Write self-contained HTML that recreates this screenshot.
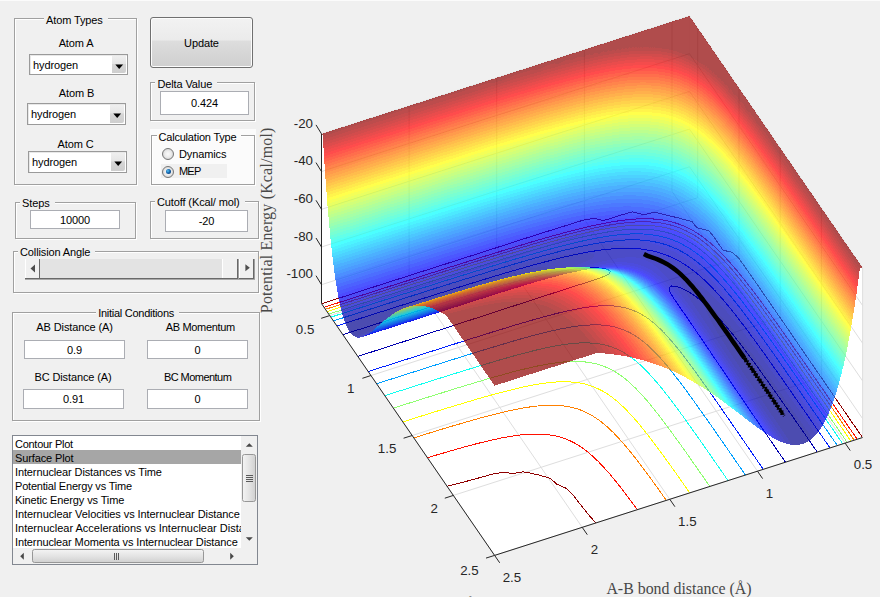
<!DOCTYPE html>
<html><head><meta charset="utf-8"><title>LEPS GUI</title>
<style>
html,body{margin:0;padding:0}
body{width:880px;height:597px;background:#f0f0f0;position:relative;overflow:hidden;font-family:"Liberation Sans",sans-serif;font-size:11px;color:#000}
</style>
</head><body>
<style>
.pn{position:absolute;border:1px solid #a0a0a0;box-shadow:1px 1px 0 #fff, inset 1px 1px 0 #fff;box-sizing:border-box}
.pt{position:absolute;background:#f0f0f0;white-space:nowrap;line-height:13px;height:13px;padding:0 5px 0 2px}
.lb{position:absolute;white-space:nowrap;line-height:13px;height:13px;text-align:center;transform:translateX(-50%)}
.ed{position:absolute;box-sizing:border-box;background:#fff;border:1px solid #abadb3;text-align:center;white-space:nowrap}
.pop{position:absolute;box-sizing:border-box;background:#fff;border:1px solid #9a9a9a;box-shadow:inset 1px 1px 0 #e8e8e8}
.pop span{position:absolute;left:3px;top:4px;line-height:13px}
.pop i{position:absolute;right:1px;top:1px;bottom:1px;width:14px;background:linear-gradient(#efefef 0,#e5e5e5 46%,#d6d6d6 48%,#cecece 100%);border-radius:0 0 2px 0;box-sizing:border-box}
.rd{position:absolute;width:12px;height:12px;border-radius:50%;box-sizing:border-box;border:1px solid #767676;background:radial-gradient(circle at 50% 50%,#fafafa 0,#ececec 45%,#c4c4c4 100%)}
.li{position:absolute;left:2px;height:14px;line-height:14px;white-space:nowrap}
</style>
<div id="panel" style="position:absolute;left:0;top:0;width:880px;height:597px;font-family:'Liberation Sans',sans-serif;font-size:11px;color:#000;letter-spacing:-0.12px">
<div style="position:absolute;left:0;top:0;width:880px;height:1px;background:#fbfbfb"></div>

<!-- Atom Types -->
<div class="pn" style="left:14px;top:18px;width:123px;height:167px"></div>
<div class="pt" style="left:44px;top:14px">Atom Types</div>
<div class="lb" style="left:76px;top:37px">Atom A</div>
<div class="pop" style="left:29px;top:54px;width:99px;height:21px"><span>hydrogen</span><i><svg width="14" height="20" style="position:absolute;left:0;top:0"><path d="M3.3 8.6h7.8l-3.9 4.3z" fill="#000"/></svg></i></div>
<div class="lb" style="left:76.5px;top:87px">Atom B</div>
<div class="pop" style="left:27px;top:103px;width:99px;height:22px"><span>hydrogen</span><i><svg width="14" height="20" style="position:absolute;left:0;top:0"><path d="M3.3 8.6h7.8l-3.9 4.3z" fill="#000"/></svg></i></div>
<div class="lb" style="left:75.5px;top:138px">Atom C</div>
<div class="pop" style="left:28px;top:151px;width:99px;height:22px"><span>hydrogen</span><i><svg width="14" height="20" style="position:absolute;left:0;top:0"><path d="M3.3 8.6h7.8l-3.9 4.3z" fill="#000"/></svg></i></div>

<!-- Update button -->
<div style="position:absolute;left:150px;top:17px;width:103px;height:51px;box-sizing:border-box;border:1px solid #707070;border-radius:3px;background:linear-gradient(#f2f2f2 0,#ebebeb 45%,#dddddd 47%,#cfcfcf 100%);box-shadow:inset 0 0 0 1px #fcfcfc;text-align:center;line-height:50px">Update</div>

<!-- Delta Value -->
<div class="pn" style="left:150px;top:82px;width:105px;height:39px"></div>
<div class="pt" style="left:155.4px;top:78px">Delta Value</div>
<div class="ed" style="left:160px;top:91px;width:89px;height:24px;line-height:22px">0.424</div>

<!-- Calculation Type -->
<div style="position:absolute;left:150px;top:129px;width:106px;height:57px;background:#fbfbfb"></div>
<div class="pn" style="left:151px;top:135px;width:104px;height:50px"></div>
<div class="pt" style="left:156.5px;top:131px;background:#fbfbfb;letter-spacing:-0.2px">Calculation Type</div>
<div class="rd" style="left:162px;top:148px"></div>
<div class="lb" style="left:179px;top:148px;transform:none">Dynamics</div>
<div style="position:absolute;left:161px;top:164px;width:66px;height:14px;background:#f0f0f0"></div>
<div class="rd" style="left:162px;top:165.5px"><b style="position:absolute;left:2.5px;top:2.5px;width:5px;height:5px;border-radius:50%;background:radial-gradient(circle at 38% 38%,#58c8f8 0,#1466b0 45%,#0a2c60 100%)"></b></div>
<div class="lb" style="left:179px;top:165px;transform:none;letter-spacing:-0.8px">MEP</div>

<!-- Steps -->
<div class="pn" style="left:15px;top:202px;width:121px;height:37px"></div>
<div class="pt" style="left:20px;top:197px">Steps</div>
<div class="ed" style="left:30px;top:210px;width:90px;height:19px;line-height:18.5px">10000</div>

<!-- Cutoff -->
<div class="pn" style="left:150px;top:201px;width:109px;height:38px"></div>
<div class="pt" style="left:155px;top:196px">Cutoff (Kcal/ mol)</div>
<div class="ed" style="left:165px;top:210px;width:83px;height:22px;line-height:20px">-20</div>

<!-- Collision Angle -->
<div class="pn" style="left:13px;top:251px;width:246px;height:42px"></div>
<div class="pt" style="left:18px;top:246px">Collision Angle</div>
<div style="position:absolute;left:25px;top:259px;width:230px;height:19px;background:#e3e3e3"></div>
<div style="position:absolute;left:25px;top:278px;width:230px;height:1px;background:#696969"></div>
<div style="position:absolute;left:25px;top:279px;width:230px;height:1px;background:#a9a9a9"></div>
<div style="position:absolute;left:25px;top:259px;width:14px;height:19px;background:#f0f0f0;border-left:1px solid #fff;box-sizing:border-box"><svg width="13" height="19" style="position:absolute;left:0;top:0"><path d="M9 5.5 4.5 9.5 9 13.5z" fill="#4d4d4d"/></svg></div>
<div style="position:absolute;left:39px;top:259px;width:1px;height:20px;background:#696969"></div>
<div style="position:absolute;left:221.5px;top:259px;width:16px;height:19px;background:#f0f0f0;border-left:1.5px solid #fff;box-sizing:border-box"></div>
<div style="position:absolute;left:237px;top:259px;width:1px;height:20px;background:#696969"></div>
<div style="position:absolute;left:238px;top:259px;width:1px;height:20px;background:#a0a0a0"></div>
<div style="position:absolute;left:239px;top:259px;width:14px;height:19px;background:#f0f0f0;border-left:1px solid #fff;box-sizing:border-box"><svg width="14" height="19" style="position:absolute;left:0;top:0"><path d="M5.4 5.2 9.8 8.7 5.4 12.2z" fill="#4d4d4d"/></svg></div>
<div style="position:absolute;left:253px;top:259px;width:1px;height:20px;background:#696969"></div>
<div style="position:absolute;left:254px;top:259px;width:1px;height:20px;background:#a0a0a0"></div>

<!-- Initial Conditions -->
<div class="pn" style="left:12px;top:312px;width:248px;height:109px"></div>
<div class="pt" style="left:96.2px;top:307px;letter-spacing:-0.27px">Initial Conditions</div>
<div class="lb" style="left:74.6px;top:321px">AB Distance (A)</div>
<div class="lb" style="left:200.3px;top:321px;letter-spacing:-0.35px">AB Momentum</div>
<div class="ed" style="left:24px;top:340px;width:101px;height:19px;line-height:18.5px">0.9</div>
<div class="ed" style="left:147px;top:340px;width:101px;height:19px;line-height:18.5px">0</div>
<div class="lb" style="left:73px;top:371px">BC Distance (A)</div>
<div class="lb" style="left:197.6px;top:371px;letter-spacing:-0.55px">BC Momentum</div>
<div class="ed" style="left:23px;top:389px;width:101px;height:20px;line-height:18px">0.91</div>
<div class="ed" style="left:147px;top:389px;width:101px;height:20px;line-height:18px">0</div>

<!-- Listbox -->
<div style="position:absolute;left:12px;top:435px;width:246px;height:130px;box-sizing:border-box;background:#fff;border:1px solid #828790;overflow:hidden">
 <div style="position:absolute;left:0;top:0;width:228px;height:112px;overflow:hidden">
  <div style="position:absolute;left:0;top:14px;width:228px;height:14px;background:#a6a6a6"></div>
  <div class="li" style="top:1px;letter-spacing:-0.27px">Contour Plot</div>
  <div class="li" style="top:15px">Surface Plot</div>
  <div class="li" style="top:29px">Internuclear Distances vs Time</div>
  <div class="li" style="top:43px;letter-spacing:-0.2px">Potential Energy vs Time</div>
  <div class="li" style="top:57px">Kinetic Energy vs Time</div>
  <div class="li" style="top:71px;letter-spacing:-0.08px">Internuclear Velocities vs Internuclear Distance</div>
  <div class="li" style="top:85px;letter-spacing:0">Internuclear Accelerations vs Internuclear Distance</div>
  <div class="li" style="top:99px">Internuclear Momenta vs Internuclear Distance</div>
 </div>
 <!-- vertical scrollbar -->
 <div style="position:absolute;left:228px;top:0;width:16px;height:112px;background:#f0f0f0"></div>
 <svg width="16" height="112" style="position:absolute;left:228px;top:0">
  <path d="M4.8 10.8 8.3 7.2 11.8 10.8z" fill="#484848"/>
  <path d="M4.8 101.2 8.3 104.8 11.8 101.2z" fill="#484848"/>
  <defs><linearGradient id="vg" x1="0" x2="1" y1="0" y2="0"><stop offset="0" stop-color="#f4f4f4"/><stop offset=".5" stop-color="#e4e4e4"/><stop offset="1" stop-color="#d0d0d0"/></linearGradient>
  <linearGradient id="hg" x1="0" x2="0" y1="0" y2="1"><stop offset="0" stop-color="#f4f4f4"/><stop offset=".5" stop-color="#e4e4e4"/><stop offset="1" stop-color="#d0d0d0"/></linearGradient></defs>
  <rect x="1.5" y="18.5" width="13" height="47" rx="2" fill="url(#vg)" stroke="#979797"/>
  <path d="M5 39.5h7M5 41.5h7M5 43.5h7M5 45.5h7" stroke="#5a5a5a" stroke-width="1"/>
 </svg>
 <!-- horizontal scrollbar -->
 <div style="position:absolute;left:0;top:112px;width:244px;height:16px;background:#f0f0f0"></div>
 <svg width="244" height="16" style="position:absolute;left:0;top:112px">
  <path d="M10.8 4.8 7.2 8.3 10.8 11.8z" fill="#484848"/>
  <path d="M217.2 4.8 220.8 8.3 217.2 11.8z" fill="#484848"/>
  <rect x="19.5" y="1.5" width="171" height="13" rx="2" fill="url(#hg)" stroke="#979797"/>
  <path d="M101.5 5v7M103.5 5v7M105.5 5v7" stroke="#5a5a5a" stroke-width="1"/>
 </svg>
</div>
</div>

<svg width="880" height="597" viewBox="0 0 880 597" style="position:absolute;left:0;top:0">
<polygon points="321.5,303.6 689.5,185.7 862.6,437.5 494.6,555.4" fill="#fff"/>
<polygon points="321.5,303.6 689.5,185.7 689.5,16.0 321.5,133.9" fill="#fff"/>
<polygon points="689.5,185.7 862.6,437.5 862.6,267.8 689.5,16.0" fill="#fff"/>
<g stroke="#dedede" stroke-width="1"><line x1="672.0" y1="191.3" x2="845.1" y2="443.1"/><line x1="697.7" y1="197.7" x2="329.7" y2="315.6"/><line x1="672.0" y1="191.3" x2="672.0" y2="21.6"/><line x1="697.7" y1="197.7" x2="697.7" y2="28.0"/><line x1="584.4" y1="219.4" x2="757.5" y2="471.2"/><line x1="739.0" y1="257.6" x2="371.0" y2="375.5"/><line x1="584.4" y1="219.4" x2="584.4" y2="49.7"/><line x1="739.0" y1="257.6" x2="739.0" y2="87.9"/><line x1="496.7" y1="247.5" x2="669.8" y2="499.3"/><line x1="780.2" y1="317.6" x2="412.2" y2="435.5"/><line x1="496.7" y1="247.5" x2="496.7" y2="77.8"/><line x1="780.2" y1="317.6" x2="780.2" y2="147.9"/><line x1="409.1" y1="275.5" x2="582.2" y2="527.3"/><line x1="821.4" y1="377.5" x2="453.4" y2="495.4"/><line x1="409.1" y1="275.5" x2="409.1" y2="105.8"/><line x1="821.4" y1="377.5" x2="821.4" y2="207.8"/><line x1="321.5" y1="303.6" x2="494.6" y2="555.4"/><line x1="862.6" y1="437.5" x2="494.6" y2="555.4"/><line x1="321.5" y1="303.6" x2="321.5" y2="133.9"/><line x1="862.6" y1="437.5" x2="862.6" y2="267.8"/><line x1="321.5" y1="284.7" x2="689.5" y2="166.8"/><line x1="689.5" y1="166.8" x2="862.6" y2="418.6"/><line x1="321.5" y1="247.0" x2="689.5" y2="129.1"/><line x1="689.5" y1="129.1" x2="862.6" y2="380.9"/><line x1="321.5" y1="209.3" x2="689.5" y2="91.4"/><line x1="689.5" y1="91.4" x2="862.6" y2="343.2"/><line x1="321.5" y1="171.6" x2="689.5" y2="53.7"/><line x1="689.5" y1="53.7" x2="862.6" y2="305.5"/><line x1="321.5" y1="133.9" x2="689.5" y2="16.0"/><line x1="689.5" y1="16.0" x2="862.6" y2="267.8"/></g>
<g fill="none" stroke-width="1" shape-rendering="crispEdges"><polyline points="342.8,334.6 345.5,333.8 348.1,333.0 350.8,332.1 353.4,331.3 356.0,330.4 358.7,329.6 361.3,328.8 363.9,327.9 366.6,327.1 369.2,326.3 371.9,325.4 374.5,324.6 377.1,323.7 379.8,322.9 382.4,322.1 385.1,321.2 387.7,320.4 390.3,319.6 393.0,318.7 395.6,317.9 398.3,317.1 400.9,316.2 403.6,315.4 406.2,314.6 408.8,313.7 411.5,312.9 414.1,312.1 416.8,311.2 419.4,310.4 422.1,309.6 424.7,308.7 427.4,307.9 430.0,307.1 432.6,306.3 435.3,305.4 437.9,304.6 440.6,303.8 443.2,303.0 445.9,302.2 448.6,301.3 451.2,300.5 453.9,299.7 456.5,298.9 459.2,298.1 461.8,297.3 464.5,296.5 467.2,295.7 469.8,294.9 472.5,294.1 475.1,293.3 477.8,292.5 480.5,291.7 483.2,290.9 485.8,290.1 488.5,289.3 491.2,288.5 493.9,287.7 496.6,287.0 499.2,286.2 501.9,285.4 504.6,284.7 507.3,283.9 510.0,283.2 512.7,282.4 515.4,281.7 518.1,281.0 520.9,280.3 523.6,279.5 526.3,278.8 529.1,278.1 531.8,277.4 534.5,276.8 537.3,276.1 540.1,275.4 542.8,274.8 545.6,274.2 548.4,273.6 551.2,273.0 553.9,272.4 556.9,271.8 559.7,271.3 562.6,270.8 565.5,270.3 568.4,269.8 571.3,269.4 574.2,269.0 577.0,268.7 580.2,268.3 583.2,268.1 586.3,267.9 589.4,267.8 592.6,267.7 595.8,267.8 599.3,268.0 602.8,268.4 605.7,269.0 608.0,269.7 610.2,271.2 609.5,273.6 607.3,275.0 604.8,276.1 602.3,277.1 599.7,278.1 597.2,279.0 594.5,279.8 591.9,280.7 589.3,281.6 586.6,282.4 584.0,283.2 581.4,284.1 578.7,284.9 576.1,285.8 573.5,286.6 570.8,287.4 568.2,288.3 565.6,289.1 562.9,290.0 560.3,290.8 557.7,291.7 555.0,292.5 552.4,293.4 549.8,294.2 547.1,295.1 544.5,295.9 541.9,296.8 539.2,297.6 536.6,298.5 534.0,299.3 531.4,300.2 528.7,301.1 526.1,301.9 523.5,302.8 520.9,303.6 518.2,304.5 515.6,305.3 513.0,306.2 510.3,307.0 507.7,307.9 505.1,308.8 502.5,309.6 499.8,310.5 497.2,311.3 494.6,312.2 492.0,313.0 489.3,313.9 486.7,314.7 484.1,315.6 481.4,316.4 478.8,317.3 476.2,318.2 473.6,319.0 470.9,319.9 468.3,320.7 465.7,321.6 463.0,322.4 460.4,323.3 457.8,324.1 455.2,325.0 452.5,325.8 449.9,326.7 447.3,327.5 444.6,328.4 442.0,329.2 439.4,330.1 436.7,330.9 434.1,331.8 431.5,332.6 428.9,333.5 426.2,334.3 423.6,335.2 421.0,336.0 418.3,336.9 415.7,337.7 413.1,338.6 410.4,339.4 407.8,340.3 405.2,341.1 402.5,342.0 399.9,342.8 397.3,343.7 394.6,344.5 392.0,345.4 389.4,346.2 386.8,347.1 384.1,347.9 381.5,348.8 378.9,349.6 376.2,350.5 373.6,351.3 371.0,352.2 368.3,353.0 365.7,353.9 363.1,354.7 360.4,355.5 357.8,356.4" stroke="#0000af"/><polyline points="785.4,462.2 784.2,460.4 783.0,458.6 781.7,456.8 780.5,455.0 779.3,453.2 778.0,451.4 776.8,449.6 775.6,447.8 774.3,446.0 773.1,444.2 771.9,442.4 770.6,440.6 769.4,438.8 768.2,437.0 766.9,435.2 765.7,433.3 764.5,431.5 763.2,429.7 762.0,427.9 760.8,426.1 759.5,424.3 758.3,422.5 757.1,420.7 755.8,418.9 754.6,417.1 753.4,415.3 752.1,413.5 750.9,411.7 749.7,409.9 748.5,408.1 747.2,406.3 746.0,404.5 744.8,402.7 743.5,400.8 742.3,399.0 741.1,397.2 739.9,395.4 738.6,393.6 737.4,391.8 736.2,390.0 734.9,388.2 733.7,386.4 732.5,384.6 731.3,382.8 730.0,381.0 728.8,379.2 727.6,377.4 726.4,375.5 725.1,373.7 723.9,371.9 722.7,370.1 721.5,368.3 720.2,366.5 719.0,364.7 717.8,362.9 716.6,361.1 715.4,359.3 714.1,357.5 712.9,355.7 711.7,353.9 710.5,352.0 709.2,350.2 708.0,348.4 706.8,346.6 705.6,344.8 704.4,343.0 703.1,341.2 701.9,339.4 700.7,337.6 699.4,335.8 698.2,334.0 697.0,332.2 695.8,330.4 694.5,328.5 693.3,326.7 692.1,324.9 690.8,323.1 689.6,321.3 688.4,319.5 687.1,317.7 685.9,315.9 684.6,314.1 683.4,312.3 682.1,310.5 680.9,308.7 679.7,306.9 678.4,305.1 677.2,303.3 675.9,301.5 674.7,299.7 673.5,297.9 672.0,295.4 670.6,293.0 669.6,290.8 669.2,287.5 671.6,286.0 675.0,286.2 677.6,286.8 680.1,287.7 683.1,288.9 685.8,290.3 688.3,291.7 690.3,292.9 692.2,294.1 694.2,295.5 696.4,297.0 698.5,298.7 700.5,300.2 702.4,301.8 704.2,303.4 706.0,305.1 707.8,306.7 709.5,308.4 711.2,310.0 712.8,311.7 714.5,313.4 716.1,315.0 717.7,316.7 719.2,318.4 720.7,320.2 722.3,321.9 723.8,323.6 725.2,325.3 726.7,327.0 728.2,328.8 729.6,330.5 731.0,332.3 732.5,334.0 733.9,335.8 735.2,337.5 736.6,339.3 738.0,341.0 739.4,342.8 740.8,344.5 742.1,346.3 743.5,348.1 744.8,349.8 746.1,351.6 747.5,353.4 748.8,355.2 750.1,356.9 751.4,358.7 752.8,360.5 754.1,362.3 755.4,364.1 756.7,365.8 758.0,367.6 759.3,369.4 760.6,371.2 761.8,373.0 763.1,374.8 764.4,376.6 765.7,378.3 767.0,380.1 768.3,381.9 769.5,383.7 770.8,385.5 772.1,387.3 773.3,389.1 774.6,390.9 775.9,392.7 777.2,394.5 778.4,396.3 779.7,398.1 780.9,399.9 782.2,401.7 783.5,403.4 784.7,405.3 786.0,407.0 787.2,408.8 788.5,410.6 789.7,412.4 791.0,414.2 792.3,416.0 793.5,417.8 794.8,419.6 796.0,421.4 797.3,423.2 798.5,425.0 799.8,426.8 801.0,428.6 802.3,430.4 803.5,432.2 804.8,434.0 806.0,435.8 807.3,437.6 808.5,439.4 809.7,441.2 811.0,443.0 812.2,444.8 813.5,446.6 814.7,448.4 816.0,450.2 817.2,452.0" stroke="#0000af"/><polyline points="336.8,325.9 339.5,325.1 342.1,324.2 344.7,323.4 347.4,322.5 350.0,321.7 352.7,320.9 355.3,320.0 357.9,319.2 360.6,318.3 363.2,317.5 365.8,316.6 368.5,315.8 371.1,315.0 373.7,314.1 376.4,313.3 379.0,312.4 381.7,311.6 384.3,310.8 386.9,309.9 389.6,309.1 392.2,308.2 394.9,307.4 397.5,306.6 400.1,305.7 402.8,304.9 405.4,304.1 408.0,303.2 410.7,302.4 413.3,301.5 416.0,300.7 418.6,299.9 421.3,299.0 423.9,298.2 426.5,297.4 429.2,296.5 431.8,295.7 434.5,294.9 437.1,294.0 439.7,293.2 442.4,292.4 445.0,291.6 447.7,290.7 450.3,289.9 453.0,289.1 455.6,288.2 458.3,287.4 460.9,286.6 463.6,285.8 466.2,284.9 468.9,284.1 471.5,283.3 474.2,282.5 476.8,281.7 479.5,280.9 482.1,280.0 484.8,279.2 487.5,278.4 490.1,277.6 492.8,276.8 495.4,276.0 498.1,275.2 500.8,274.4 503.4,273.6 506.1,272.8 508.8,272.0 511.5,271.3 514.1,270.5 516.8,269.7 519.5,268.9 522.2,268.2 524.9,267.4 527.6,266.6 530.3,265.9 533.0,265.1 535.7,264.4 538.4,263.6 541.1,262.9 543.8,262.2 546.5,261.5 549.3,260.8 552.0,260.1 554.7,259.4 557.5,258.7 560.2,258.0 563.0,257.3 565.8,256.7 568.5,256.1 571.3,255.4 574.1,254.8 576.9,254.2 579.7,253.7 582.6,253.1 585.4,252.6 588.3,252.0 591.2,251.5 594.0,251.1 597.0,250.6 599.9,250.2 602.8,249.8 605.8,249.5 608.8,249.2 611.8,248.9 614.9,248.7 618.0,248.5 621.1,248.4 624.3,248.3 627.5,248.3 630.7,248.3 634.1,248.5 637.1,248.7 640.6,249.0 643.9,249.4 646.8,249.9 649.9,250.4 652.7,251.0 655.3,251.6 657.8,252.3 660.2,253.0 662.5,253.8 665.1,254.7 667.8,255.7 670.8,257.0 673.6,258.3 675.9,259.4 678.0,260.5 680.5,261.9 682.8,263.3 684.7,264.5 686.7,265.8 688.7,267.2 690.8,268.7 693.0,270.3 695.0,271.9 697.0,273.5 698.9,275.1 700.7,276.7 702.5,278.3 704.3,280.0 706.1,281.6 707.8,283.2 709.4,284.9 711.1,286.6 712.7,288.3 714.3,290.0 715.9,291.6 717.3,293.2 719.0,295.1 720.5,296.8 722.0,298.5 723.5,300.2 724.9,301.9 726.4,303.7 727.9,305.4 729.3,307.2 730.7,308.9 732.1,310.6 733.5,312.4 734.9,314.1 736.3,315.9 737.7,317.7 739.0,319.4 740.4,321.2 741.7,323.0 743.1,324.7 744.4,326.5 745.8,328.3 747.1,330.0 748.4,331.8 749.7,333.6 751.0,335.4 752.4,337.2 753.7,338.9 755.0,340.7 756.3,342.5 757.6,344.3 758.9,346.1 760.1,347.9 761.4,349.6 762.7,351.4 764.0,353.2 765.3,355.0 766.6,356.8 767.8,358.6 769.1,360.4 770.4,362.2 771.6,364.0 772.9,365.8 774.2,367.6 775.4,369.4 776.7,371.2 778.0,372.9 779.2,374.7 780.5,376.5 781.8,378.3 783.0,380.1 784.3,381.9 785.5,383.7 786.8,385.5 788.0,387.3 789.3,389.1 790.5,390.9 791.8,392.7 793.0,394.5 794.3,396.3 795.5,398.1 796.8,399.9 798.0,401.7 799.3,403.5 800.5,405.3 801.8,407.1 803.0,408.9 804.3,410.7 805.5,412.5 806.8,414.3 808.0,416.1 809.3,417.9 810.5,419.7 811.8,421.5 813.0,423.3 814.3,425.1 815.5,426.9 816.7,428.7 818.0,430.5 819.2,432.3 820.5,434.1 821.7,435.9 823.0,437.7 824.2,439.5 825.4,441.3 826.7,443.1 827.9,444.9 829.2,446.7 830.0,447.9" stroke="#0020ff"/><polyline points="763.3,469.3 762.0,467.5 760.8,465.7 759.5,463.9 758.3,462.1 757.1,460.3 755.8,458.5 754.6,456.7 753.3,454.9 752.1,453.1 750.9,451.3 749.6,449.5 748.4,447.7 747.1,445.9 745.9,444.1 744.7,442.3 743.4,440.5 742.2,438.7 740.9,436.9 739.7,435.1 738.5,433.3 737.2,431.5 736.0,429.7 734.7,427.9 733.5,426.1 732.2,424.3 731.0,422.5 729.8,420.7 728.5,418.9 727.3,417.1 726.0,415.3 724.8,413.5 723.5,411.7 722.3,409.9 721.0,408.1 719.8,406.3 718.5,404.5 717.3,402.7 716.0,400.9 714.8,399.1 713.5,397.3 712.2,395.5 711.0,393.7 709.7,391.9 708.5,390.1 707.2,388.3 705.9,386.5 704.6,384.7 703.4,382.9 702.1,381.1 700.8,379.3 699.5,377.5 698.3,375.8 697.0,374.0 695.7,372.2 694.4,370.4 693.1,368.6 691.8,366.8 690.4,365.1 689.1,363.3 687.8,361.5 686.5,359.7 685.1,358.0 683.8,356.2 682.4,354.4 681.1,352.7 679.7,350.9 678.3,349.2 676.8,347.4 675.4,345.7 674.0,343.9 672.5,342.2 671.0,340.5 669.5,338.8 668.0,337.0 666.5,335.3 664.9,333.6 663.3,332.0 661.6,330.3 659.9,328.6 658.2,327.0 656.4,325.4 654.6,323.7 652.7,322.2 650.7,320.6 648.7,319.0 646.5,317.5 644.2,316.1 642.1,314.8 640.2,313.7 637.5,312.3 634.7,311.1 632.5,310.2 629.7,309.2 627.0,308.4 624.5,307.7 621.9,307.1 618.8,306.6 615.9,306.2 612.5,305.9 609.1,305.8 605.9,305.7 602.7,305.8 599.6,305.9 596.5,306.2 593.5,306.4 590.5,306.8 587.6,307.2 584.7,307.6 581.8,308.1 578.9,308.6 576.1,309.1 573.2,309.7 570.4,310.3 567.6,310.9 564.9,311.5 562.1,312.2 559.3,312.8 556.6,313.5 554.1,314.1 551.1,314.9 548.4,315.6 545.7,316.4 543.0,317.1 540.3,317.8 537.6,318.6 534.9,319.4 532.2,320.1 529.5,320.9 526.8,321.7 524.2,322.5 521.5,323.2 518.8,324.0 516.1,324.8 513.5,325.6 510.8,326.4 508.2,327.3 505.5,328.1 502.8,328.9 500.2,329.7 497.5,330.5 494.9,331.3 492.2,332.1 489.6,333.0 486.9,333.8 484.3,334.6 481.6,335.4 479.0,336.3 476.4,337.1 473.7,337.9 471.1,338.8 468.4,339.6 465.8,340.4 463.1,341.3 460.5,342.1 457.9,342.9 455.2,343.8 452.6,344.6 449.9,345.5 447.3,346.3 444.7,347.1 442.0,348.0 439.4,348.8 436.8,349.7 434.1,350.5 431.5,351.3 428.8,352.2 426.2,353.0 423.6,353.9 420.9,354.7 418.3,355.5 415.7,356.4 413.0,357.2 410.4,358.1 407.8,358.9 405.1,359.8 402.5,360.6 399.8,361.4 397.2,362.3 394.6,363.1 391.9,364.0 389.3,364.8 386.7,365.7 384.0,366.5 381.4,367.3 378.8,368.2 376.1,369.0 373.5,369.9 370.9,370.7 368.2,371.6" stroke="#0020ff"/><polyline points="333.4,320.9 336.0,320.0 338.7,319.2 341.3,318.4 343.9,317.5 346.6,316.7 349.2,315.8 351.8,315.0 354.5,314.1 357.1,313.3 359.7,312.5 362.4,311.6 365.0,310.8 367.7,309.9 370.3,309.1 372.9,308.3 375.6,307.4 378.2,306.6 380.8,305.7 383.5,304.9 386.1,304.1 388.8,303.2 391.4,302.4 394.0,301.5 396.7,300.7 399.3,299.9 401.9,299.0 404.6,298.2 407.2,297.3 409.9,296.5 412.5,295.7 415.1,294.8 417.8,294.0 420.4,293.1 423.1,292.3 425.7,291.5 428.3,290.6 431.0,289.8 433.6,289.0 436.3,288.1 438.9,287.3 441.5,286.5 444.2,285.6 446.8,284.8 449.5,284.0 452.1,283.1 454.8,282.3 457.4,281.5 460.1,280.7 462.7,279.8 465.4,279.0 468.0,278.2 470.7,277.4 473.3,276.5 476.0,275.7 478.6,274.9 481.3,274.1 483.9,273.3 486.6,272.4 489.2,271.6 491.9,270.8 494.5,270.0 497.2,269.2 499.9,268.4 502.5,267.6 505.2,266.8 507.8,266.0 510.5,265.2 513.2,264.4 515.9,263.6 518.5,262.8 521.2,262.1 523.9,261.3 526.6,260.5 529.3,259.7 531.9,259.0 534.6,258.2 537.3,257.4 540.0,256.7 542.7,255.9 545.4,255.2 547.9,254.5 550.9,253.7 553.6,253.0 556.3,252.3 559.0,251.6 561.8,250.9 564.5,250.2 567.3,249.6 570.0,248.9 572.8,248.2 575.6,247.6 578.4,247.0 581.2,246.4 584.0,245.8 586.8,245.2 589.6,244.6 592.5,244.1 595.3,243.6 598.2,243.1 601.1,242.6 604.0,242.1 606.9,241.7 609.6,241.4 612.8,241.0 615.8,240.7 618.9,240.4 621.9,240.2 625.0,240.0 628.0,239.9 631.3,239.8 634.5,239.8 637.8,239.9 641.1,240.1 644.6,240.4 648.0,240.8 651.3,241.2 654.0,241.7 657.0,242.3 659.7,242.9 662.2,243.6 664.5,244.3 666.8,245.0 670.0,246.2 673.0,247.4 676.0,248.7 678.7,250.0 681.0,251.2 683.0,252.3 685.4,253.8 687.7,255.2 689.9,256.7 692.1,258.2 694.2,259.7 696.2,261.3 698.2,262.8 700.1,264.4 702.0,266.0 703.9,267.6 705.6,269.3 707.2,270.7 709.1,272.5 710.8,274.2 712.5,275.9 714.1,277.5 715.7,279.2 717.3,280.9 718.9,282.6 720.4,284.3 722.0,286.0 723.5,287.7 725.0,289.5 726.4,291.2 727.9,292.9 729.3,294.7 730.8,296.4 732.2,298.1 733.6,299.9 735.0,301.6 736.4,303.4 737.8,305.2 739.2,306.9 740.6,308.7 741.9,310.4 743.3,312.2 744.6,314.0 746.0,315.7 747.3,317.5 748.6,319.3 749.9,321.1 751.3,322.8 752.6,324.6 753.9,326.4 755.2,328.2 756.5,330.0 757.8,331.7 759.1,333.5 760.4,335.3 761.7,337.1 763.0,338.9 764.3,340.7 765.5,342.5 766.8,344.3 768.1,346.0 769.4,347.8 770.6,349.6 771.9,351.4 773.2,353.2 774.5,355.0 775.7,356.8 777.0,358.6 778.3,360.4 779.5,362.2 780.8,364.0 782.0,365.8 783.3,367.6 784.6,369.4 785.8,371.2 787.1,373.0 788.3,374.8 789.6,376.6 790.8,378.4 792.1,380.2 793.3,382.0 794.6,383.8 795.8,385.6 797.1,387.4 798.3,389.2 799.6,391.0 800.8,392.8 802.1,394.6 803.3,396.4 804.6,398.2 805.8,400.0 807.1,401.8 808.3,403.6 809.6,405.4 810.8,407.2 812.1,409.0 813.3,410.8 814.6,412.6 815.8,414.4 817.0,416.2 818.3,418.0 819.5,419.8 820.8,421.6 822.0,423.4 823.3,425.2 824.5,427.0 825.7,428.8 827.0,430.6 828.2,432.4 829.5,434.2 830.7,436.0 832.0,437.8 833.2,439.6 834.4,441.4 835.7,443.2 836.9,445.0 837.3,445.6" stroke="#009fff"/><polyline points="745.4,475.0 744.2,473.2 742.9,471.4 741.7,469.6 740.5,467.8 739.2,466.0 738.0,464.2 736.7,462.4 735.5,460.6 734.2,458.8 733.0,457.0 731.7,455.2 730.5,453.4 729.3,451.6 728.0,449.8 726.8,448.0 725.5,446.2 724.3,444.4 723.0,442.6 721.8,440.8 720.5,439.0 719.3,437.2 718.0,435.4 716.8,433.6 715.5,431.8 714.3,430.0 713.0,428.2 711.8,426.4 710.5,424.6 709.3,422.8 708.0,421.0 706.7,419.2 705.5,417.4 704.2,415.6 702.9,413.9 701.7,412.1 700.4,410.3 699.1,408.5 697.9,406.7 696.6,404.9 695.3,403.1 694.0,401.3 692.7,399.5 691.4,397.7 690.2,396.0 688.9,394.2 687.6,392.4 686.2,390.6 684.9,388.8 683.6,387.0 682.3,385.3 681.0,383.5 679.6,381.7 678.3,380.0 676.9,378.2 675.6,376.4 674.2,374.7 672.8,372.9 671.4,371.2 670.0,369.4 668.6,367.7 667.2,365.9 665.7,364.2 664.2,362.5 662.7,360.7 661.2,359.0 659.7,357.3 658.1,355.6 656.6,353.9 654.9,352.2 653.3,350.6 651.6,348.9 649.9,347.3 648.1,345.6 646.2,344.0 644.3,342.4 642.4,340.9 640.3,339.3 638.2,337.8 636.0,336.3 633.7,334.9 631.5,333.6 629.5,332.5 626.7,331.2 623.8,329.9 620.7,328.8 618.3,328.0 615.9,327.3 613.3,326.7 610.5,326.1 607.9,325.7 604.3,325.3 600.9,325.0 597.6,324.9 594.4,324.9 591.4,324.9 588.1,325.1 585.1,325.3 582.0,325.6 579.3,325.9 576.1,326.3 573.2,326.7 570.3,327.2 567.4,327.7 564.5,328.2 561.7,328.7 558.9,329.3 556.1,329.9 553.3,330.5 550.5,331.2 547.7,331.8 545.0,332.5 542.2,333.2 539.5,333.9 536.8,334.6 534.1,335.3 531.3,336.0 528.6,336.8 525.9,337.5 523.2,338.3 520.5,339.0 517.8,339.8 515.3,340.5 512.5,341.3 509.8,342.1 507.1,342.9 504.5,343.7 501.8,344.5 499.1,345.3 496.4,346.1 493.8,346.9 491.1,347.7 488.5,348.5 485.8,349.3 483.2,350.1 480.5,350.9 477.8,351.7 475.2,352.6 472.5,353.4 469.9,354.2 467.2,355.0 464.6,355.9 462.0,356.7 459.3,357.5 456.7,358.3 454.0,359.2 451.4,360.0 448.7,360.8 446.1,361.7 443.4,362.5 440.8,363.3 438.2,364.2 435.5,365.0 432.9,365.8 430.2,366.7 427.6,367.5 425.0,368.4 422.3,369.2 419.7,370.0 417.0,370.9 414.4,371.7 411.8,372.6 409.1,373.4 406.5,374.2 403.9,375.1 401.2,375.9 398.6,376.8 396.0,377.6 393.3,378.4 390.7,379.3 388.0,380.1 385.4,381.0 382.8,381.8 380.1,382.7 377.5,383.5 376.6,383.8" stroke="#009fff"/><polyline points="330.8,317.2 333.5,316.3 336.1,315.5 338.7,314.6 341.4,313.8 344.0,312.9 346.6,312.1 349.3,311.3 351.9,310.4 354.5,309.6 357.2,308.7 359.8,307.9 362.5,307.0 365.1,306.2 367.7,305.4 370.4,304.5 373.0,303.7 375.6,302.8 378.3,302.0 380.9,301.2 383.5,300.3 386.2,299.5 388.8,298.6 391.5,297.8 394.1,297.0 396.7,296.1 399.4,295.3 402.0,294.4 404.6,293.6 407.3,292.8 409.9,291.9 412.6,291.1 415.2,290.2 417.8,289.4 420.5,288.6 423.1,287.7 425.8,286.9 428.4,286.1 431.0,285.2 433.7,284.4 436.3,283.5 439.0,282.7 441.6,281.9 444.2,281.0 446.9,280.2 449.5,279.4 452.2,278.5 454.8,277.7 457.5,276.9 460.1,276.1 462.8,275.2 465.4,274.4 468.0,273.6 470.7,272.7 473.3,271.9 476.0,271.1 478.6,270.3 481.3,269.5 483.9,268.6 486.6,267.8 489.3,267.0 491.9,266.2 494.6,265.4 497.2,264.6 499.9,263.8 502.5,262.9 505.2,262.1 507.9,261.3 510.5,260.5 513.2,259.7 515.9,258.9 518.5,258.1 521.2,257.4 523.9,256.6 526.6,255.8 529.2,255.0 531.9,254.2 534.6,253.5 537.3,252.7 539.9,252.0 542.7,251.2 545.4,250.4 548.1,249.7 550.8,248.9 553.5,248.2 556.2,247.5 558.9,246.8 561.7,246.1 564.4,245.4 567.1,244.7 569.9,244.0 572.6,243.3 575.4,242.7 578.2,242.0 580.9,241.4 583.7,240.7 586.5,240.1 589.3,239.6 592.2,239.0 595.0,238.4 597.8,237.9 600.7,237.4 603.6,236.9 606.5,236.4 609.4,236.0 612.3,235.6 615.3,235.2 618.3,234.9 621.3,234.6 624.3,234.3 627.4,234.1 630.4,234.0 633.7,233.9 636.9,233.9 640.1,233.9 643.4,234.0 646.8,234.3 650.3,234.6 653.8,235.1 657.2,235.7 659.9,236.2 662.5,236.8 665.1,237.5 667.5,238.2 669.8,238.9 673.0,240.1 676.1,241.3 678.9,242.6 681.1,243.7 683.4,244.9 685.9,246.3 688.1,247.5 690.0,248.7 691.9,250.0 693.9,251.4 695.7,252.6 697.7,254.2 699.7,255.7 701.7,257.3 703.6,258.9 705.4,260.5 707.2,262.1 709.0,263.8 710.8,265.4 712.5,267.1 714.1,268.7 715.8,270.4 717.4,272.1 718.9,273.7 720.6,275.5 722.1,277.2 723.6,278.9 725.1,280.6 726.6,282.3 728.1,284.1 729.6,285.8 731.0,287.5 732.5,289.3 733.9,291.0 735.3,292.7 736.7,294.5 738.1,296.2 739.5,298.0 740.9,299.8 742.3,301.5 743.6,303.3 745.0,305.1 746.3,306.8 747.7,308.6 749.0,310.4 750.3,312.1 751.7,313.9 753.0,315.7 754.3,317.5 755.6,319.2 756.9,321.0 758.2,322.8 759.5,324.6 760.8,326.4 762.1,328.2 763.4,329.9 764.7,331.7 766.0,333.5 767.3,335.3 768.6,337.1 769.8,338.9 771.1,340.7 772.4,342.5 773.7,344.3 774.9,346.1 776.2,347.9 777.5,349.6 778.7,351.4 780.0,353.2 781.3,355.0 782.5,356.8 783.8,358.6 785.0,360.4 786.3,362.2 787.6,364.0 788.8,365.8 790.1,367.6 791.3,369.4 792.6,371.2 793.8,373.0 795.1,374.8 796.3,376.6 797.6,378.4 798.8,380.2 800.1,382.0 801.3,383.8 802.6,385.6 803.8,387.4 805.1,389.2 806.3,391.0 807.6,392.8 808.8,394.6 810.1,396.4 811.3,398.2 812.5,400.0 813.8,401.8 815.0,403.6 816.3,405.4 817.5,407.2 818.8,409.0 820.0,410.8 821.3,412.6 822.5,414.4 823.7,416.2 825.0,418.0 826.2,419.8 827.5,421.6 828.7,423.4 830.0,425.2 831.2,427.0 832.4,428.8 833.7,430.6 834.9,432.4 836.2,434.2 837.4,436.0 838.6,437.8 839.9,439.6 841.1,441.4 842.4,443.2 842.8,443.8" stroke="#10ffef"/><polyline points="728.0,480.6 726.8,478.8 725.5,477.0 724.3,475.2 723.1,473.4 721.8,471.6 720.6,469.8 719.3,468.0 718.1,466.2 716.8,464.4 715.6,462.6 714.3,460.8 713.1,459.0 711.8,457.2 710.6,455.4 709.3,453.6 708.1,451.8 706.8,450.0 705.6,448.2 704.3,446.4 703.1,444.6 701.8,442.8 700.5,441.0 699.3,439.2 698.0,437.4 696.7,435.6 695.5,433.8 694.2,432.1 692.9,430.3 691.7,428.5 690.4,426.7 689.1,424.9 687.8,423.1 686.6,421.3 685.3,419.5 684.0,417.7 682.7,415.9 681.4,414.2 680.1,412.4 678.8,410.6 677.5,408.8 676.1,407.0 674.8,405.3 673.5,403.5 672.2,401.7 670.8,399.9 669.5,398.2 668.1,396.4 666.7,394.7 665.4,392.9 664.0,391.1 662.6,389.4 661.2,387.6 659.7,385.9 658.3,384.2 656.8,382.4 655.3,380.7 653.8,379.0 652.3,377.3 650.8,375.6 649.2,373.9 647.6,372.2 646.0,370.5 644.3,368.8 642.6,367.2 640.9,365.5 639.1,363.9 637.3,362.3 635.4,360.7 633.4,359.1 631.4,357.6 629.2,356.1 627.0,354.6 624.7,353.1 622.7,352.0 620.5,350.8 617.8,349.5 614.9,348.2 611.8,347.0 609.5,346.3 607.1,345.6 604.5,344.9 601.8,344.3 598.9,343.8 595.6,343.4 592.0,343.1 588.6,342.9 585.3,342.8 582.1,342.9 579.0,343.0 575.9,343.2 572.9,343.5 569.9,343.8 566.9,344.1 564.0,344.5 561.1,345.0 558.2,345.5 555.6,345.9 552.5,346.5 549.8,347.1 546.8,347.7 544.0,348.3 541.3,348.9 538.5,349.5 535.7,350.2 533.0,350.9 530.2,351.6 527.5,352.3 524.8,353.0 522.0,353.7 519.3,354.4 516.6,355.1 513.9,355.9 511.2,356.6 508.5,357.4 505.8,358.2 503.2,358.9 500.5,359.7 497.8,360.5 495.1,361.3 492.4,362.1 489.8,362.9 487.1,363.7 484.4,364.5 481.8,365.3 479.1,366.1 476.5,366.9 473.8,367.7 471.1,368.5 468.5,369.3 465.8,370.1 463.2,370.9 460.5,371.8 457.9,372.6 455.2,373.4 452.6,374.2 449.9,375.1 447.3,375.9 444.6,376.7 442.0,377.5 439.3,378.4 436.7,379.2 434.1,380.0 431.4,380.9 428.8,381.7 426.1,382.5 423.5,383.4 420.9,384.2 418.2,385.0 415.6,385.9 412.9,386.7 410.3,387.6 407.7,388.4 405.0,389.2 402.4,390.1 399.7,390.9 397.1,391.8 394.5,392.6 391.8,393.4 389.2,394.3 386.6,395.1 384.8,395.7" stroke="#10ffef"/><polyline points="328.7,314.1 331.4,313.3 334.0,312.4 336.6,311.6 339.3,310.8 341.9,309.9 344.6,309.1 347.2,308.2 349.8,307.4 352.5,306.5 355.1,305.7 357.7,304.9 360.4,304.0 363.0,303.2 365.6,302.3 368.3,301.5 370.9,300.6 373.6,299.8 376.2,299.0 378.8,298.1 381.5,297.3 384.1,296.4 386.7,295.6 389.4,294.8 392.0,293.9 394.6,293.1 397.3,292.2 399.9,291.4 402.6,290.6 405.2,289.7 407.8,288.9 410.5,288.0 413.1,287.2 415.7,286.4 418.4,285.5 421.0,284.7 423.7,283.8 426.3,283.0 428.9,282.2 431.6,281.3 434.2,280.5 436.9,279.7 439.5,278.8 442.1,278.0 444.8,277.2 447.4,276.3 450.1,275.5 452.7,274.7 455.4,273.8 458.0,273.0 460.6,272.2 463.3,271.3 465.9,270.5 468.5,269.7 471.2,268.9 473.9,268.0 476.5,267.2 479.2,266.4 481.8,265.6 484.5,264.7 487.1,263.9 489.8,263.1 492.4,262.3 495.1,261.5 497.7,260.7 500.4,259.8 503.1,259.0 505.7,258.2 508.4,257.4 511.0,256.6 513.7,255.8 516.4,255.0 519.0,254.2 521.7,253.4 524.4,252.6 527.1,251.8 529.7,251.1 532.4,250.3 535.1,249.5 537.8,248.7 540.5,248.0 543.2,247.2 545.9,246.5 548.6,245.7 551.3,245.0 554.0,244.2 556.7,243.5 559.4,242.8 562.1,242.0 564.8,241.3 567.6,240.6 570.3,239.9 573.1,239.3 575.8,238.6 578.6,237.9 581.3,237.3 584.1,236.6 586.9,236.0 589.7,235.4 592.5,234.8 595.1,234.3 598.2,233.7 600.8,233.2 603.9,232.6 606.8,232.1 609.6,231.7 612.6,231.2 615.5,230.8 618.4,230.5 621.4,230.1 624.5,229.8 627.5,229.6 630.6,229.4 633.7,229.2 636.8,229.2 640.1,229.1 643.0,229.2 646.6,229.3 650.0,229.6 653.5,229.9 657.0,230.4 660.3,231.0 663.0,231.6 665.7,232.2 668.1,232.9 670.5,233.6 673.8,234.7 676.8,235.9 678.9,236.7 681.4,237.9 683.6,238.9 686.2,240.3 688.1,241.4 690.3,242.7 692.6,244.1 694.8,245.6 697.0,247.1 699.1,248.6 701.1,250.2 703.0,251.8 704.9,253.3 706.8,254.9 708.6,256.6 710.4,258.1 712.2,259.8 713.9,261.5 715.6,263.1 717.2,264.8 718.8,266.5 720.4,268.2 722.0,269.9 723.6,271.6 725.1,273.3 726.6,275.0 728.1,276.7 729.6,278.4 731.1,280.2 732.5,281.9 734.0,283.6 735.4,285.4 736.8,287.1 738.2,288.9 739.6,290.6 741.0,292.4 742.4,294.1 743.8,295.9 745.1,297.7 746.5,299.4 747.9,301.2 749.2,303.0 750.5,304.7 751.9,306.5 753.2,308.3 754.5,310.1 755.8,311.8 757.2,313.6 758.5,315.4 759.8,317.2 761.1,319.0 762.4,320.8 763.7,322.5 764.9,324.3 766.2,326.1 767.5,327.9 768.8,329.7 770.1,331.5 771.4,333.3 772.6,335.1 773.9,336.9 775.2,338.6 776.5,340.4 777.7,342.2 779.0,344.0 780.3,345.8 781.5,347.6 782.8,349.4 784.0,351.2 785.3,353.0 786.6,354.8 787.8,356.6 789.1,358.4 790.3,360.2 791.6,362.0 792.8,363.8 794.1,365.6 795.4,367.4 796.6,369.2 797.9,371.0 799.1,372.8 800.4,374.6 801.6,376.4 802.9,378.2 804.1,380.0 805.4,381.8 806.6,383.6 807.8,385.4 809.1,387.2 810.3,389.0 811.6,390.8 812.8,392.6 814.1,394.4 815.3,396.2 816.6,398.0 817.8,399.8 819.1,401.6 820.3,403.4 821.5,405.2 822.8,407.0 824.0,408.8 825.3,410.6 826.5,412.4 827.8,414.2 829.0,416.0 830.2,417.8 831.5,419.6 832.7,421.4 834.0,423.2 835.2,425.0 836.5,426.8 837.7,428.6 838.9,430.4 840.2,432.2 841.4,434.0 842.7,435.8 843.9,437.6 845.1,439.4 846.4,441.2 847.2,442.4" stroke="#8fff70"/><polyline points="709.8,486.4 708.6,484.6 707.3,482.8 706.1,481.0 704.8,479.2 703.6,477.4 702.3,475.6 701.1,473.9 699.8,472.1 698.6,470.3 697.3,468.5 696.1,466.7 694.8,464.9 693.5,463.1 692.3,461.3 691.0,459.5 689.8,457.7 688.5,455.9 687.2,454.1 686.0,452.3 684.7,450.5 683.4,448.7 682.1,446.9 680.9,445.1 679.6,443.3 678.3,441.5 677.0,439.8 675.7,438.0 674.4,436.2 673.1,434.4 671.8,432.6 670.5,430.8 669.2,429.1 667.9,427.3 666.6,425.5 665.3,423.7 663.9,422.0 662.6,420.2 661.2,418.4 659.9,416.6 658.5,414.9 657.1,413.1 655.8,411.4 654.4,409.6 653.0,407.9 651.5,406.1 650.1,404.4 648.7,402.6 647.2,400.9 645.7,399.2 644.2,397.5 642.7,395.8 641.1,394.1 639.5,392.4 637.9,390.7 636.3,389.0 634.6,387.3 632.9,385.7 631.2,384.0 629.4,382.4 627.5,380.8 625.6,379.2 623.6,377.7 621.6,376.1 619.4,374.6 617.2,373.1 614.9,371.7 612.4,370.3 609.8,368.9 607.0,367.6 604.0,366.4 600.7,365.2 598.4,364.5 595.9,363.8 593.3,363.2 590.4,362.6 587.3,362.2 584.5,361.9 581.1,361.6 578.1,361.5 574.5,361.4 571.3,361.5 568.5,361.6 565.6,361.8 562.5,362.1 559.1,362.4 556.2,362.8 553.2,363.2 550.3,363.6 547.4,364.1 544.6,364.6 541.7,365.2 538.9,365.7 536.1,366.3 533.3,366.9 530.5,367.6 527.7,368.2 525.0,368.9 522.2,369.5 519.5,370.2 516.8,370.9 514.0,371.6 511.3,372.3 508.6,373.1 505.9,373.8 503.2,374.6 500.5,375.3 497.8,376.1 495.1,376.8 492.4,377.6 489.7,378.4 487.0,379.1 484.4,379.9 481.7,380.7 479.0,381.5 476.3,382.3 473.7,383.1 471.0,383.9 468.4,384.7 465.7,385.5 463.0,386.3 460.4,387.1 457.7,387.9 455.1,388.8 452.4,389.6 449.8,390.4 447.1,391.2 444.5,392.0 441.8,392.9 439.2,393.7 436.5,394.5 433.9,395.3 431.2,396.2 428.6,397.0 425.9,397.8 423.3,398.7 420.6,399.5 418.0,400.3 415.4,401.2 412.7,402.0 410.1,402.8 407.4,403.7 405.1,404.4 402.2,405.3 399.5,406.2 396.9,407.0 394.2,407.9 393.4,408.1" stroke="#8fff70"/><polyline points="327.0,311.6 329.6,310.7 332.2,309.9 334.9,309.0 337.5,308.2 340.1,307.3 342.8,306.5 345.4,305.7 348.1,304.8 350.7,304.0 353.3,303.1 356.0,302.3 358.6,301.4 361.2,300.6 363.9,299.8 366.5,298.9 369.1,298.1 371.8,297.2 374.4,296.4 377.1,295.5 379.7,294.7 382.3,293.9 385.0,293.0 387.6,292.2 390.2,291.3 392.9,290.5 395.5,289.7 398.1,288.8 400.8,288.0 403.4,287.1 406.1,286.3 408.7,285.5 411.3,284.6 414.0,283.8 416.6,282.9 419.3,282.1 421.9,281.3 424.5,280.4 427.2,279.6 429.8,278.8 432.4,277.9 435.1,277.1 437.7,276.2 440.4,275.4 443.0,274.6 445.7,273.7 448.3,272.9 450.9,272.1 453.6,271.2 456.2,270.4 458.9,269.6 461.5,268.7 464.2,267.9 466.8,267.1 469.4,266.3 472.1,265.4 474.7,264.6 477.4,263.8 480.0,262.9 482.7,262.1 485.3,261.3 488.0,260.5 490.6,259.7 493.3,258.8 495.9,258.0 498.6,257.2 501.2,256.4 503.9,255.6 506.6,254.8 509.2,254.0 511.9,253.2 514.6,252.4 517.2,251.6 519.9,250.8 522.6,250.0 525.2,249.2 527.9,248.4 530.6,247.6 533.2,246.8 535.9,246.0 538.6,245.3 541.3,244.5 544.0,243.7 546.7,243.0 549.4,242.2 552.0,241.5 554.8,240.7 557.5,240.0 560.2,239.3 562.9,238.5 565.6,237.8 568.4,237.1 571.1,236.4 573.8,235.7 576.6,235.0 579.3,234.4 582.1,233.7 584.9,233.1 587.7,232.4 590.5,231.8 593.2,231.2 596.1,230.6 598.9,230.1 601.7,229.5 604.6,229.0 607.5,228.5 610.3,228.0 613.2,227.5 616.2,227.1 619.1,226.7 622.1,226.4 625.1,226.0 628.1,225.8 631.2,225.5 634.2,225.4 637.4,225.2 640.6,225.2 643.8,225.2 647.1,225.3 650.1,225.5 653.7,225.8 657.1,226.2 659.7,226.6 663.1,227.2 665.8,227.8 668.4,228.4 670.9,229.1 673.2,229.8 676.5,230.9 679.6,232.1 682.5,233.4 685.2,234.7 687.6,236.0 690.3,237.5 692.7,238.9 694.9,240.3 696.9,241.7 698.7,242.9 700.7,244.4 702.8,246.0 704.7,247.6 706.7,249.1 708.4,250.7 710.3,252.4 712.1,254.0 713.9,255.6 715.6,257.3 717.3,258.9 718.9,260.6 720.5,262.3 722.1,264.0 723.7,265.7 725.3,267.3 726.8,269.1 728.3,270.8 729.8,272.5 731.3,274.2 732.8,276.0 734.2,277.7 735.7,279.4 737.1,281.2 738.5,282.9 739.9,284.7 741.3,286.4 742.7,288.2 744.1,289.9 745.5,291.7 746.9,293.5 748.2,295.2 749.6,297.0 750.9,298.8 752.2,300.5 753.6,302.3 754.9,304.1 756.2,305.9 757.5,307.6 758.8,309.4 760.2,311.2 761.5,313.0 762.8,314.8 764.1,316.5 765.4,318.3 766.6,320.1 767.9,321.9 769.2,323.7 770.5,325.5 771.8,327.3 773.1,329.1 774.3,330.8 775.6,332.6 776.9,334.4 778.2,336.2 779.4,338.0 780.7,339.8 782.0,341.6 783.2,343.4 784.5,345.2 785.7,347.0 787.0,348.8 788.3,350.6 789.5,352.4 790.8,354.2 792.0,356.0 793.3,357.8 794.5,359.6 795.8,361.4 797.0,363.2 798.3,365.0 799.5,366.8 800.8,368.6 802.0,370.4 803.3,372.2 804.5,374.0 805.8,375.8 807.0,377.6 808.3,379.4 809.5,381.2 810.8,383.0 812.0,384.8 813.3,386.6 814.5,388.4 815.8,390.2 817.0,392.0 818.3,393.8 819.5,395.6 820.7,397.4 822.0,399.2 823.2,401.0 824.5,402.8 825.7,404.6 827.0,406.4 828.2,408.2 829.4,410.0 830.7,411.8 831.9,413.6 833.2,415.4 834.4,417.2 835.7,419.0 836.9,420.8 838.1,422.6 839.4,424.4 840.6,426.2 841.9,428.0 843.1,429.8 844.4,431.6 845.6,433.4 846.8,435.2 848.1,437.0 849.3,438.8 850.6,440.6 851.0,441.2" stroke="#ff0"/><polyline points="689.7,492.9 688.5,491.1 687.2,489.3 686.0,487.5 684.7,485.7 683.4,483.9 682.2,482.1 680.9,480.3 679.7,478.5 678.4,476.7 677.1,474.9 675.9,473.1 674.6,471.3 673.3,469.5 672.0,467.8 670.8,466.0 669.5,464.2 668.2,462.4 666.9,460.6 665.6,458.8 664.3,457.0 663.0,455.2 661.7,453.5 660.4,451.7 659.1,449.9 657.8,448.1 656.5,446.3 655.1,444.6 653.8,442.8 652.5,441.0 651.1,439.3 649.8,437.5 648.4,435.7 647.0,434.0 645.6,432.2 644.2,430.5 642.8,428.7 641.4,427.0 640.0,425.2 638.5,423.5 637.1,421.8 635.6,420.0 634.1,418.3 632.6,416.6 631.0,414.9 629.4,413.2 627.8,411.5 626.2,409.8 624.5,408.2 622.8,406.5 621.1,404.9 619.4,403.4 617.5,401.6 615.6,400.0 613.6,398.5 611.6,396.9 609.4,395.4 607.2,393.9 604.9,392.5 602.5,391.0 599.9,389.7 597.4,388.5 595.2,387.5 592.9,386.6 590.0,385.6 587.6,384.8 585.1,384.1 582.5,383.5 579.7,383.0 576.5,382.5 573.1,382.1 569.3,381.9 566.0,381.8 562.8,381.7 559.6,381.8 556.5,382.0 553.4,382.2 550.4,382.5 547.4,382.8 544.6,383.2 541.6,383.6 538.7,384.1 535.8,384.6 532.9,385.1 530.2,385.6 527.3,386.2 524.4,386.8 521.6,387.4 518.9,388.0 516.1,388.7 513.3,389.3 510.6,390.0 507.8,390.7 505.1,391.4 502.4,392.1 499.6,392.8 496.9,393.5 494.2,394.3 491.5,395.0 488.8,395.8 486.1,396.5 483.4,397.3 480.7,398.1 478.1,398.8 475.4,399.6 472.7,400.4 470.0,401.2 467.4,402.0 464.7,402.8 462.0,403.6 459.4,404.4 456.7,405.2 454.0,406.0 451.4,406.8 448.7,407.6 446.1,408.4 443.4,409.2 440.7,410.0 438.1,410.8 435.4,411.7 432.8,412.5 430.1,413.3 427.5,414.1 424.9,415.0 422.2,415.8 419.6,416.6 416.9,417.5 414.3,418.3 411.6,419.1 409.0,419.9 406.3,420.8 403.7,421.6 402.8,421.9" stroke="#ff0"/><polyline points="325.4,309.3 328.1,308.5 330.7,307.6 333.3,306.8 336.0,305.9 338.6,305.1 341.2,304.3 343.9,303.4 346.5,302.6 349.1,301.7 351.8,300.9 354.4,300.0 357.1,299.2 359.7,298.4 362.3,297.5 365.0,296.7 367.6,295.8 370.2,295.0 372.9,294.1 375.5,293.3 378.1,292.5 380.8,291.6 383.4,290.8 386.1,289.9 388.7,289.1 391.3,288.2 394.0,287.4 396.6,286.6 399.2,285.7 401.9,284.9 404.5,284.0 407.1,283.2 409.8,282.4 412.4,281.5 415.1,280.7 417.7,279.8 420.3,279.0 423.0,278.2 425.6,277.3 428.3,276.5 430.9,275.7 433.5,274.8 436.2,274.0 438.8,273.1 441.5,272.3 444.1,271.5 446.7,270.6 449.4,269.8 452.0,269.0 454.7,268.1 457.3,267.3 459.9,266.5 462.6,265.6 465.2,264.8 467.9,264.0 470.5,263.1 473.2,262.3 475.8,261.5 478.5,260.7 481.1,259.8 483.8,259.0 486.4,258.2 489.1,257.4 491.7,256.6 494.4,255.7 497.0,254.9 499.7,254.1 502.3,253.3 505.0,252.5 507.6,251.7 510.3,250.9 513.0,250.0 515.6,249.2 518.3,248.4 521.0,247.6 523.6,246.8 526.3,246.1 529.0,245.3 531.6,244.5 534.3,243.7 537.0,242.9 539.7,242.1 542.4,241.4 545.0,240.6 547.7,239.8 550.4,239.1 553.1,238.3 555.8,237.6 558.5,236.8 561.3,236.1 564.0,235.4 566.7,234.7 569.4,233.9 572.1,233.2 574.9,232.6 577.6,231.9 580.4,231.2 583.1,230.5 585.9,229.9 588.7,229.2 591.5,228.6 594.3,228.0 597.1,227.4 599.9,226.8 602.7,226.3 605.6,225.8 608.4,225.2 611.3,224.7 614.2,224.3 617.1,223.8 620.1,223.4 623.0,223.1 626.0,222.7 629.0,222.4 632.1,222.2 635.1,222.0 638.3,221.9 641.4,221.8 644.6,221.8 647.7,221.8 651.2,222.0 654.6,222.2 658.1,222.6 661.6,223.1 664.8,223.7 667.5,224.3 670.1,224.9 672.5,225.6 674.9,226.3 677.3,227.1 680.1,228.2 683.2,229.5 686.0,230.8 688.7,232.2 691.2,233.5 693.2,234.7 695.2,235.9 697.5,237.4 699.6,238.9 701.8,240.4 703.8,242.0 705.6,243.4 707.7,245.1 709.6,246.7 711.4,248.3 713.2,250.0 715.0,251.6 716.5,253.1 718.4,254.9 719.9,256.4 721.7,258.3 723.3,259.9 724.9,261.6 726.4,263.3 727.9,265.0 729.5,266.8 731.0,268.5 732.5,270.2 734.0,271.9 735.4,273.7 736.9,275.4 738.3,277.1 739.7,278.9 741.1,280.6 742.5,282.4 743.9,284.1 745.3,285.9 746.7,287.6 748.1,289.4 749.4,291.2 750.8,292.9 752.1,294.7 753.4,296.5 754.8,298.2 756.1,300.0 757.4,301.8 758.7,303.6 760.1,305.4 761.4,307.1 762.7,308.9 764.0,310.7 765.3,312.5 766.6,314.3 767.9,316.1 769.1,317.8 770.4,319.6 771.7,321.4 773.0,323.2 774.3,325.0 775.6,326.8 776.8,328.6 778.1,330.4 779.4,332.2 780.6,334.0 781.9,335.8 783.2,337.6 784.4,339.3 785.7,341.1 787.0,342.9 788.2,344.7 789.5,346.5 790.7,348.3 792.0,350.1 793.3,351.9 794.5,353.7 795.8,355.5 797.0,357.3 798.3,359.1 799.5,360.9 800.8,362.7 802.0,364.5 803.3,366.3 804.5,368.1 805.8,369.9 807.0,371.7 808.3,373.5 809.5,375.3 810.8,377.1 812.0,378.9 813.3,380.7 814.5,382.5 815.7,384.3 817.0,386.1 818.2,387.9 819.5,389.7 820.7,391.5 822.0,393.3 823.2,395.1 824.5,396.9 825.7,398.7 826.9,400.5 828.2,402.3 829.4,404.1 830.7,405.9 831.9,407.7 833.2,409.5 834.4,411.3 835.6,413.1 836.9,414.9 838.1,416.7 839.4,418.5 840.6,420.3 841.8,422.1 843.1,424.0 844.3,425.8 845.6,427.6 846.8,429.4 848.1,431.2 849.3,433.0 850.5,434.8 851.8,436.6 853.0,438.4 854.3,440.2" stroke="#ff8000"/><polyline points="666.4,500.4 665.1,498.6 663.8,496.8 662.5,495.0 661.3,493.2 660.0,491.4 658.7,489.6 657.4,487.8 656.2,486.0 654.9,484.3 653.6,482.5 652.3,480.7 651.0,478.9 649.7,477.1 648.4,475.3 647.1,473.6 645.7,471.8 644.4,470.0 643.1,468.2 641.8,466.5 640.4,464.7 639.1,462.9 637.8,461.2 636.4,459.4 635.0,457.6 633.6,455.9 632.2,454.1 630.8,452.4 629.4,450.6 627.9,448.9 626.5,447.1 625.0,445.4 623.5,443.7 622.0,442.0 620.5,440.3 619.0,438.6 617.4,436.9 615.8,435.2 614.2,433.5 612.5,431.8 610.8,430.2 609.0,428.5 607.3,426.9 605.4,425.3 603.5,423.7 601.6,422.1 599.5,420.6 597.4,419.1 595.2,417.6 592.9,416.1 591.0,415.0 588.8,413.8 586.1,412.4 583.3,411.1 580.2,409.9 577.1,408.8 574.5,408.1 572.0,407.4 569.3,406.8 566.3,406.3 563.3,405.9 559.8,405.5 556.5,405.3 553.2,405.2 550.0,405.2 546.8,405.3 543.8,405.4 540.8,405.7 537.6,406.0 534.6,406.3 531.7,406.7 528.8,407.1 525.9,407.6 523.0,408.0 520.1,408.6 517.3,409.1 514.7,409.6 511.6,410.3 508.8,410.9 506.1,411.5 503.3,412.1 500.5,412.8 497.8,413.5 495.0,414.2 492.3,414.9 489.6,415.6 486.8,416.3 484.1,417.0 481.4,417.7 478.7,418.5 476.0,419.2 473.3,420.0 470.6,420.8 467.9,421.5 465.3,422.3 462.6,423.1 459.9,423.9 457.2,424.6 454.6,425.4 451.9,426.2 449.2,427.0 446.5,427.8 443.9,428.6 441.2,429.4 438.6,430.2 435.9,431.0 433.3,431.9 430.6,432.7 427.9,433.5 425.3,434.3 422.6,435.1 420.0,436.0 417.3,436.8 414.7,437.6 413.8,437.9" stroke="#ff8000"/><polyline points="324.0,307.3 326.7,306.5 329.3,305.6 332.0,304.8 334.6,303.9 337.2,303.1 339.9,302.2 342.5,301.4 345.1,300.6 347.8,299.7 350.4,298.9 353.0,298.0 355.7,297.2 358.3,296.3 360.9,295.5 363.6,294.7 366.2,293.8 368.9,293.0 371.5,292.1 374.1,291.3 376.8,290.4 379.4,289.6 382.0,288.8 384.7,287.9 387.3,287.1 389.9,286.2 392.6,285.4 395.2,284.6 397.9,283.7 400.5,282.9 403.1,282.0 405.8,281.2 408.4,280.4 411.0,279.5 413.7,278.7 416.3,277.8 419.0,277.0 421.6,276.2 424.2,275.3 426.9,274.5 429.5,273.6 432.1,272.8 434.8,272.0 437.4,271.1 440.1,270.3 442.7,269.5 445.3,268.6 448.0,267.8 450.6,266.9 453.3,266.1 455.9,265.3 458.6,264.4 461.2,263.6 463.8,262.8 466.5,262.0 469.1,261.1 471.8,260.3 474.4,259.5 477.1,258.6 479.7,257.8 482.4,257.0 485.0,256.2 487.7,255.3 490.3,254.5 493.0,253.7 495.6,252.9 498.3,252.1 500.9,251.2 503.6,250.4 506.2,249.6 508.9,248.8 511.6,248.0 514.2,247.2 516.9,246.4 519.5,245.6 522.2,244.8 524.9,244.0 527.5,243.2 530.2,242.4 532.9,241.6 535.6,240.8 538.2,240.0 540.9,239.3 543.6,238.5 546.3,237.7 549.0,237.0 551.7,236.2 554.4,235.5 557.1,234.7 559.8,234.0 562.5,233.2 565.2,232.5 567.9,231.8 570.6,231.1 573.4,230.4 576.1,229.7 578.9,229.0 581.6,228.3 584.4,227.6 587.1,227.0 589.9,226.3 592.7,225.7 595.5,225.1 598.3,224.5 601.1,223.9 603.9,223.4 606.8,222.8 609.5,222.3 612.5,221.8 615.4,221.3 618.3,220.9 621.2,220.5 624.2,220.1 627.2,219.8 630.2,219.5 633.2,219.2 636.3,219.0 639.4,218.8 642.6,218.8 645.8,218.7 649.0,218.8 652.2,218.9 655.7,219.2 659.2,219.5 662.6,220.0 665.6,220.5 668.4,221.1 671.0,221.7 673.5,222.4 675.9,223.1 678.2,223.9 681.1,224.9 683.3,225.8 685.6,226.8 688.0,228.0 690.5,229.2 693.2,230.7 695.6,232.2 697.7,233.5 699.7,234.8 701.5,236.1 703.6,237.6 705.7,239.2 707.6,240.8 709.6,242.3 711.4,243.9 713.3,245.6 715.0,247.2 716.8,248.8 718.5,250.5 720.1,252.1 721.8,253.8 723.5,255.5 725.1,257.2 726.6,258.9 728.2,260.6 729.7,262.3 731.3,264.0 732.8,265.7 734.2,267.4 735.7,269.2 737.2,270.9 738.6,272.6 740.0,274.4 741.5,276.1 742.9,277.9 744.3,279.6 745.7,281.4 747.0,283.1 748.4,284.9 749.8,286.7 751.1,288.4 752.5,290.2 753.8,292.0 755.2,293.7 756.5,295.5 757.8,297.3 759.1,299.1 760.5,300.8 761.8,302.6 763.1,304.4 764.4,306.2 765.7,308.0 767.0,309.7 768.3,311.5 769.6,313.3 770.9,315.1 772.1,316.9 773.4,318.7 774.7,320.5 776.0,322.3 777.3,324.0 778.5,325.8 779.8,327.6 781.1,329.4 782.3,331.2 783.6,333.0 784.9,334.8 786.1,336.6 787.4,338.4 788.7,340.2 789.9,342.0 791.2,343.8 792.4,345.6 793.7,347.4 794.9,349.2 796.2,351.0 797.5,352.8 798.7,354.6 800.0,356.4 801.2,358.2 802.5,360.0 803.7,361.8 805.0,363.6 806.2,365.4 807.5,367.2 808.7,369.0 810.0,370.8 811.2,372.6 812.5,374.4 813.7,376.2 814.9,378.0 816.2,379.8 817.4,381.6 818.7,383.4 819.9,385.2 821.2,387.0 822.4,388.8 823.7,390.6 824.9,392.4 826.1,394.2 827.4,396.0 828.6,397.8 829.9,399.6 831.1,401.4 832.4,403.2 833.6,405.0 834.8,406.8 836.1,408.6 837.3,410.4 838.6,412.2 839.8,414.0 841.1,415.8 842.3,417.6 843.5,419.4 844.8,421.2 846.0,423.0 847.3,424.8 848.5,426.6 849.7,428.4 851.0,430.2 852.2,432.0 853.5,433.8 854.7,435.6 855.9,437.4 857.2,439.2" stroke="#ff1000"/><polyline points="637.3,509.7 636.0,507.9 634.7,506.1 633.4,504.3 632.1,502.5 630.8,500.8 629.5,499.0 628.1,497.2 626.8,495.4 625.5,493.7 624.1,491.9 622.8,490.1 621.4,488.4 620.0,486.6 618.6,484.9 617.2,483.1 615.8,481.4 614.4,479.6 613.0,477.9 611.5,476.1 610.1,474.4 608.6,472.7 607.1,471.0 605.5,469.3 604.0,467.6 602.4,465.9 600.8,464.2 599.2,462.5 597.5,460.8 595.8,459.2 594.1,457.5 592.4,456.0 590.5,454.3 588.6,452.7 586.6,451.1 584.6,449.6 582.8,448.3 580.7,446.9 578.8,445.6 576.4,444.1 573.9,442.7 571.8,441.7 569.4,440.5 567.2,439.6 564.3,438.5 561.5,437.5 558.8,436.8 556.2,436.1 553.7,435.6 550.1,435.0 546.8,434.5 543.2,434.2 539.8,434.1 536.5,434.0 533.4,434.0 530.2,434.2 527.1,434.4 524.1,434.6 521.1,434.9 518.1,435.3 515.2,435.7 512.3,436.1 509.4,436.6 506.5,437.1 503.6,437.6 500.8,438.1 498.0,438.7 495.5,439.3 492.4,439.9 489.6,440.6 486.8,441.2 484.1,441.9 481.3,442.6 478.6,443.2 475.9,443.9 473.1,444.7 470.4,445.4 467.7,446.1 465.0,446.8 462.3,447.6 459.6,448.3 456.9,449.1 454.2,449.9 451.5,450.6 448.8,451.4 446.1,452.2 443.5,453.0 440.8,453.7 438.1,454.5 435.5,455.3 432.8,456.1 430.1,456.9 427.5,457.7" stroke="#ff1000"/><polyline points="321.6,303.7 330.3,300.9 339.1,298.1 347.8,295.3 356.6,292.5 365.4,289.6 374.1,286.8 382.9,284.0 391.7,281.2 400.4,278.4 409.2,275.6 417.9,272.8 426.7,270.0 435.5,267.2 444.2,264.4 453.0,261.6 461.8,258.8 470.5,256.0 479.3,253.2 488.0,250.4 496.8,247.6 505.6,244.7 514.3,241.9 523.1,239.1 531.9,236.3 540.6,233.5 549.4,230.7 558.2,228.0 567.0,225.2 575.8,222.4 584.6,219.8 594.3,218.3 603.5,220.6 606.1,219.8 614.8,217.1 623.6,214.3 632.6,211.8 644.5,214.8 645.2,214.6 654.2,212.1 666.2,215.1 667.0,215.2 679.4,218.2 680.0,218.5 692.0,221.5 696.5,227.3 697.0,227.8 708.9,230.7 713.5,236.5 717.7,242.5 721.8,248.5 723.1,250.2 732.3,252.4 738.4,257.8 742.7,263.7 746.9,269.7 751.1,275.7 755.3,281.7 759.4,287.7 763.5,293.7 767.7,299.7 771.8,305.7 775.9,311.6 780.0,317.6 784.2,323.6 788.3,329.6 792.4,335.6 796.5,341.6 800.6,347.6 804.8,353.6 808.9,359.6 813.0,365.6 817.1,371.6 821.3,377.6 825.4,383.6 829.5,389.6 833.6,395.6 837.7,401.6 841.9,407.6 846.0,413.6 850.1,419.6 854.2,425.5 858.4,431.5 862.5,437.5" stroke="#8f0000"/><polyline points="595.8,523.0 590.8,517.3 586.0,511.5 581.3,505.7 576.7,499.8 572.2,494.0 566.4,488.5 566.0,488.2 556.9,484.2 550.8,478.9 548.0,477.6 539.5,475.2 534.9,474.1 526.0,472.2 522.7,471.9 513.1,473.4 502.4,472.4 501.8,472.5 492.2,474.2 483.3,476.7 474.3,479.2 465.3,481.6 456.2,483.9 447.0,486.2" stroke="#8f0000"/></g>
<g shape-rendering="crispEdges" fill-opacity="0.7">
<path d="M432.8 295.2 345.1 322.7 345.5 323.5 345.9 324.5 346.3 325.5 346.7 326.4 347.1 327.3 347.5 328.1 347.9 328.9 348.4 329.7 348.8 330.4 349.2 331 349.6 331.7 350 332.3 350.4 332.8 350.8 333.3 351.2 333.8 351.7 334.3 352.1 334.7 352.5 335 352.9 335.4 353.3 335.7 353.7 336 354.1 336.3 354.6 336.5 354.7 336.6 453.7 304.4 511.9 284.6 529.6 278.1 541.5 273.1 548.5 269.3 549.8 268 549.7 267.3 547.3 266.6 542.3 266.7 529.1 268.7 514.6 271.9 491.2 278 469.7 284.1zM706.7 306.1 706 306.6 705.6 307.7 705.8 309.5 707.2 313.6 712.1 323.2 719.2 335.4 729.7 352 745.5 376.1 792 444.8 792.3 444.9 793.2 444.9 794.1 445 795 445 795.9 445 796.7 445 797.6 444.9 798.5 444.8 799.4 444.7 800.2 444.5 801.1 444.3 802 444.1 802.9 443.8 803.8 443.5 804.6 443.2 805.5 442.8 806.4 442.4 807.3 441.9 808.1 441.4 809 440.8 809.9 440.2 810.8 439.6 811.7 438.9 812.3 438.3 770.3 378.4 752.5 354.1 741.2 339.4 729.4 325 721.2 316.2 712.9 308.9 709.2 306.6z" fill="#00008f"/>
<path d="M415.6 294.8 343.4 317.7 343.8 318.9 344.2 320.1 344.6 321.3 345 322.4 345.1 322.7 432.8 295.2 469.7 284.1 491.2 278 514.6 271.9 529.1 268.7 542.3 266.7 547.3 266.6 549.7 267.3 549.8 268 548.5 269.3 541.5 273.1 529.6 278.1 511.9 284.6 453.7 304.4 354.7 336.6 355 336.7 355.4 336.9 355.8 337.1 356.2 337.2 356.6 337.3 357 337.4 483.2 296.5 563.5 269.8 579 264.3 588.2 260.6 592.8 258 594.1 256.7 594.5 255.5 594.2 254.9 592.6 253.9 588.4 253.1 582.4 252.8 574.3 253.2 563.3 254.5 553.5 256.2 531.6 261 504.4 268.1 464.2 279.8zM681.7 276.5 680.8 276.9 680.2 277.5 679.8 278.8 680.1 280.9 681 283.5 684.6 290.5 691.6 301.9 728.6 357.8 787.1 443.9 787.9 444.1 788.8 444.3 789.7 444.5 790.6 444.6 791.5 444.7 792 444.8 745.5 376.1 729.7 352 719.2 335.4 712.1 323.2 707.2 313.6 705.8 309.5 705.6 307.7 706 306.6 706.7 306.1 709.2 306.6 712.9 308.9 721.2 316.2 729.4 325 741.2 339.4 752.5 354.1 770.3 378.4 812.3 438.3 812.5 438.1 813.4 437.3 814.3 436.5 815.2 435.5 816 434.6 782.6 386.6 759.3 353.8 740.3 328.4 725.1 309.7 719.2 303.1 711.8 295.4 705.8 289.8 698.6 284 692.7 280.1 687.8 277.6 683.8 276.5z" fill="#00009f"/>
<path d="M342.1 313.3 342.2 313.4 342.6 314.9 343 316.3 343.4 317.6 343.4 317.7 415.6 294.8 464.2 279.8 504.4 268.1 531.6 261 553.5 256.2 563.3 254.5 574.3 253.2 582.4 252.8 588.4 253.1 592.6 253.9 594.2 254.9 594.5 255.5 594.1 256.7 592.8 258 588.2 260.6 579 264.3 563.5 269.8 483.2 296.5 357 337.4 357.4 337.5 357.9 337.5 358.3 337.6 358.7 337.6 358.8 337.6 531.7 281.9 559.9 273.1 581.3 266.8 602.3 261.4 618.4 258.3 625.3 257.5 631.6 257.3 636 257.5 640.9 258.3 645.1 259.8 649.2 261.9 653.6 264.9 658.1 268.6 663.3 273.5 668.1 278.6 679 291.9 689.1 305.6 703 325.3 783.2 442.6 783.6 442.7 784.4 443 785.3 443.3 786.2 443.6 787.1 443.8 787.1 443.9 728.6 357.8 691.6 301.9 684.6 290.5 681 283.5 680.1 280.9 679.8 278.8 680.2 277.5 680.8 276.9 681.7 276.5 683.8 276.5 687.8 277.6 692.7 280.1 698.6 284 705.8 289.8 711.8 295.4 719.2 303.1 725.1 309.7 740.3 328.4 759.3 353.8 782.6 386.6 816 434.6 816.1 434.6 816.9 433.5 817.8 432.5 818.7 431.3 818.7 431.2 772.8 365.3 744.7 326.6 734.1 312.9 723.3 299.8 713.5 289 706.3 281.8 698.1 274.6 691.4 269.5 683.8 264.6 675.5 260.4 669.6 258 662.8 255.9 643.8 251.6 628.2 247.3 619.9 245.6 611.6 244.6 603.6 244.2 593.8 244.4 584.6 245.2 572.8 246.8 549.3 251.3 517.6 259.3 477.9 270.7 424 287.4z" fill="#0000af"/>
<path d="M435.2 279.4 341.1 309.2 341.3 310.3 341.7 311.9 342.1 313.3 424 287.4 477.9 270.7 517.6 259.3 549.3 251.3 572.8 246.8 584.6 245.2 593.8 244.4 603.6 244.2 611.6 244.6 619.9 245.6 628.2 247.3 643.8 251.6 662.8 255.9 669.6 258 675.5 260.4 683.8 264.6 691.4 269.5 698.1 274.6 706.3 281.8 713.5 289 723.3 299.8 734.1 312.9 744.7 326.6 772.8 365.3 818.7 431.2 819.6 430.1 820.4 428.8 821 428 777.2 365 750.7 328.1 738.7 312.1 729.4 300.5 714.1 282.8 706.9 275.5 698.3 267.7 691.3 262.1 683.3 256.7 674.6 251.9 666.8 248.4 658.2 245.2 647.6 242.2 636.7 239.9 627.2 238.6 618 237.8 606.8 237.8 595.6 238.4 584.9 239.6 571.1 241.9 558.8 244.3 530.5 251.2 489.3 262.9zM531.7 281.9 358.8 337.6 359.1 337.6 359.5 337.6 359.9 337.5 360.3 337.5 360.5 337.4 517.6 287 549.5 277.2 572.8 270.6 593.9 265.5 610.3 262.8 617.5 262.3 623.9 262.3 629.6 262.7 635.6 263.8 641 265.3 646.4 267.6 651.4 270.4 656.5 273.9 661.6 278.1 666.8 283.1 672.5 289.3 678.4 296.2 690.1 311.5 705.5 333 779.8 441.2 780 441.3 780.9 441.7 781.8 442.1 782.7 442.4 783.2 442.6 703 325.3 689.1 305.6 679 291.9 668.1 278.6 663.3 273.5 658.1 268.6 653.6 264.9 649.2 261.9 645.1 259.8 640.9 258.3 636 257.5 631.6 257.3 625.3 257.5 618.4 258.3 602.3 261.4 581.3 266.8 559.9 273.1z" fill="#0000bf"/>
<path d="M429.9 276.9 340.2 305.4 340.5 306.9 340.9 308.6 341.1 309.2 435.2 279.4 489.3 262.9 530.5 251.2 558.8 244.3 571.1 241.9 584.9 239.6 595.6 238.4 606.8 237.8 618 237.8 627.2 238.6 636.7 239.9 647.6 242.2 658.2 245.2 666.8 248.4 674.6 251.9 683.3 256.7 691.3 262.1 698.3 267.7 706.9 275.5 714.1 282.8 729.4 300.5 738.7 312.1 750.7 328.1 777.2 365 821 428 821.3 427.5 822.2 426.1 822.9 424.9 780.4 363.7 754 326.7 734.9 301.3 725.9 290.2 717 279.9 709.3 271.8 700.1 263.1 692.7 256.9 684.3 251 675.4 245.8 667.4 242.1 658.8 238.8 649.7 236.2 640 234.1 630.3 232.9 620.7 232.3 608.9 232.4 597 233.3 585.5 234.7 570.4 237.4 556.9 240.3 522.4 249.1 484.7 260zM549.5 277.2 517.6 287 360.5 337.4 360.7 337.4 361.2 337.3 361.6 337.2 361.9 337.1 512.2 289 545 279 569.2 272.2 590.5 267.3 599.1 265.8 607 264.9 614.2 264.4 621 264.4 627.5 265 633.7 266.2 639.5 268 645.1 270.4 650.4 273.3 655.5 276.9 660.6 281.1 665.9 286 671.7 292.2 677.6 299.1 690 314.9 705.9 337 776.6 439.7 777.4 440.1 778.3 440.5 779.2 440.9 779.8 441.2 705.5 333 690.1 311.5 678.4 296.2 672.5 289.3 666.8 283.1 661.6 278.1 656.5 273.9 651.4 270.4 646.4 267.6 641 265.3 635.6 263.8 629.6 262.7 623.9 262.3 617.5 262.3 610.3 262.8 593.9 265.5 572.8 270.6z" fill="#0000cf"/>
<path d="M430.9 272.7 339.4 301.7 339.7 303.2 340.1 305.1 340.2 305.4 429.9 276.9 484.7 260 522.4 249.1 556.9 240.3 570.4 237.4 585.5 234.7 597 233.3 608.9 232.4 620.7 232.3 630.3 232.9 640 234.1 649.7 236.2 658.8 238.8 667.4 242.1 675.4 245.8 684.3 251 692.7 256.9 700.1 263.1 709.3 271.8 717 279.9 725.9 290.2 734.9 301.3 754 326.7 780.4 363.7 822.9 424.9 823.1 424.6 824 423 824.6 421.8 781.3 359.4 754.5 321.8 735.4 296.4 726.5 285.3 717.4 274.8 709.4 266.3 700.2 257.5 692.7 251.3 684.3 245.4 677 241 668.9 237 660.1 233.6 650.7 230.9 641.4 229 631.5 227.8 621.5 227.3 611.9 227.4 599.8 228.4 588.3 229.9 573 232.6 559 235.6 524.4 244.5 485.7 255.8zM361.9 337.1 362 337.1 362.4 336.9 362.8 336.8 363.2 336.6 363.3 336.6 508.3 290.3 542.1 280.1 566.4 273.4 587.7 268.6 597.3 267 605.3 266.1 612.5 265.7 620.1 265.9 626 266.5 632.2 267.8 637.7 269.5 643 271.7 648.9 275 654 278.5 659.2 282.7 665.1 288.1 671 294.3 676.9 301.2 689.3 317 705.7 339.6 773.7 438.1 773.9 438.2 774.8 438.7 775.7 439.2 776.5 439.6 776.6 439.7 705.9 337 690 314.9 677.6 299.1 671.7 292.2 665.9 286 660.6 281.1 655.5 276.9 650.4 273.3 645.1 270.4 639.5 268 633.7 266.2 627.5 265 621 264.4 614.2 264.4 607 264.9 599.1 265.8 590.5 267.3 569.2 272.2 545 279 512.2 289z" fill="#0000df"/>
<path d="M434.5 267.7 338.6 298.2 338.9 299.2 339.3 301.2 339.4 301.7 430.9 272.7 485.7 255.8 524.4 244.5 559 235.6 573 232.6 588.3 229.9 599.8 228.4 611.9 227.4 621.5 227.3 631.5 227.8 641.4 229 650.7 230.9 660.1 233.6 668.9 237 677 241 684.3 245.4 692.7 251.3 700.2 257.5 709.4 266.3 717.4 274.8 726.5 285.3 735.4 296.4 754.5 321.8 781.3 359.4 824.6 421.8 824.8 421.4 825.7 419.7 826.2 418.8 781.6 354.6 755.3 317.6 735.7 291.6 726.8 280.5 718.4 270.7 710.3 262 701.4 253.4 693.3 246.6 686.8 241.9 679.3 237.1 670.9 232.8 662 229.1 652.5 226.3 643.3 224.4 633.4 223.2 623.4 222.7 613.6 222.9 601.4 223.9 589.7 225.4 573.9 228.3 559.6 231.4 526.9 239.9 488.5 251.1zM508.3 290.3 363.3 336.6 363.6 336.5 364.1 336.3 364.5 336.1 364.6 336 504.4 291.4 538.1 281.3 562.5 274.6 583.8 269.7 593.4 268.1 601.6 267.1 609.5 266.6 616.5 266.7 622.9 267.3 629.2 268.5 635.2 270.3 641.2 272.7 646.9 275.8 652.4 279.4 657.6 283.6 663.6 289 669.5 295.2 675.5 302.1 688.5 318.5 704.9 341.1 770.9 436.5 771.3 436.7 772.1 437.3 773 437.8 773.7 438.1 705.7 339.6 689.3 317 676.9 301.2 671 294.3 665.1 288.1 659.2 282.7 654 278.5 648.9 275 643 271.7 637.7 269.5 632.2 267.8 626 266.5 620.1 265.9 612.5 265.7 605.3 266.1 597.3 267 587.7 268.6 566.4 273.4 542.1 280.1z" fill="#0000ef"/>
<path d="M338 294.7 338 294.9 338.4 297.1 338.6 298.2 434.5 267.7 488.5 251.1 526.9 239.9 559.6 231.4 573.9 228.3 589.7 225.4 601.4 223.9 613.6 222.9 623.4 222.7 633.4 223.2 643.3 224.4 652.5 226.3 662 229.1 670.9 232.8 679.3 237.1 686.8 241.9 693.3 246.6 701.4 253.4 710.3 262 718.4 270.7 726.8 280.5 735.7 291.6 755.3 317.6 781.6 354.6 826.2 418.8 826.6 417.9 827.5 416.1 827.6 415.8 784.3 353.4 756.3 314 733.6 283.9 726 274.6 717.1 264.3 708.5 255.3 702.2 249.2 694.4 242.5 685.8 236.3 678.4 231.7 670.2 227.6 661.4 224.2 653 221.7 644.6 220 634.6 218.8 624.5 218.4 614.6 218.6 602.1 219.7 589.9 221.4 565.3 226.3 534.7 233.9 487.8 247.5 428.6 265.9zM504.4 291.4 364.6 336 364.9 335.9 365.3 335.6 365.7 335.4 365.9 335.3 502.2 291.9 536 281.8 561.2 274.9 582.6 270.1 592.2 268.6 600.2 267.7 607.4 267.3 615 267.4 621.9 268.1 628 269.3 633.9 271.1 639.9 273.6 645.9 276.8 651.1 280.3 656.4 284.4 662.3 289.9 668.3 296 674.3 302.9 687.3 319.2 703.8 341.8 768.2 434.9 768.6 435.1 769.5 435.7 770.4 436.2 770.9 436.5 704.9 341.1 688.5 318.5 675.5 302.1 669.5 295.2 663.6 289 657.6 283.6 652.4 279.4 646.9 275.8 641.2 272.7 635.2 270.3 629.2 268.5 622.9 267.3 616.5 266.7 609.5 266.6 601.6 267.1 593.4 268.1 583.8 269.7 562.5 274.6 538.1 281.3z" fill="#00f"/>
<path d="M435 260.3 337.4 291.3 337.6 292.7 338 294.7 428.6 265.9 487.8 247.5 534.7 233.9 565.3 226.3 589.9 221.4 602.1 219.7 614.6 218.6 624.5 218.4 634.6 218.8 644.6 220 653 221.7 661.4 224.2 670.2 227.6 678.4 231.7 685.8 236.3 694.4 242.5 702.2 249.2 708.5 255.3 717.1 264.3 726 274.6 733.6 283.9 756.3 314 784.3 353.4 827.6 415.8 828.3 414.1 828.9 412.9 783.5 347.5 756.4 309.3 736.4 282.7 727.5 271.6 718.4 261 710.3 252.3 701 243.4 693.5 237.1 687 232.4 679.5 227.7 671.2 223.5 662.4 220 654.3 217.6 645.4 215.8 635.3 214.6 625 214.2 614.8 214.6 605.5 215.4 593.8 216.9 578.3 219.7 564 222.8 528.1 232.1 490.7 243zM502.2 291.9 365.9 335.3 366.1 335.2 366.5 334.9 366.9 334.7 367.1 334.6 500.8 292.1 534.6 282 559.9 275.1 581.3 270.5 591 268.9 599 268.1 606.9 267.7 613.9 267.9 620.8 268.7 627.1 270 633 271.8 638.9 274.3 644.8 277.6 650 281 655.3 285.2 661.2 290.6 667.2 296.8 673.3 303.6 686.3 320 702.8 342.6 765.6 433.2 766 433.4 766.9 434 767.7 434.6 768.2 434.9 703.8 341.8 687.3 319.2 674.3 302.9 668.3 296 662.3 289.9 656.4 284.4 651.1 280.3 645.9 276.8 639.9 273.6 633.9 271.1 628 269.3 621.9 268.1 615 267.4 607.4 267.3 600.2 267.7 592.2 268.6 582.6 270.1 561.2 274.9 536 281.8z" fill="#0010ff"/>
<path d="M427.4 259.1 336.8 287.9 337.2 290.3 337.4 291.3 435 260.3 490.7 243 528.1 232.1 564 222.8 578.3 219.7 593.8 216.9 605.5 215.4 614.8 214.6 625 214.2 635.3 214.6 645.4 215.8 654.3 217.6 662.4 220 671.2 223.5 679.5 227.7 687 232.4 693.5 237.1 701 243.4 710.3 252.3 718.4 261 727.5 271.6 736.4 282.7 756.4 309.3 783.5 347.5 828.9 412.9 829.2 412.1 830.1 410 785.6 345.8 757.7 306.4 735 276.2 727.2 266.6 718.6 256.6 709.6 247 703 240.6 695.1 233.9 686.5 227.6 679.1 223.1 670.9 219 662.7 215.8 654.3 213.4 645.5 211.6 635.5 210.6 625 210.3 614.5 210.7 604.8 211.6 592.6 213.3 575.9 216.5 562.9 219.4 531.1 227.7 485.6 241zM500.8 292.1 367.1 334.6 367.4 334.4 367.8 334.2 368.2 333.9 368.3 333.8 499.4 292.2 532.3 282.4 557.6 275.5 579 270.8 588.7 269.3 596.7 268.4 603.9 268.1 611.5 268.2 618.3 268.9 624.6 270.1 630.1 271.7 636.3 274.1 642.4 277.3 647.7 280.7 653.1 284.9 659.1 290.3 665.1 296.3 671.3 303.2 684.5 319.5 701 342.1 723.3 373.8 763.1 431.5 763.4 431.7 764.2 432.3 765.1 432.9 765.6 433.2 702.8 342.6 686.3 320 673.3 303.6 667.2 296.8 661.2 290.6 655.3 285.2 650 281 644.8 277.6 638.9 274.3 633 271.8 627.1 270 620.8 268.7 613.9 267.9 606.9 267.7 599 268.1 591 268.9 581.3 270.5 559.9 275.1 534.6 282z" fill="#0020ff"/>
<path d="M336.3 284.7 336.4 285.4 336.8 287.9 427.4 259.1 485.6 241 531.1 227.7 562.9 219.4 575.9 216.5 592.6 213.3 604.8 211.6 614.5 210.7 625 210.3 635.5 210.6 645.5 211.6 654.3 213.4 662.7 215.8 670.9 219 679.1 223.1 686.5 227.6 695.1 233.9 703 240.6 709.6 247 718.6 256.6 727.2 266.6 735 276.2 757.7 306.4 785.6 345.8 830.1 410 831 407.8 831.2 407.1 786.8 342.9 757.5 301.7 737.6 275.1 728.8 264 720.4 254.1 712 245 704.8 237.9 697.1 231.2 688.2 224.4 680.6 219.7 672.3 215.4 663.5 211.9 655.4 209.5 645.9 207.7 637.3 206.7 627 206.4 616.7 206.7 603.6 208 590.5 210 579.2 212.1 564.3 215.5 532.3 223.8 493.1 235.3 430.3 254.7zM499.4 292.2 368.3 333.8 368.6 333.6 369 333.3 369.4 333 369.5 333 497.9 292.2 530.9 282.4 556.2 275.6 577.6 271 587.3 269.5 595.3 268.6 603.2 268.3 610.2 268.4 617.1 269.1 623.3 270.3 629.7 272.3 635.7 274.7 641.2 277.6 646.9 281.4 652.3 285.5 658.3 290.9 664.3 297.1 670.5 303.9 683.6 320.2 699.8 342.2 722.1 373.9 760.6 429.8 760.7 429.9 761.6 430.5 762.5 431.1 763.1 431.5 723.3 373.8 701 342.1 684.5 319.5 671.3 303.2 665.1 296.3 659.1 290.3 653.1 284.9 647.7 280.7 642.4 277.3 636.3 274.1 630.1 271.7 624.6 270.1 618.3 268.9 611.5 268.2 603.9 268.1 596.7 268.4 588.7 269.3 579 270.8 557.6 275.5 532.3 282.4z" fill="#0030ff"/>
<path d="M437.8 249 335.7 281.4 336 282.8 336.3 284.7 430.3 254.7 493.1 235.3 532.3 223.8 564.3 215.5 579.2 212.1 590.5 210 603.6 208 616.7 206.7 627 206.4 637.3 206.7 645.9 207.7 655.4 209.5 663.5 211.9 672.3 215.4 680.6 219.7 688.2 224.4 697.1 231.2 704.8 237.9 712 245 720.4 254.1 728.8 264 737.6 275.1 757.5 301.7 786.8 342.9 831.2 407.1 831.9 405.5 832.3 404.3 784.9 335.9 757.4 297 737.4 270.4 728.5 259.3 719.5 248.8 711.4 240.1 702.1 231.2 694.4 224.8 688 220.1 680.5 215.4 672.3 211.3 664.2 208.1 655.8 205.6 647.3 204 638.9 203 628.6 202.6 618.5 202.9 609.2 203.7 597.4 205.3 581.9 208 567.5 211.2 531.8 220.5 493.4 231.7zM497.9 292.2 369.5 333 369.8 332.7 370.2 332.4 370.6 332.1 496.5 292.3 529.4 282.5 554.7 275.7 576.2 271.1 585.9 269.6 593.9 268.7 601.8 268.4 608.8 268.6 615.7 269.3 622.4 270.6 628.3 272.4 634.3 274.9 639.8 277.8 645.5 281.5 650.9 285.7 657 291.1 663 297.2 669.2 304 682.4 320.3 698.6 342.3 720.5 373.4 758.2 428 759 428.6 759.8 429.2 760.6 429.8 722.1 373.9 699.8 342.2 683.6 320.2 670.5 303.9 664.3 297.1 658.3 290.9 652.3 285.5 646.9 281.4 641.2 277.6 635.7 274.7 629.7 272.3 623.3 270.3 617.1 269.1 610.2 268.4 603.2 268.3 595.3 268.6 587.3 269.5 577.6 271 556.2 275.6 530.9 282.4z" fill="#0040ff"/>
<path d="M436.4 246 335.3 278.2 335.5 280.1 335.7 281.4 437.8 249 493.4 231.7 531.8 220.5 567.5 211.2 581.9 208 597.4 205.3 609.2 203.7 618.5 202.9 628.6 202.6 638.9 203 647.3 204 655.8 205.6 664.2 208.1 672.3 211.3 680.5 215.4 688 220.1 694.4 224.8 702.1 231.2 711.4 240.1 719.5 248.8 728.5 259.3 737.4 270.4 757.4 297 784.9 335.9 832.3 404.3 832.7 403.1 833.3 401.5 786.4 333.6 758.4 294.2 737.6 266.3 729.2 255.9 719.8 244.9 711.1 235.6 704.6 229.3 696.7 222.4 688 216 680.5 211.4 672.4 207.3 665 204.4 656.9 202 648.5 200.3 640.1 199.3 630.1 198.9 620.1 199.2 607.3 200.3 594.9 202.1 569.5 207.3 534.9 216.2 493.8 228.2zM370.6 332.1 370.7 332.1 371.1 331.8 371.5 331.5 371.7 331.3 495.9 292 528.8 282.2 554.2 275.5 575.7 271 584.5 269.6 592.8 268.8 600.7 268.5 607.3 268.6 614.3 269.4 621.1 270.7 627.2 272.6 633 275 639 278.2 644.3 281.6 649.6 285.8 655.7 291.2 661.8 297.3 667.9 304.1 681.1 320.4 697.4 342.3 719.3 373.4 755.8 426.3 756.3 426.7 757.2 427.3 758.1 428 758.2 428 720.5 373.4 698.6 342.3 682.4 320.3 669.2 304 663 297.2 657 291.1 650.9 285.7 645.5 281.5 639.8 277.8 634.3 274.9 628.3 272.4 622.4 270.6 615.7 269.3 608.8 268.6 601.8 268.4 593.9 268.7 585.9 269.6 576.2 271.1 554.7 275.7 529.4 282.5 496.5 292.3z" fill="#0050ff"/>
<path d="M430.7 244.5 334.8 275 335.1 277.3 335.3 278.2 436.4 246 493.8 228.2 534.9 216.2 569.5 207.3 594.9 202.1 607.3 200.3 620.1 199.2 630.1 198.9 640.1 199.3 648.5 200.3 656.9 202 665 204.4 672.4 207.3 680.5 211.4 688 216 696.7 222.4 704.6 229.3 711.1 235.6 719.8 244.9 729.2 255.9 737.6 266.3 758.4 294.2 786.4 333.6 833.3 401.5 833.6 400.6 834.3 398.6 787.8 331.4 759.9 292 737.3 261.8 721 242.1 712.6 233 704.6 225.2 696.7 218.4 690.1 213.4 682.4 208.5 674.1 204.2 665.2 200.6 657.2 198.3 648 196.5 639.4 195.6 628.9 195.3 618.5 195.7 608.7 196.6 596.2 198.4 579.3 201.7 565.2 204.9 534.4 213 488 226.6zM371.7 331.3 371.9 331.1 372.3 330.8 372.7 330.5 372.9 330.4 494.3 292 527.3 282.2 552.1 275.7 573.3 271.1 583 269.7 591 268.8 598.3 268.5 605.9 268.7 612.8 269.4 619 270.6 624.6 272.2 630.8 274.6 636.7 277.7 642.4 281.3 648.4 285.8 653.9 290.7 660.1 296.8 666.3 303.6 679.1 319.3 695.4 341.2 716.9 371.7 753.4 424.5 753.7 424.8 754.6 425.4 755.4 426.1 755.8 426.3 719.3 373.4 697.4 342.3 681.1 320.4 667.9 304.1 661.8 297.3 655.7 291.2 649.6 285.8 644.3 281.6 639 278.2 633 275 627.2 272.6 621.1 270.7 614.3 269.4 607.3 268.6 600.7 268.5 592.8 268.8 584.5 269.6 575.7 271 554.2 275.5 528.8 282.2 495.9 292z" fill="#0060ff"/>
<path d="M428.5 241.9 334.4 271.9 334.7 274.4 334.8 275 430.7 244.5 488 226.6 534.4 213 565.2 204.9 579.3 201.7 596.2 198.4 608.7 196.6 618.5 195.7 628.9 195.3 639.4 195.6 648 196.5 657.2 198.3 665.2 200.6 674.1 204.2 682.4 208.5 690.1 213.4 696.7 218.4 704.6 225.2 712.6 233 721 242.1 737.3 261.8 759.9 292 787.8 331.4 834.3 398.6 834.5 398.1 835.2 395.8 789.1 329.2 760.8 289.1 738.3 258.9 729.4 247.8 721.5 238.7 713.7 230.2 704.7 221.3 696.9 214.6 690.3 209.6 682.6 204.8 674.3 200.5 666.9 197.4 657.5 194.6 648.9 193 640.4 192.1 630 191.7 619.5 192.1 606.1 193.5 592.7 195.6 580.7 198 564.7 201.6 531.2 210.6 486.7 223.7zM372.9 330.4 373.1 330.1 373.6 329.8 374 329.5 494.6 291.4 527.6 281.7 552.1 275.2 572.7 270.9 582.5 269.5 590.5 268.7 597.8 268.5 605.5 268.7 612.5 269.5 618.7 270.8 624.6 272.6 630.6 275.1 636.6 278.3 641.9 281.8 647.4 286 653.3 291.3 659.4 297.4 665.6 304.2 678.4 319.9 694.7 341.9 716.2 372.3 751.1 422.8 751.9 423.4 752.8 424.1 753.4 424.5 716.9 371.7 695.4 341.2 679.1 319.3 666.3 303.6 660.1 296.8 653.9 290.7 648.4 285.8 642.4 281.3 636.7 277.7 630.8 274.6 624.6 272.2 619 270.6 612.8 269.4 605.9 268.7 598.3 268.5 591 268.8 583 269.7 573.3 271.1 552.1 275.7 527.3 282.2 494.3 292z" fill="#0070ff"/>
<path d="M428 238.8 334 268.8 334.3 271.4 334.4 271.9 428.5 241.9 486.7 223.7 531.2 210.6 564.7 201.6 580.7 198 592.7 195.6 606.1 193.5 619.5 192.1 630 191.7 640.4 192.1 648.9 193 657.5 194.6 666.9 197.4 674.3 200.5 682.6 204.8 690.3 209.6 696.9 214.6 704.7 221.3 713.7 230.2 721.5 238.7 729.4 247.8 738.3 258.9 760.8 289.1 789.1 329.2 835.2 395.8 835.4 395.4 836.1 393 790 326.4 761.7 286.3 739.7 256.7 729.6 244 722.6 235.8 714.8 227.3 705.3 217.9 697.2 210.9 690.5 206 682.9 201.1 674.6 196.8 666.6 193.6 658.2 191.2 649.7 189.5 641.1 188.5 630.8 188.2 620.4 188.6 607 190 593.5 192.1 581.6 194.4 565.6 198.1 531.7 207.1 487.1 220.3zM374 329.5 374.4 329.1 374.8 328.8 375.1 328.5 493.1 291.3 526.1 281.6 550.6 275.2 571.2 270.9 580.8 269.5 589 268.7 596.3 268.4 604 268.6 610.8 269.4 617.2 270.7 623.5 272.7 629.5 275.2 635.2 278.2 640.7 281.8 646.1 286 652.2 291.3 657.8 296.9 664 303.7 676.8 319.4 693.1 341.3 714.3 371.2 748.7 421 749.3 421.4 750.2 422.1 751.1 422.8 716.2 372.3 694.7 341.9 678.4 319.9 665.6 304.2 659.4 297.4 653.3 291.3 647.4 286 641.9 281.8 636.6 278.3 630.6 275.1 624.6 272.6 618.7 270.8 612.5 269.5 605.5 268.7 597.8 268.5 590.5 268.7 582.5 269.5 572.7 270.9 552.1 275.2 527.6 281.7 494.6 291.4z" fill="#0080ff"/>
<path d="M428.5 235.4 333.6 265.7 333.9 268.3 334 268.8 428 238.8 487.1 220.3 531.7 207.1 565.6 198.1 581.6 194.4 593.5 192.1 607 190 620.4 188.6 630.8 188.2 641.1 188.5 649.7 189.5 658.2 191.2 666.6 193.6 674.6 196.8 682.9 201.1 690.5 206 697.2 210.9 705.3 217.9 714.8 227.3 722.6 235.8 729.6 244 739.7 256.7 761.7 286.3 790 326.4 836.1 393 836.3 392.6 837 390.2 790.9 323.6 763 284.1 741.1 254.5 724.1 233.6 715.3 223.9 708.1 216.7 700 209.4 690.9 202.4 683.3 197.6 675 193.3 667.6 190.3 659.5 187.9 651.9 186.3 641.9 185.1 631.5 184.7 621.1 185.1 607.7 186.5 594.1 188.6 582.2 191 566.6 194.6 533 203.5 487.6 217zM375.1 328.5 375.2 328.4 375.6 328.1 376 327.7 376.1 327.6 448.3 304.7 492.4 291 524.5 281.5 549.1 275.1 569.7 270.8 579.4 269.4 587.4 268.6 594.9 268.3 602.4 268.6 609.4 269.3 615.6 270.6 621.4 272.3 627.5 274.8 633.5 277.9 638.9 281.4 644.4 285.5 650.5 290.8 656.1 296.4 662.4 303.2 675.3 318.8 691.2 340.1 712.4 370 746.4 419.2 746.7 419.4 747.5 420.1 748.4 420.8 748.7 421 714.3 371.2 693.1 341.3 676.8 319.4 664 303.7 657.8 296.9 652.2 291.3 646.1 286 640.7 281.8 635.2 278.2 629.5 275.2 623.5 272.7 617.2 270.7 610.8 269.4 604 268.6 596.3 268.4 589 268.7 580.8 269.5 571.2 270.9 550.6 275.2 526.1 281.6 493.1 291.3z" fill="#008fff"/>
<path d="M429.9 231.8 333.2 262.6 333.5 265.1 333.6 265.7 428.5 235.4 487.6 217 533 203.5 566.6 194.6 582.2 191 594.1 188.6 607.7 186.5 621.1 185.1 631.5 184.7 641.9 185.1 651.9 186.3 659.5 187.9 667.6 190.3 675 193.3 683.3 197.6 690.9 202.4 700 209.4 708.1 216.7 715.3 223.9 724.1 233.6 741.1 254.5 763 284.1 790.9 323.6 837 390.2 837.1 389.7 837.8 387.5 790.9 319.6 763 280.2 741 250.5 724 229.6 715.7 220.5 706.2 211.1 698 203.9 691.3 199 683.7 194.1 675.4 189.8 667.7 186.8 659.4 184.3 650.9 182.6 642.4 181.7 632 181.3 621.6 181.7 608.1 183.1 594.6 185.3 582.6 187.6 566.3 191.4 533.5 200.1 488.1 213.6zM448.3 304.7 376.1 327.6 376.4 327.4 376.9 327 377.2 326.7 447.6 304.3 490.9 290.9 523 281.5 547.5 275.1 568.1 270.8 577.9 269.3 585.9 268.5 593.2 268.2 600.8 268.4 607.4 269.1 614 270.4 620.4 272.3 626.4 274.8 631.7 277.5 637.4 281.1 643.3 285.5 648.8 290.3 654.5 295.9 660.9 302.7 673.7 318.3 689.7 339.6 710.5 368.9 744.1 417.5 744.9 418.1 745.8 418.8 746.4 419.2 712.4 370 691.2 340.1 675.3 318.8 662.4 303.2 656.1 296.4 650.5 290.8 644.4 285.5 638.9 281.4 633.5 277.9 627.5 274.8 621.4 272.3 615.6 270.6 609.4 269.3 602.4 268.6 594.9 268.3 587.4 268.6 579.4 269.4 569.7 270.8 549.1 275.1 524.5 281.5 492.4 291z" fill="#009fff"/>
<path d="M431.3 228.2 332.8 259.5 333.1 261.8 333.2 262.6 429.9 231.8 488.1 213.6 533.5 200.1 566.3 191.4 582.6 187.6 594.6 185.3 608.1 183.1 621.6 181.7 632 181.3 642.4 181.7 650.9 182.6 659.4 184.3 667.7 186.8 675.4 189.8 683.7 194.1 691.3 199 698 203.9 706.2 211.1 715.7 220.5 724 229.6 741 250.5 763 280.2 790.9 319.6 837.8 387.5 838 386.7 838.6 384.7 790.4 315.1 762.5 275.6 740.1 245.4 723.9 225.7 716.2 217.1 706.4 207.5 698.5 200.6 691.8 195.6 684.2 190.7 675.9 186.4 668.2 183.4 659.9 180.9 651.4 179.2 642.9 178.3 632.5 177.9 622 178.4 608.5 179.8 594.7 182 582.6 184.4 566.6 188.1 534.9 196.5 488.6 210.3zM377.2 326.7 377.3 326.7 377.7 326.3 378.1 325.9 378.3 325.8 447.8 303.7 491.1 290.3 523.2 280.9 547.8 274.6 568.5 270.4 577.3 269.1 586.1 268.3 593.6 268.1 600.4 268.4 607.4 269.2 613.6 270.5 619.4 272.3 625.4 274.8 631.5 278 636.8 281.4 642.2 285.5 648.3 290.9 654 296.6 660.2 303.3 673.1 318.9 688.6 339.6 709.4 368.9 741.8 415.7 742.3 416.1 743.2 416.7 744 417.4 744.1 417.5 710.5 368.9 689.7 339.6 673.7 318.3 660.9 302.7 654.5 295.9 648.8 290.3 643.3 285.5 637.4 281.1 631.7 277.5 626.4 274.8 620.4 272.3 614 270.4 607.4 269.1 600.8 268.4 593.2 268.2 585.9 268.5 577.9 269.3 568.1 270.8 547.5 275.1 523 281.5 490.9 290.9 447.6 304.3z" fill="#00afff"/>
<path d="M436.2 223.5 332.4 256.5 332.7 258.4 332.8 259.5 431.3 228.2 488.6 210.3 534.9 196.5 566.6 188.1 582.6 184.4 594.7 182 608.5 179.8 622 178.4 632.5 177.9 642.9 178.3 651.4 179.2 659.9 180.9 668.2 183.4 675.9 186.4 684.2 190.7 691.8 195.6 698.5 200.6 706.4 207.5 716.2 217.1 723.9 225.7 740.1 245.4 762.5 275.6 790.4 315.1 838.6 384.7 838.9 383.6 839.3 382 790.4 311.1 762.5 271.7 740.7 242.4 732.8 232.4 723.8 221.7 714.9 212.1 707.1 204.3 699.1 197.4 692.4 192.4 684.7 187.4 676.4 183.1 668.6 180 660.3 177.5 651.8 175.9 643.3 174.9 632.8 174.6 622.3 175 612.4 176 599.8 177.8 582.8 181.1 569.9 184.1 538.4 192.4 493.6 205.6zM447.8 303.7 378.3 325.8 378.5 325.6 378.9 325.2 379.3 324.9 379.4 324.8 447.1 303.3 489.5 290.2 520.8 281.1 545.4 274.7 566 270.4 575.8 269 583.8 268.3 591.1 268 598.8 268.3 605.7 269.1 611.4 270.2 617.4 272 623.5 274.4 629.6 277.5 635 280.9 640.5 285.1 646.1 289.9 651.8 295.4 658.1 302.1 671.1 317.8 686.7 338.5 707.1 367.1 739.5 413.9 739.6 414 740.5 414.7 741.4 415.4 741.8 415.7 709.4 368.9 688.6 339.6 673.1 318.9 660.2 303.3 654 296.6 648.3 290.9 642.2 285.5 636.8 281.4 631.5 278 625.4 274.8 619.4 272.3 613.6 270.5 607.4 269.2 600.4 268.4 593.6 268.1 586.1 268.3 577.3 269.1 568.5 270.4 547.8 274.6 523.2 280.9 491.1 290.3z" fill="#00bfff"/>
<path d="M442.9 218.2 332.1 253.5 332.2 254.8 332.4 256.5 436.2 223.5 493.6 205.6 538.4 192.4 569.9 184.1 582.8 181.1 599.8 177.8 612.4 176 622.3 175 632.8 174.6 643.3 174.9 651.8 175.9 660.3 177.5 668.6 180 676.4 183.1 684.7 187.4 692.4 192.4 699.1 197.4 707.1 204.3 714.9 212.1 723.8 221.7 732.8 232.4 740.7 242.4 762.5 271.7 790.4 311.1 839.3 382 839.8 380.4 840.1 379.2 789.4 306 761.5 266.5 741.2 239.3 732.4 228.2 723.1 217.2 714.4 207.8 707.8 201.4 699.7 194.3 691.1 187.9 683.5 183.2 676.9 179.8 669 176.6 660.6 174.2 652.1 172.5 643.5 171.6 635.3 171.3 625.1 171.6 612.5 172.7 599.7 174.6 574 179.9 538.6 189.2 499.4 200.7zM447.1 303.3 379.4 324.8 379.8 324.5 380.2 324.2 380.5 323.9 446.5 302.9 488.9 289.8 520.1 280.7 544.7 274.4 565.4 270.2 574.2 268.9 582.4 268.2 590.1 267.9 597.2 268.1 604.2 268.9 610.5 270.2 616.4 271.9 622.5 274.4 628.2 277.3 633.9 280.9 639.5 285.1 645 289.9 650.7 295.4 657 302.2 670 317.8 685.6 338.5 706 367.2 737.2 412.2 737.9 412.7 738.8 413.4 739.5 413.9 707.1 367.1 686.7 338.5 671.1 317.8 658.1 302.1 651.8 295.4 646.1 289.9 640.5 285.1 635 280.9 629.6 277.5 623.5 274.4 617.4 272 611.4 270.2 605.7 269.1 598.8 268.3 591.1 268 583.8 268.3 575.8 269 566 270.4 545.4 274.7 520.8 281.1 489.5 290.2z" fill="#00cfff"/>
<path d="M331.8 250.5 331.8 251.2 332.1 253.5 442.9 218.2 499.4 200.7 538.6 189.2 574 179.9 599.7 174.6 612.5 172.7 625.1 171.6 635.3 171.3 643.5 171.6 652.1 172.5 660.6 174.2 669 176.6 676.9 179.8 683.5 183.2 691.1 187.9 699.7 194.3 707.8 201.4 714.4 207.8 723.1 217.2 732.4 228.2 741.2 239.3 761.5 266.5 789.4 306 840.1 379.2 840.6 377.1 840.8 376.5 792.2 306.2 761.8 263.2 741.5 235.9 732.7 224.8 723.9 214.4 715.3 205.1 708.6 198.5 700.5 191.3 693.6 186 685.9 181 677.5 176.6 670.1 173.6 661.9 171.1 652.3 169.2 643.9 168.3 635.5 168 625.4 168.3 612.4 169.5 599.4 171.5 588.1 173.6 573 177 540.1 185.6 499.9 197.4 434.6 217.7zM380.5 323.9 380.6 323.8 381 323.5 381.4 323.1 381.6 323 447.6 302 489.1 289.2 520.4 280.1 544.1 274.1 564.8 269.9 573.6 268.7 581.7 268 589.5 267.8 596.8 268.1 603.8 268.9 609.6 270.1 615.5 271.9 621.5 274.4 627.6 277.6 632.9 281 638.4 285.1 644 289.9 649.6 295.4 656 302.2 668.5 317.3 684.1 337.9 704.1 366 734.9 410.4 735.2 410.7 736.1 411.3 737 412 737.2 412.2 706 367.2 685.6 338.5 670 317.8 657 302.2 650.7 295.4 645 289.9 639.5 285.1 633.9 280.9 628.2 277.3 622.5 274.4 616.4 271.9 610.5 270.2 604.2 268.9 597.2 268.1 590.1 267.9 582.4 268.2 574.2 268.9 565.4 270.2 544.7 274.4 520.1 280.7 488.9 289.8 446.5 302.9z" fill="#00dfff"/>
<path d="M495.9 195.5 433.4 215 331.4 247.5 331.8 250.5 434.6 217.7 499.9 197.4 540.1 185.6 573 177 588.1 173.6 599.4 171.5 612.4 169.5 625.4 168.3 635.5 168 643.9 168.3 652.3 169.2 661.9 171.1 670.1 173.6 677.5 176.6 685.9 181 693.6 186 700.5 191.3 708.6 198.5 715.3 205.1 723.9 214.4 732.7 224.8 741.5 235.9 761.8 263.2 792.2 306.2 840.8 376.5 841.5 373.7 792.9 303.5 763.5 261.7 742.3 233.2 725.1 212.1 716.4 202.6 709.2 195.4 701.3 188.4 692.4 181.7 684.8 176.9 676.7 172.8 669.2 169.9 661.2 167.5 652.5 165.9 643.9 165 633.2 164.7 622.4 165.3 612.2 166.3 598.9 168.4 587.3 170.6 571.7 174.2 538.8 182.9zM447.6 302 381.6 323 381.8 322.7 382.2 322.4 382.6 322 382.7 322 446.9 301.7 488.5 288.9 519.8 279.8 543.5 273.8 564.2 269.7 573.1 268.5 581.2 267.8 588.6 267.6 595.2 267.9 602.2 268.8 608.4 270.1 614.5 271.9 619.7 274 625.8 277.1 631.2 280.5 636.7 284.6 642.3 289.4 648 294.9 654.4 301.7 667 316.7 682.6 337.4 702.6 365.4 732.6 408.6 732.6 408.7 733.5 409.3 734.4 410 734.9 410.4 704.1 366 684.1 337.9 668.5 317.3 656 302.2 649.6 295.4 644 289.9 638.4 285.1 632.9 281 627.6 277.6 621.5 274.4 615.5 271.9 609.6 270.1 603.8 268.9 596.8 268.1 589.5 267.8 581.7 268 573.6 268.7 564.8 269.9 544.1 274.1 520.4 280.1 489.1 289.2z" fill="#00efff"/>
<path d="M430.5 212.9 331.1 244.5 331.4 247.4 331.4 247.5 433.4 215 495.9 195.5 538.8 182.9 571.7 174.2 587.3 170.6 598.9 168.4 612.2 166.3 622.4 165.3 633.2 164.7 643.9 165 652.5 165.9 661.2 167.5 669.2 169.9 676.7 172.8 684.8 176.9 692.4 181.7 701.3 188.4 709.2 195.4 716.4 202.6 725.1 212.1 742.3 233.2 763.5 261.7 792.9 303.5 841.5 373.7 841.5 373.6 842.2 371 794.4 302 765.8 261.3 743.9 231.6 726.5 210.1 717.5 200.2 710.5 193.1 702.1 185.6 695.2 180.1 687.3 174.9 678.8 170.3 671.3 167.2 662.6 164.5 654.2 162.8 643.9 161.7 635.5 161.5 625.2 161.9 611.8 163.2 598.3 165.4 586.3 167.7 570.1 171.5 535.8 180.6 490.4 194.1zM446.9 301.7 382.7 322 383.1 321.7 383.5 321.4 383.8 321.1 447.1 301 487.8 288.5 518.2 279.7 541.9 273.7 562.7 269.6 571.5 268.4 579.6 267.7 587 267.5 594.2 267.8 600.6 268.6 606.8 269.9 612.5 271.5 618.6 274 624.6 277.1 630.1 280.5 635.6 284.6 641.2 289.4 652.8 301.1 665.4 316.2 680.6 336.2 700.2 363.7 730.2 406.9 730.9 407.3 731.7 408 732.6 408.6 702.6 365.4 682.6 337.4 667 316.7 654.4 301.7 648 294.9 642.3 289.4 636.7 284.6 631.2 280.5 625.8 277.1 619.7 274 614.5 271.9 608.4 270.1 602.2 268.8 595.2 267.9 588.6 267.6 581.2 267.8 573.1 268.5 564.2 269.7 543.5 273.8 519.8 279.8 488.5 288.9z" fill="#0ff"/>
<path d="M434.5 208.5 330.8 241.6 331 243.5 331.1 244.5 430.5 212.9 490.4 194.1 535.8 180.6 570.1 171.5 586.3 167.7 598.3 165.4 611.8 163.2 625.2 161.9 635.5 161.5 643.9 161.7 654.2 162.8 662.6 164.5 671.3 167.2 678.8 170.3 687.3 174.9 695.2 180.1 702.1 185.6 710.5 193.1 717.5 200.2 726.5 210.1 743.9 231.6 765.8 261.3 794.4 302 842.2 371 842.4 370 842.8 368.3 793 296.2 764.7 256.2 742.4 226 726.2 206.2 718.5 197.7 708.5 187.7 700.5 180.8 693.9 175.7 686.2 170.8 678.1 166.6 670.5 163.6 662.4 161.2 652.7 159.3 643.9 158.5 633 158.3 621.9 158.9 611.3 160.1 597.4 162.4 585.1 164.9 568.1 168.8 538.2 176.9 491 190.9zM447.1 301 383.8 321.1 383.9 321 384.3 320.7 384.7 320.3 384.9 320.2 446.5 300.7 486.3 288.4 516.7 279.7 540.4 273.7 561.2 269.5 570 268.3 577.8 267.6 585.4 267.4 592 267.7 599 268.4 605.2 269.7 610.5 271.2 616.6 273.5 622.9 276.7 628.3 280.1 633.9 284.1 639.6 288.9 645.3 294.4 651.2 300.6 663.8 315.6 679.1 335.7 698.7 363.1 727.9 405.1 728.2 405.3 729.1 406 730 406.7 730.2 406.9 700.2 363.7 680.6 336.2 665.4 316.2 652.8 301.1 641.2 289.4 635.6 284.6 630.1 280.5 624.6 277.1 618.6 274 612.5 271.5 606.8 269.9 600.6 268.6 594.2 267.8 587 267.5 579.6 267.7 571.5 268.4 562.7 269.6 541.9 273.7 518.2 279.7 487.8 288.5z" fill="#10ffef"/>
<path d="M330.5 238.6 330.6 239.5 330.8 241.6 434.5 208.5 491 190.9 538.2 176.9 568.1 168.8 585.1 164.9 597.4 162.4 611.3 160.1 621.9 158.9 633 158.3 643.9 158.5 652.7 159.3 662.4 161.2 670.5 163.6 678.1 166.6 686.2 170.8 693.9 175.7 700.5 180.8 708.5 187.7 718.5 197.7 726.2 206.2 742.4 226 764.7 256.2 793 296.2 842.8 368.3 843.3 366.3 843.5 365.6 794.1 294.1 763.3 250.5 742.5 222.6 733.7 211.5 724.9 201.2 716.3 191.8 709.6 185.2 701.5 178 694.5 172.8 687 167.9 678.6 163.5 671.1 160.5 662.8 158 654.3 156.3 644 155.3 635.3 155.1 624.6 155.5 614.6 156.6 601.7 158.5 590.5 160.6 575.5 164 541.4 172.9 502.2 184.4 435.1 205.3zM446.5 300.7 384.9 320.2 385.1 320 385.5 319.7 385.9 319.3 386 319.3 447.6 299.8 487.4 287.6 517 279.1 540.7 273.2 560.6 269.3 569.4 268.1 577.3 267.5 584.7 267.3 591.6 267.6 598.6 268.5 604.6 269.8 610.5 271.5 616.2 273.8 621.8 276.7 627.3 280.1 632.8 284.2 638.3 288.9 644.2 294.5 650 300.7 662.7 315.7 677.5 335.1 696.8 362 725.5 403.3 725.6 403.4 726.5 404 727.3 404.7 727.9 405.1 698.7 363.1 679.1 335.7 663.8 315.6 651.2 300.6 645.3 294.4 639.6 288.9 633.9 284.1 628.3 280.1 622.9 276.7 616.6 273.5 610.5 271.2 605.2 269.7 599 268.4 592 267.7 585.4 267.4 577.8 267.6 570 268.3 561.2 269.5 540.4 273.7 516.7 279.7 486.3 288.4z" fill="#20ffdf"/>
<path d="M495.5 183.4 433.1 202.9 330.2 235.7 330.5 238.6 435.1 205.3 502.2 184.4 541.4 172.9 575.5 164 590.5 160.6 601.7 158.5 614.6 156.6 624.6 155.5 635.3 155.1 644 155.3 654.3 156.3 662.8 158 671.1 160.5 678.6 163.5 687 167.9 694.5 172.8 701.5 178 709.6 185.2 716.3 191.8 724.9 201.2 733.7 211.5 742.5 222.6 763.3 250.5 794.1 294.1 843.5 365.6 844.1 362.9 795.1 292 765.7 250.3 744.1 221.1 734.8 209.4 726.4 199.3 717.6 189.6 710.6 182.7 702.5 175.4 693.5 168.6 686 163.9 679.3 160.5 671.9 157.4 662.8 154.7 654.3 153.1 645.7 152.2 635 151.9 624.2 152.4 614 153.5 600.7 155.6 589 157.8 573.3 161.4 539.3 170.4zM447.6 299.8 386 319.3 386.4 319 386.8 318.7 387.1 318.4 446.9 299.5 485.9 287.6 515.4 279.1 538.3 273.3 558.1 269.4 566.9 268.2 575 267.5 582.3 267.2 590 267.5 596.7 268.3 602.4 269.4 608.7 271.3 614.5 273.6 619.9 276.3 625.4 279.6 631 283.7 636.7 288.5 642.5 294 648.4 300.1 661.1 315.1 676 334.6 695.2 361.4 723.2 401.6 723.8 402.1 724.7 402.7 725.5 403.3 696.8 362 677.5 335.1 662.7 315.7 650 300.7 644.2 294.5 638.3 288.9 632.8 284.2 627.3 280.1 621.8 276.7 616.2 273.8 610.5 271.5 604.6 269.8 598.6 268.5 591.6 267.6 584.7 267.3 577.3 267.5 569.4 268.1 560.6 269.3 540.7 273.2 517 279.1 487.4 287.6z" fill="#30ffcf"/>
<path d="M433.7 199.7 329.9 232.8 330.2 235.3 330.2 235.7 433.1 202.9 495.5 183.4 539.3 170.4 573.3 161.4 589 157.8 600.7 155.6 614 153.5 624.2 152.4 635 151.9 645.7 152.2 654.3 153.1 662.8 154.7 671.9 157.4 679.3 160.5 686 163.9 693.5 168.6 702.5 175.4 710.6 182.7 717.6 189.6 726.4 199.3 734.8 209.4 744.1 221.1 765.7 250.3 795.1 292 844.1 362.9 844.2 362.5 844.7 360.2 795.7 289.3 767.5 249.2 745.2 219 728.2 197.9 719.1 187.7 712 180.5 703.5 172.8 696.5 167.4 688.6 162.1 680.3 157.6 672.6 154.4 664.1 151.8 655.8 150.1 647.4 149.1 637.1 148.7 626.7 149.1 613.2 150.5 599.6 152.7 587.4 155.1 570.8 159 538.1 167.7 491.9 181.5zM387.1 318.4 387.2 318.3 387.6 318 388 317.7 388.2 317.5 446.3 299.2 485.3 287.3 514.8 278.8 537.7 273.1 557.5 269.2 566.4 268 574.5 267.4 581.9 267.2 588.5 267.4 595.5 268.2 601.4 269.4 607.3 271.2 612.9 273.4 618.8 276.3 624.3 279.7 629.5 283.4 635 288 640.8 293.5 646.7 299.6 659 314 673.9 333.5 692.8 359.7 720.8 399.8 721.2 400.1 722.1 400.8 723 401.4 723.2 401.6 695.2 361.4 676 334.6 661.1 315.1 648.4 300.1 642.5 294 636.7 288.5 631 283.7 625.4 279.6 619.9 276.3 614.5 273.6 608.7 271.3 602.4 269.4 596.7 268.3 590 267.5 582.3 267.2 575 267.5 566.9 268.2 558.1 269.4 538.3 273.3 515.4 279.1 485.9 287.6 446.9 299.5z" fill="#40ffbf"/>
<path d="M441.7 194.2 329.7 229.9 329.8 231.1 329.9 232.8 433.7 199.7 491.9 181.5 538.1 167.7 570.8 159 587.4 155.1 599.6 152.7 613.2 150.5 626.7 149.1 637.1 148.7 647.4 149.1 655.8 150.1 664.1 151.8 672.6 154.4 680.3 157.6 688.6 162.1 696.5 167.4 703.5 172.8 712 180.5 719.1 187.7 728.2 197.9 745.2 219 767.5 249.2 795.7 289.3 844.7 360.2 845 358.6 845.3 357.5 793.4 282.4 765.5 242.9 745.4 215.7 736.6 204.5 727 193 717.1 182.2 710.1 175.3 702.1 168.3 695.3 163.1 687.6 158.2 679.4 153.9 671.9 150.9 664.1 148.6 655.7 146.9 647 145.9 636.8 145.6 626.2 146 616.3 147 603.4 148.9 592.3 151 577.6 154.3 541.4 163.8 502.2 175.3zM446.3 299.2 388.2 317.5 388.4 317.4 388.8 317.1 389.3 316.8 389.3 316.7 446.6 298.6 484.7 287 514.2 278.6 536.9 272.9 556 269.2 564.9 268 573 267.3 580.2 267.1 586.9 267.4 593.9 268.2 600.1 269.4 606.3 271.2 612.4 273.7 617.8 276.4 623.2 279.7 628.8 283.8 633.8 288.1 639.6 293.5 645.6 299.7 657.9 314.1 672.8 333.5 691.2 359.1 718.4 398.1 718.6 398.2 719.4 398.9 720.3 399.5 720.8 399.8 692.8 359.7 673.9 333.5 659 314 646.7 299.6 640.8 293.5 635 288 629.5 283.4 624.3 279.7 618.8 276.3 612.9 273.4 607.3 271.2 601.4 269.4 595.5 268.2 588.5 267.4 581.9 267.2 574.5 267.4 566.4 268 557.5 269.2 537.7 273.1 514.8 278.8 485.3 287.3z" fill="#50ffaf"/>
<path d="M497.8 173.7 434 193.6 329.4 227 329.7 229.9 441.7 194.2 502.2 175.3 541.4 163.8 577.6 154.3 592.3 151 603.4 148.9 616.3 147 626.2 146 636.8 145.6 647 145.9 655.7 146.9 664.1 148.6 671.9 150.9 679.4 153.9 687.6 158.2 695.3 163.1 702.1 168.3 710.1 175.3 717.1 182.2 727 193 736.6 204.5 745.4 215.7 765.5 242.9 793.4 282.4 845.3 357.5 845.9 354.8 796.1 282.7 766 240 744.6 211.2 735.4 199.5 727 189.5 718.3 180 711.4 173.1 703.2 165.8 696.3 160.5 688.5 155.4 680.1 150.9 672.4 147.8 664.1 145.3 655.5 143.7 647 142.8 636.4 142.5 625.6 143 615.4 144.1 602.2 146.1 590.5 148.4 574.9 151.9 541.1 160.9zM446.6 298.6 389.3 316.7 389.7 316.4 390.1 316.1 390.5 315.8 446.9 298.1 485 286.4 513.7 278.3 536.6 272.7 556.5 268.9 572.5 267.2 579.9 267.1 586.6 267.4 593.6 268.3 599.3 269.5 605.3 271.3 611.2 273.7 616.5 276.4 621.7 279.6 626.9 283.4 632.6 288.1 638.5 293.6 644.4 299.8 656.7 314.2 671.1 333 689.6 358.6 715.9 396.4 716.8 397 717.7 397.6 718.4 398.1 691.2 359.1 672.8 333.5 657.9 314.1 645.6 299.7 639.6 293.5 633.8 288.1 628.8 283.8 623.2 279.7 617.8 276.4 612.4 273.7 606.3 271.2 600.1 269.4 593.9 268.2 586.9 267.4 580.2 267.1 573 267.3 564.9 268 556 269.2 536.9 272.9 514.2 278.6 484.7 287z" fill="#60ff9f"/>
<path d="M434.6 190.4 329.1 224.1 329.3 226.6 329.4 227 434 193.6 497.8 173.7 541.1 160.9 574.9 151.9 590.5 148.4 602.2 146.1 615.4 144.1 625.6 143 636.4 142.5 647 142.8 655.5 143.7 664.1 145.3 672.4 147.8 680.1 150.9 688.5 155.4 696.3 160.5 703.2 165.8 711.4 173.1 718.3 180 727 189.5 735.4 199.5 744.6 211.2 766 240 796.1 282.7 845.9 354.8 845.9 354.5 846.4 352.1 796.6 280 768.4 239.9 746.1 209.7 729.1 188.5 719.9 178.3 712.8 171.1 704.3 163.4 697.3 157.9 689.4 152.6 682.3 148.7 673.4 145 665.3 142.4 655.4 140.5 646.7 139.6 635.9 139.4 625 140 614.4 141.1 600.7 143.3 588.5 145.8 571.9 149.6 540 158.2 492.8 172.2zM390.5 315.8 390.9 315.5 391.3 315.3 391.7 315 447.1 297.5 484.4 286.2 513.1 278.1 536 272.5 555 268.9 571 267.3 578.3 267.1 585.1 267.4 592.1 268.3 598.1 269.5 603.8 271.2 609.1 273.4 614.6 276.1 620.1 279.4 625.7 283.4 630.8 287.7 636.7 293.1 642.6 299.3 655 313.7 669.3 332.2 687.5 357.5 713.5 394.7 714.2 395.1 715 395.8 715.9 396.4 689.6 358.6 671.1 333 656.7 314.2 644.4 299.8 638.5 293.6 632.6 288.1 626.9 283.4 621.7 279.6 616.5 276.4 611.2 273.7 605.3 271.3 599.3 269.5 593.6 268.3 586.6 267.4 579.9 267.1 572.5 267.2 556.5 268.9 536.6 272.7 513.7 278.3 485 286.4 446.9 298.1z" fill="#70ff8f"/>
<path d="M328.9 221.2 328.9 222.1 329.1 224.1 434.6 190.4 492.8 172.2 540 158.2 571.9 149.6 588.5 145.8 600.7 143.3 614.4 141.1 625 140 635.9 139.4 646.7 139.6 655.4 140.5 665.3 142.4 673.4 145 682.3 148.7 689.4 152.6 697.3 157.9 704.3 163.4 712.8 171.1 719.9 178.3 729.1 188.5 746.1 209.7 768.4 239.9 796.6 280 846.4 352.1 846.8 350.2 847 349.4 796.8 276.7 766 233.1 746.2 206.4 738 195.8 727.9 183.7 718 172.9 711.1 166.1 703 158.9 696.2 153.8 688.5 148.8 680.4 144.6 672.8 141.5 665.1 139.2 656.7 137.5 648.2 136.6 637.8 136.3 627.2 136.7 617.2 137.7 604.3 139.6 593.1 141.8 577.8 145.2 542.4 154.5 503.2 166.1 435.2 187.3zM391.7 315 392.1 314.7 392.6 314.4 392.8 314.2 446.6 297.3 483.8 286 512.5 277.9 534.6 272.5 553.5 268.9 562.4 267.8 570 267.3 577.2 267.1 584.7 267.5 590.6 268.3 596.9 269.6 602.8 271.4 608.2 273.6 613.3 276.1 618.8 279.5 624.5 283.5 629.9 288.1 635.4 293.2 641.4 299.4 653.2 313.2 667.8 332 685.4 356.4 711 392.9 711.5 393.3 712.4 393.9 713.3 394.5 713.5 394.7 687.5 357.5 669.3 332.2 655 313.7 642.6 299.3 636.7 293.1 630.8 287.7 625.7 283.4 620.1 279.4 614.6 276.1 609.1 273.4 603.8 271.2 598.1 269.5 592.1 268.3 585.1 267.4 578.3 267.1 571 267.3 555 268.9 536 272.5 513.1 278.1 484.4 286.2 447.1 297.5z" fill="#80ff80"/>
<path d="M328.6 218.3 328.9 221.2 435.2 187.3 503.2 166.1 542.4 154.5 577.8 145.2 593.1 141.8 604.3 139.6 617.2 137.7 627.2 136.7 637.8 136.3 648.2 136.6 656.7 137.5 665.1 139.2 672.8 141.5 680.4 144.6 688.5 148.8 696.2 153.8 703 158.9 711.1 166.1 718 172.9 727.9 183.7 738 195.8 746.2 206.4 766 233.1 796.8 276.7 847 349.4 847.5 346.7 798.1 275.3 768.7 233.4 746.4 203.1 736.7 190.8 728.3 180.8 719.4 171 712.5 164.1 704.2 156.6 697.3 151.3 689.5 146.1 681.3 141.8 673.6 138.6 665.5 136.2 656.8 134.4 647.9 133.5 637.2 133.2 626.4 133.7 616.1 134.8 602.8 136.9 591 139.2 575.1 142.9 539.4 152.4 493.2 166.2zM392.8 314.2 393 314.1 393.4 313.8 393.8 313.6 394 313.4 447.8 296.5 484.1 285.5 512 277.7 534 272.4 553.1 268.9 561 267.9 569.1 267.3 576.6 267.2 583.3 267.6 589.1 268.3 595.4 269.6 600.8 271.2 606.7 273.6 612 276.2 617.5 279.6 623.2 283.6 628.3 287.9 639.6 298.9 651.5 312.7 665.6 330.9 683.3 355.3 708.4 391.2 708.9 391.6 709.8 392.1 710.7 392.7 711 392.9 685.4 356.4 667.8 332 653.2 313.2 641.4 299.4 635.4 293.2 629.9 288.1 624.5 283.5 618.8 279.5 613.3 276.1 608.2 273.6 602.8 271.4 596.9 269.6 590.6 268.3 584.7 267.5 577.2 267.1 570 267.3 562.4 267.8 553.5 268.9 534.6 272.5 512.5 277.9 483.8 286 446.6 297.3z" fill="#8fff70"/>
<path d="M437.4 180.7 328.4 215.4 328.5 217.4 328.6 218.3 493.2 166.2 539.4 152.4 575.1 142.9 591 139.2 602.8 136.9 616.1 134.8 626.4 133.7 637.2 133.2 647.9 133.5 656.8 134.4 665.5 136.2 673.6 138.6 681.3 141.8 689.5 146.1 697.3 151.3 704.2 156.6 712.5 164.1 719.4 171 728.3 180.8 736.7 190.8 746.4 203.1 768.7 233.4 798.1 275.3 847.5 346.7 847.7 345.9 848 344 796.2 269 767.9 228.9 745.1 198.1 729 178.3 720.9 169.2 710.9 159.2 702.9 152.3 696.3 147.3 688.6 142.4 680.4 138.1 673 135.2 664.9 132.9 656.2 131.2 647.5 130.3 636.6 130.1 625.6 130.8 615 132 601 134.2 588.6 136.7 571.7 140.7 542.8 148.5 493.8 163zM447.8 296.5 394 313.4 394.2 313.3 394.6 313 395 312.8 395.2 312.7 447.2 296.3 482.7 285.6 509.7 278 531.7 272.7 550.7 269.1 566.7 267.4 574.1 267.3 580.7 267.6 587.5 268.4 593.1 269.5 599.1 271.2 604.3 273.2 610.1 276 615.5 279.2 621.2 283.2 626.3 287.4 631.7 292.3 637.7 298.5 649.7 312.2 663.8 330.4 681.1 354.2 705.9 389.6 706.3 389.8 707.1 390.4 708 391 708.4 391.2 683.3 355.3 665.6 330.9 651.5 312.7 639.6 298.9 628.3 287.9 623.2 283.6 617.5 279.6 612 276.2 606.7 273.6 600.8 271.2 595.4 269.6 589.1 268.3 583.3 267.6 576.6 267.2 569.1 267.3 561 267.9 553.1 268.9 534 272.4 512 277.7 484.1 285.5z" fill="#9fff60"/>
<path d="M328.1 212.5 328.1 212.6 328.4 215.4 437.4 180.7 493.8 163 542.8 148.5 571.7 140.7 588.6 136.7 601 134.2 615 132 625.6 130.8 636.6 130.1 647.5 130.3 656.2 131.2 664.9 132.9 673 135.2 680.4 138.1 688.6 142.4 696.3 147.3 702.9 152.3 710.9 159.2 720.9 169.2 729 178.3 745.1 198.1 767.9 228.9 796.2 269 848 344 848.5 341.3 796.7 266.3 765.9 222.6 744.7 194.2 727.8 173.4 719.1 164 712.4 157.3 704.2 150 697.3 144.8 689.6 139.7 681.2 135.4 673.8 132.4 665.7 129.9 657.4 128.3 648.9 127.4 638.4 127.1 627.7 127.6 617.6 128.6 604.5 130.6 593 132.8 577.6 136.3 545.2 144.8 503.3 157.2 438 177.5zM447.2 296.3 395.2 312.7 395.4 312.5 395.9 312.3 396.3 312 396.4 311.9 446.7 296.2 482.2 285.5 509.2 277.9 531.2 272.6 549.7 269.2 565.3 267.6 572.7 267.4 579.3 267.7 586.1 268.5 591.7 269.6 597.8 271.4 603 273.4 608.7 276.1 614.1 279.3 619.8 283.4 625 287.6 635.8 298 647.8 311.8 661.6 329.4 678.9 353.1 703.3 387.9 703.6 388.1 704.5 388.7 705.4 389.2 705.9 389.6 681.1 354.2 663.8 330.4 649.7 312.2 637.7 298.5 631.7 292.3 626.3 287.4 621.2 283.2 615.5 279.2 610.1 276 604.3 273.2 599.1 271.2 593.1 269.5 587.5 268.4 580.7 267.6 574.1 267.3 566.7 267.4 550.7 269.1 531.7 272.7 509.7 278 482.7 285.6z" fill="#afff50"/>
<path d="M434.2 175.8 327.9 209.7 328.1 212.5 438 177.5 503.3 157.2 545.2 144.8 577.6 136.3 593 132.8 604.5 130.6 617.6 128.6 627.7 127.6 638.4 127.1 648.9 127.4 657.4 128.3 665.7 129.9 673.8 132.4 681.2 135.4 689.6 139.7 697.3 144.8 704.2 150 712.4 157.3 719.1 164 727.8 173.4 744.7 194.2 765.9 222.6 796.7 266.3 848.5 341.3 849.1 338.7 798.5 265.4 769.8 224.7 747.5 194.5 730.2 172.9 721 162.6 713.9 155.5 705.4 147.8 698.5 142.4 690.6 137.1 682.1 132.6 674.6 129.5 665.7 126.8 657.1 125.2 648.5 124.3 637.8 124 626.8 124.6 616.3 125.8 602.7 127.9 590.5 130.4 573.9 134.2 540.5 143.2 493.3 157.3zM446.7 296.2 396.4 311.9 396.7 311.8 397.1 311.6 397.5 311.3 397.7 311.2 447.9 295.5 482.6 285.1 509.6 277.6 530.7 272.5 548.8 269.2 556.8 268.3 564.9 267.7 572.4 267.6 579 267.9 584.9 268.7 591.2 270 596.6 271.6 602.5 273.9 607.9 276.6 613.4 280 618.4 283.5 624 288.1 634.9 298.7 646.4 311.9 660.2 329.5 677.1 352.7 700.6 386.2 701 386.4 701.9 387 702.8 387.5 703.3 387.9 678.9 353.1 661.6 329.4 647.8 311.8 635.8 298 625 287.6 619.8 283.4 614.1 279.3 608.7 276.1 603 273.4 597.8 271.4 591.7 269.6 586.1 268.5 579.3 267.7 572.7 267.4 565.3 267.6 549.7 269.2 531.2 272.6 509.2 277.9 482.2 285.5z" fill="#bfff40"/>
<path d="M327.6 206.9 327.7 207.6 327.9 209.7 434.2 175.8 493.3 157.3 540.5 143.2 573.9 134.2 590.5 130.4 602.7 127.9 616.3 125.8 626.8 124.6 637.8 124 648.5 124.3 657.1 125.2 665.7 126.8 674.6 129.5 682.1 132.6 690.6 137.1 698.5 142.4 705.4 147.8 713.9 155.5 721 162.6 730.2 172.9 747.5 194.5 769.8 224.7 798.5 265.4 849.1 338.7 849.4 336.7 849.6 336 798.1 261.5 766.9 217.3 746.3 189.4 737.5 178.3 728.3 167.3 719.1 157.3 712.4 150.7 704.3 143.6 697.5 138.4 689.8 133.4 682.9 129.8 674.1 126.2 666 123.8 656.8 122 648.1 121.2 639.4 121 628.9 121.4 618.9 122.4 605.9 124.4 594.7 126.5 579.2 130 544.7 139.1 505.5 150.6 437.5 171.8zM447.9 295.5 397.7 311.2 397.9 311.1 398.3 310.9 398.8 310.7 398.9 310.6 447.4 295.4 482.1 285 509.1 277.5 530.3 272.5 548.5 269.3 556.4 268.3 564.6 267.8 571 267.8 577.7 268.1 583.6 268.9 589.8 270.2 595.2 271.8 601 274.1 606.4 276.8 611.4 279.8 616.9 283.7 622.1 287.9 633 298.3 644.5 311.5 658.3 329.1 674.8 351.6 698 384.6 698.4 384.8 699.2 385.3 700.1 385.9 700.6 386.2 677.1 352.7 660.2 329.5 646.4 311.9 634.9 298.7 624 288.1 618.4 283.5 613.4 280 607.9 276.6 602.5 273.9 596.6 271.6 591.2 270 584.9 268.7 579 267.9 572.4 267.6 564.9 267.7 556.8 268.3 548.8 269.2 530.7 272.5 509.6 277.6 482.6 285.1z" fill="#cfff30"/>
<path d="M327.4 204 327.6 206.9 437.5 171.8 505.5 150.6 544.7 139.1 579.2 130 594.7 126.5 605.9 124.4 618.9 122.4 628.9 121.4 639.4 121 648.1 121.2 656.8 122 666 123.8 674.1 126.2 682.9 129.8 689.8 133.4 697.5 138.4 704.3 143.6 712.4 150.7 719.1 157.3 728.3 167.3 737.5 178.3 746.3 189.4 766.9 217.3 798.1 261.5 849.6 336 850 333.3 799.9 260.7 770.4 218.8 747.7 187.9 730 166 721 156 714 149 705.6 141.4 698.7 136.1 690.8 130.9 682.4 126.4 674.9 123.4 666.8 120.9 658.1 119.2 649.4 118.2 638.7 118 627.8 118.5 617.5 119.6 604 121.8 592.1 124.1 575.8 127.9 540.9 137.2 493.7 151.3zM447.4 295.4 398.9 310.6 399.2 310.5 399.6 310.2 400 310 400.2 309.9 447 295.3 480.7 285.2 506.9 278 528 272.9 546.1 269.6 561.4 268.1 568.6 268 575.2 268.3 581.5 269 587.3 270.2 593.2 271.9 598.5 273.9 604 276.5 609.6 279.8 614.7 283.3 619.9 287.5 630.9 297.9 642.5 311.1 655.9 328 672.5 350.6 695.2 382.9 695.7 383.2 696.6 383.7 697.5 384.3 698 384.6 674.8 351.6 658.3 329.1 644.5 311.5 633 298.3 622.1 287.9 616.9 283.7 611.4 279.8 606.4 276.8 601 274.1 595.2 271.8 589.8 270.2 583.6 268.9 577.7 268.1 571 267.8 564.6 267.8 556.4 268.3 548.5 269.3 530.3 272.5 509.1 277.5 482.1 285z" fill="#dfff20"/>
<path d="M440.4 165.1 327.2 201.2 327.3 202.4 327.4 204 493.7 151.3 540.9 137.2 575.8 127.9 592.1 124.1 604 121.8 617.5 119.6 627.8 118.5 638.7 118 649.4 118.2 658.1 119.2 666.8 120.9 674.9 123.4 682.4 126.4 690.8 130.9 698.7 136.1 705.6 141.4 714 149 721 156 730 166 747.7 187.9 770.4 218.8 799.9 260.7 850 333.3 850.3 331.9 850.5 330.7 797.1 253.3 768.8 213.1 747.9 184.8 739.2 173.8 729.8 162.6 721.1 152.9 712.5 144.3 704.5 137.3 697.7 132.2 690.1 127.3 681.8 123 674.4 120.1 666.3 117.7 657.5 116 648.8 115.2 637.9 115 626.7 115.6 616 116.9 601.9 119.2 589.2 121.8 571.5 126 542.2 133.9 495.3 147.9zM400.2 309.9 400.4 309.8 400.8 309.6 401.2 309.4 401.5 309.3 448.3 294.7 481.2 284.9 506.4 278 527.7 273 545.8 269.8 560.9 268.4 567.3 268.3 574 268.6 579.8 269.3 586 270.5 591.5 272.1 597.1 274.2 602.3 276.7 608 280 613.1 283.5 618.4 287.7 629.3 298.1 640.5 310.7 654 327.6 670.1 349.6 692.5 381.3 693.1 381.7 694 382.2 694.8 382.7 695.2 382.9 672.5 350.6 655.9 328 642.5 311.1 630.9 297.9 619.9 287.5 614.7 283.3 609.6 279.8 604 276.5 598.5 273.9 593.2 271.9 587.3 270.2 581.5 269 575.2 268.3 568.6 268 561.4 268.1 546.1 269.6 528 272.9 506.9 278 480.7 285.2 447 295.3z" fill="#efff10"/>
<path d="M327 198.3 327.2 201.2 440.4 165.1 495.3 147.9 542.2 133.9 571.5 126 589.2 121.8 601.9 119.2 616 116.9 626.7 115.6 637.9 115 648.8 115.2 657.5 116 666.3 117.7 674.4 120.1 681.8 123 690.1 127.3 697.7 132.2 704.5 137.3 712.5 144.3 721.1 152.9 729.8 162.6 739.2 173.8 747.9 184.8 768.8 213.1 797.1 253.3 850.5 330.7 851 328 800.4 254.8 770.5 212.3 747.8 181.4 730 159.4 721.1 149.6 714.2 142.7 705.8 135.2 698.9 129.9 691.2 124.7 684.3 121 675.4 117.3 667.2 114.8 658.5 113.1 648.2 112.1 639.5 112 628.7 112.5 618.5 113.6 605.1 115.7 593.3 118 577.3 121.6 540.4 131.5 494.2 145.3zM401.5 309.3 401.6 309.3 402.1 309.1 402.5 308.9 402.9 308.7 447.9 294.7 479.9 285.2 505.1 278.2 526.4 273.2 544.5 270.1 559.7 268.7 566.1 268.6 572.8 269 578.6 269.7 584.8 271 590.1 272.5 596 274.7 601.5 277.4 606.3 280.3 611.4 283.8 616.7 287.9 627.7 298.3 639.4 311.5 652.4 327.8 668.1 349.2 689.6 379.7 690.5 380.2 691.3 380.7 692.2 381.2 692.5 381.3 670.1 349.6 654 327.6 640.5 310.7 629.3 298.1 618.4 287.7 613.1 283.5 608 280 602.3 276.7 597.1 274.2 591.5 272.1 586 270.5 579.8 269.3 574 268.6 567.3 268.3 560.9 268.4 545.8 269.8 527.7 273 506.4 278 481.2 284.9 448.3 294.7z" fill="#ff0"/>
<path d="M440.1 159.4 326.7 195.5 326.9 197.1 327 198.3 494.2 145.3 540.4 131.5 577.3 121.6 593.3 118 605.1 115.7 618.5 113.6 628.7 112.5 639.5 112 648.2 112.1 658.5 113.1 667.2 114.8 675.4 117.3 684.3 121 691.2 124.7 698.9 129.9 705.8 135.2 714.2 142.7 721.1 149.6 730 159.4 747.8 181.4 770.5 212.3 800.4 254.8 851 328 851.2 326.9 851.4 325.4 797.9 247.9 769.7 207.8 747.7 177.9 730.9 157.2 723.2 148.6 712.8 138.1 704.7 131.1 698 126.1 690.4 121.2 682.3 117 674.8 114 666.8 111.7 658.1 110 647.8 109.1 638.7 109 627.6 109.6 616.9 110.8 602.9 113.1 590.3 115.7 572.8 119.8 543.7 127.7 495.7 142zM402.9 308.7 403.3 308.6 403.7 308.4 404.1 308.2 404.2 308.2 448.4 294.5 480.4 285 505.7 278.1 526 273.4 543.3 270.4 558.5 269.1 564.9 269 571.5 269.4 577.4 270.2 583.7 271.4 589 273 594.9 275.3 599.7 277.7 605.1 280.8 610.4 284.5 615.6 288.7 626 298.6 637.3 311.1 650.3 327.5 666 348.8 686.7 378.1 686.9 378.2 687.8 378.7 688.7 379.2 689.6 379.7 668.1 349.2 652.4 327.8 639.4 311.5 627.7 298.3 616.7 287.9 611.4 283.8 606.3 280.3 601.5 277.4 596 274.7 590.1 272.5 584.8 271 578.6 269.7 572.8 269 566.1 268.6 559.7 268.7 544.5 270.1 526.4 273.2 505.1 278.2 479.9 285.2 447.9 294.7z" fill="#ffef00"/>
<path d="M496.7 138.8 432.9 158.8 326.5 192.7 326.7 195.5 440.1 159.4 495.7 142 543.7 127.7 572.8 119.8 590.3 115.7 602.9 113.1 616.9 110.8 627.6 109.6 638.7 109 647.8 109.1 658.1 110 666.8 111.7 674.8 114 682.3 117 690.4 121.2 698 126.1 704.7 131.1 712.8 138.1 723.2 148.6 730.9 157.2 747.7 177.9 769.7 207.8 797.9 247.9 851.4 325.4 851.9 322.7 800.9 248.8 771 206.3 748.3 175.5 738.6 163.2 730.2 153.1 721.3 143.4 714.4 136.5 706.1 129.1 699.2 123.7 691.5 118.7 683.1 114.2 675.7 111.2 667.6 108.8 659.3 107.2 650.8 106.3 640.2 106 629.5 106.5 619.2 107.6 605.9 109.6 594.2 111.9 578.3 115.5 542.6 125.1zM448.4 294.5 404.2 308.2 404.5 308.1 405 307.9 405.4 307.8 405.6 307.7 448.9 294.3 480.1 285 504.5 278.5 524.8 273.8 542.4 270.8 557.3 269.5 563.7 269.5 570.4 269.9 576.3 270.7 582.3 271.9 588 273.7 593.3 275.7 598.7 278.4 603.5 281.3 608.6 284.8 613.8 289 624.3 298.8 635.5 311.3 648.1 327.1 663.5 347.9 683.8 376.5 684.3 376.8 685.2 377.3 686.1 377.8 686.7 378.1 666 348.8 650.3 327.5 637.3 311.1 626 298.6 615.6 288.7 610.4 284.5 605.1 280.8 599.7 277.7 594.9 275.3 589 273 583.7 271.4 577.4 270.2 571.5 269.4 564.9 269 558.5 269.1 543.3 270.4 526 273.4 505.7 278.1 480.4 285z" fill="#ffdf00"/>
<path d="M439.7 153.7 326.3 189.9 326.5 191.7 326.5 192.7 432.9 158.8 496.7 138.8 542.6 125.1 578.3 115.5 594.2 111.9 605.9 109.6 619.2 107.6 629.5 106.5 640.2 106 650.8 106.3 659.3 107.2 667.6 108.8 675.7 111.2 683.1 114.2 691.5 118.7 699.2 123.7 706.1 129.1 714.4 136.5 721.3 143.4 730.2 153.1 738.6 163.2 748.3 175.5 771 206.3 800.9 248.8 851.9 322.7 852.1 321.8 852.3 320.1 799.7 243.8 771.5 203.7 748.3 172.2 732.4 152.4 723.5 142.4 716.2 135 707.6 127.1 700.5 121.5 692.6 116.2 684.1 111.6 676.6 108.5 667.4 105.8 657.3 103.9 648.2 103.1 639.3 103 628.2 103.6 617.6 104.9 603.6 107.1 591.1 109.7 573.7 113.8 545.1 121.5 495.3 136.3zM405.6 307.7 405.8 307.7 406.2 307.5 406.6 307.4 407 307.3 448.5 294.4 479.7 285.2 504.2 278.6 523.6 274.2 540.9 271.3 555.1 270.1 562.1 270 568.1 270.4 574.5 271.2 580.2 272.4 586.1 274.1 591.3 276.1 596.2 278.5 601.6 281.6 611.4 288.7 621.9 298.5 632.8 310.5 645.4 326.2 660.8 346.9 680.8 375 681.7 375.5 682.6 375.9 683.4 376.4 683.8 376.5 663.5 347.9 648.1 327.1 635.5 311.3 624.3 298.8 613.8 289 608.6 284.8 603.5 281.3 598.7 278.4 593.3 275.7 588 273.7 582.3 271.9 576.3 270.7 570.4 269.9 563.7 269.5 557.3 269.5 542.4 270.8 524.8 273.8 504.5 278.5 480.1 285 448.9 294.3z" fill="#ffcf00"/>
<path d="M497.8 132.7 433.3 152.9 326.1 187.1 326.3 189.9 439.7 153.7 495.3 136.3 545.1 121.5 573.7 113.8 591.1 109.7 603.6 107.1 617.6 104.9 628.2 103.6 639.3 103 648.2 103.1 657.3 103.9 667.4 105.8 676.6 108.5 684.1 111.6 692.6 116.2 700.5 121.5 707.6 127.1 716.2 135 723.5 142.4 732.4 152.4 748.3 172.2 771.5 203.7 799.7 243.8 852.3 320.1 852.8 317.4 801.8 243.5 771.5 200.4 748.8 169.6 739.1 157.3 730.5 147.1 721.7 137.4 714.8 130.5 706.5 123.1 699.7 117.8 691.9 112.7 683.6 108.3 676.1 105.3 668.3 103 659.9 101.3 651.2 100.3 640.8 100 630.1 100.5 619.9 101.6 606.6 103.7 594.9 106 579 109.6 543.1 119.2zM448.5 294.4 407 307.3 407.4 307.1 407.8 307 408.3 306.9 408.5 306.9 449.1 294.3 479.4 285.4 503.5 279 523.4 274.5 539.8 271.8 554.7 270.6 567.2 271 573 271.8 579.1 273.1 589.1 276.5 594.7 279.1 599.6 281.9 604.7 285.4 609.6 289.2 620 298.8 630.9 310.7 643.6 326.5 658.6 346.6 677.7 373.5 678.2 373.7 679 374.1 679.9 374.6 680.8 375 660.8 346.9 645.4 326.2 632.8 310.5 621.9 298.5 611.4 288.7 601.6 281.6 596.2 278.5 591.3 276.1 586.1 274.1 580.2 272.4 574.5 271.2 568.1 270.4 562.1 270 555.1 270.1 540.9 271.3 523.6 274.2 504.2 278.6 479.7 285.2z" fill="#ffbf00"/>
<path d="M441.1 147.5 325.9 184.3 326 186.1 326.1 187.1 433.3 152.9 497.8 132.7 543.1 119.2 579 109.6 594.9 106 606.6 103.7 619.9 101.6 630.1 100.5 640.8 100 651.2 100.3 659.9 101.3 668.3 103 676.1 105.3 683.6 108.3 691.9 112.7 699.7 117.8 706.5 123.1 714.8 130.5 721.7 137.4 730.5 147.1 739.1 157.3 748.8 169.6 771.5 200.4 801.8 243.5 852.8 317.4 852.9 316.5 853.2 314.8 800.6 238.5 772.4 198.4 749.2 166.9 733.3 147.1 723.9 136.5 716.6 129 708 121.2 701 115.6 693 110.2 686.1 106.4 678.4 103.1 668.9 100.1 659.4 98.2 650.7 97.3 639.9 97.1 628.8 97.7 618.1 98.9 604.2 101.2 591.6 103.8 574.5 107.8 545.6 115.6 496.6 130.2zM408.5 306.9 408.7 306.8 409.1 306.7 409.5 306.6 409.9 306.5 410 306.5 448.9 294.5 478.3 285.9 501.9 279.6 521.3 275.2 538.7 272.4 552.9 271.3 559.4 271.3 566.1 271.7 577.1 273.6 582.7 275.3 587.9 277.3 597.4 282.3 602.4 285.6 607.4 289.4 618.1 299.1 628.9 311.1 641.2 326.2 655.8 345.7 674.5 372 674.6 372 675.5 372.4 676.4 372.9 677.3 373.3 677.7 373.5 658.6 346.6 643.6 326.5 630.9 310.7 620 298.8 609.6 289.2 604.7 285.4 599.6 281.9 594.7 279.1 589.1 276.5 579.1 273.1 573 271.8 567.2 271 554.7 270.6 539.8 271.8 523.4 274.5 503.5 279 479.4 285.4 449.1 294.3z" fill="#ffaf00"/>
<path d="M497 127.2 325.7 181.5 325.9 184.3 441.1 147.5 496.6 130.2 545.6 115.6 574.5 107.8 591.6 103.8 604.2 101.2 618.1 98.9 628.8 97.7 639.9 97.1 650.7 97.3 659.4 98.2 668.9 100.1 678.4 103.1 686.1 106.4 693 110.2 701 115.6 708 121.2 716.6 129 723.9 136.5 733.3 147.1 749.2 166.9 772.4 198.4 800.6 238.5 853.2 314.8 853.6 312.1 802.7 238.2 772.4 195.1 749.7 164.3 740 152 731.1 141.2 722.2 131.5 715.3 124.6 707 117.2 700.1 111.9 692.3 106.8 684.1 102.4 676.5 99.4 668.8 97 660.4 95.4 651.7 94.4 641.3 94.1 630.6 94.6 620.3 95.7 607 97.8 595.3 100.1 579.4 103.7 542.7 113.5zM448.9 294.5 410 306.5 410.3 306.4 410.7 306.4 411.1 306.3 411.5 306.2 450.4 294.2 479 285.9 501.7 280 520.9 275.7 537.6 273 551.9 272 564 272.4 569.9 273.2 575.4 274.4 581.3 276.1 586.1 278 591.1 280.4 596 283.2 605.9 290.3 616 299.5 626.9 311.4 638.8 325.9 653 344.8 671.3 370.5 672 370.8 672.9 371.2 673.8 371.6 674.5 372 655.8 345.7 641.2 326.2 628.9 311.1 618.1 299.1 607.4 289.4 602.4 285.6 597.4 282.3 587.9 277.3 582.7 275.3 577.1 273.6 566.1 271.7 559.4 271.3 552.9 271.3 538.7 272.4 521.3 275.2 501.9 279.6 478.3 285.9z" fill="#ff9f00"/>
<path d="M440.7 141.9 325.5 178.7 325.6 180.3 325.7 181.5 497 127.2 542.7 113.5 579.4 103.7 595.3 100.1 607 97.8 620.3 95.7 630.6 94.6 641.3 94.1 651.7 94.4 660.4 95.4 668.8 97 676.5 99.4 684.1 102.4 692.3 106.8 700.1 111.9 707 117.2 715.3 124.6 722.2 131.5 731.1 141.2 740 152 749.7 164.3 772.4 195.1 802.7 238.2 853.6 312.1 853.8 311 854.1 309.5 800.6 232 772.4 191.9 749.2 160.4 733.3 140.6 724.5 130.7 717.2 123.2 708.5 115.3 701.4 109.7 693.5 104.4 685 99.8 677.5 96.7 668.4 93.9 658.2 92.1 649.2 91.3 640.3 91.2 629.2 91.8 618.5 93 604.5 95.3 591.9 97.9 574.3 102.1 545.1 109.9 496.2 124.6zM411.5 306.2 411.6 306.2 412 306.1 412.4 306.1 412.8 306 413 306 450.2 294.6 478.8 286.3 501.5 280.4 520.2 276.3 535.7 273.9 549.9 272.8 562 273.2 567.9 274 573.9 275.3 584 278.6 588.7 280.9 593.9 283.8 603.6 290.7 613.8 299.9 624.3 311.2 636.2 325.7 650 344 668 369.1 668.5 369.3 669.4 369.7 670.3 370 671.1 370.4 671.3 370.5 653 344.8 638.8 325.9 626.9 311.4 616 299.5 605.9 290.3 596 283.2 591.1 280.4 586.1 278 581.3 276.1 575.4 274.4 569.9 273.2 564 272.4 551.9 272 537.6 273 520.9 275.7 501.7 280 479 285.9 450.4 294.2z" fill="#ff8f00"/>
<path d="M325.3 175.9 325.5 178.7 440.7 141.9 496.2 124.6 545.1 109.9 574.3 102.1 591.9 97.9 604.5 95.3 618.5 93 629.2 91.8 640.3 91.2 649.2 91.3 658.2 92.1 668.4 93.9 677.5 96.7 685 99.8 693.5 104.4 701.4 109.7 708.5 115.3 717.2 123.2 724.5 130.7 733.3 140.6 749.2 160.4 772.4 191.9 800.6 232 854.1 309.5 854.5 306.8 802.7 231.8 772.8 189.2 750.1 158.4 740.4 146.1 731.7 135.7 722.8 125.8 715.9 118.8 707.5 111.4 700.6 106 692.8 100.9 684.5 96.5 677 93.5 669.3 91.2 660.8 89.5 652.2 88.5 641.7 88.2 630.9 88.8 620.7 89.9 607.3 91.9 595.5 94.3 579.4 97.9 542.3 107.9 495.1 122zM413 306 413.2 306 413.6 305.9 414 305.9 414.5 305.8 414.7 305.8 451 294.7 478.7 286.7 500.5 281.1 519.2 277 534.7 274.7 549 273.7 561.2 274.2 566.8 275 572.2 276.2 577.6 277.8 582.3 279.6 591.9 284.6 597.2 288 601.9 291.7 611.5 300.3 622.1 311.6 633.6 325.5 647.4 343.8 664.6 367.6 665 367.8 665.9 368.2 666.7 368.5 667.6 368.9 668 369.1 650 344 636.2 325.7 624.3 311.2 613.8 299.9 603.6 290.7 593.9 283.8 588.7 280.9 584 278.6 573.9 275.3 567.9 274 562 273.2 549.9 272.8 535.7 273.9 520.2 276.3 501.5 280.4 478.8 286.3 450.2 294.6z" fill="#ff8000"/>
<path d="M437 137.4 325.1 173.1 325.2 174.3 325.3 175.9 495.1 122 542.3 107.9 579.4 97.9 595.5 94.3 607.3 91.9 620.7 89.9 630.9 88.8 641.7 88.2 652.2 88.5 660.8 89.5 669.3 91.2 677 93.5 684.5 96.5 692.8 100.9 700.6 106 707.5 111.4 715.9 118.8 722.8 125.8 731.7 135.7 740.4 146.1 750.1 158.4 772.8 189.2 802.7 231.8 854.5 306.8 854.7 305.4 854.9 304.2 802.1 227.8 772.8 186 750.2 155.3 734.2 135.3 725.1 125.1 717.8 117.5 709.1 109.6 702 103.9 694 98.5 687 94.7 679.3 91.3 669.8 88.3 660.2 86.4 651.5 85.5 640.7 85.3 629.5 86 618.8 87.2 604.7 89.5 591.9 92.1 574.6 96.3 544.6 104.4 497.6 118.4zM414.7 305.8 414.9 305.8 415.3 305.8 415.7 305.7 416.1 305.7 416.3 305.7 450.9 295.2 477.7 287.5 499.6 281.8 517.8 278 533.8 275.6 547.2 274.7 559.3 275.2 565 276 570.3 277.2 575.2 278.6 580.5 280.6 590.1 285.6 595.3 289.1 600.1 292.7 609.7 301.3 619.7 312 631.3 325.9 644.7 343.6 661 366.3 661.5 366.4 662.4 366.8 663.2 367.1 664.1 367.5 664.6 367.6 647.4 343.8 633.6 325.5 622.1 311.6 611.5 300.3 601.9 291.7 597.2 288 591.9 284.6 582.3 279.6 577.6 277.8 572.2 276.2 566.8 275 561.2 274.2 549 273.7 534.7 274.7 519.2 277 500.5 281.1 478.7 286.7 451 294.7z" fill="#ff7000"/>
<path d="M324.9 170.3 325.1 173.1 437 137.4 497.6 118.4 544.6 104.4 574.6 96.3 591.9 92.1 604.7 89.5 618.8 87.2 629.5 86 640.7 85.3 651.5 85.5 660.2 86.4 669.8 88.3 679.3 91.3 687 94.7 694 98.5 702 103.9 709.1 109.6 717.8 117.5 725.1 125.1 734.2 135.3 750.2 155.3 772.8 186 802.1 227.8 854.9 304.2 855.3 301.5 803 225.9 773.2 183.4 750.5 152.5 732.5 130.2 723.5 120.2 716.5 113.2 708.1 105.6 701.2 100.3 693.4 95.1 685 90.7 677.5 87.6 669.4 85.2 661.2 83.6 652.6 82.7 642 82.4 631.2 82.9 620.8 84 607.4 86.2 595.4 88.5 579.1 92.3 542.8 102.1 495.6 116.2zM416.3 305.7 416.5 305.7 416.9 305.7 417.3 305.7 417.8 305.7 418 305.7 451.7 295.4 477.7 288.1 498.7 282.7 516.5 279 532 276.6 545.4 275.8 557.5 276.3 568.4 278.3 578.5 281.7 588.1 286.7 597.4 293.2 607.2 301.8 617.3 312.5 628.4 325.8 641.5 342.9 657.4 364.9 658 365.1 658.8 365.4 659.7 365.8 660.6 366.1 661 366.3 644.7 343.6 631.3 325.9 619.7 312 609.7 301.3 600.1 292.7 595.3 289.1 590.1 285.6 580.5 280.6 575.2 278.6 570.3 277.2 565 276 559.3 275.2 547.2 274.7 533.8 275.6 517.8 278 499.6 281.8 477.7 287.5 450.9 295.2z" fill="#ff6000"/>
<path d="M324.8 167.5 324.8 168.2 324.9 170.3 495.6 116.2 542.8 102.1 579.1 92.3 595.4 88.5 607.4 86.2 620.8 84 631.2 82.9 642 82.4 652.6 82.7 661.2 83.6 669.4 85.2 677.5 87.6 685 90.7 693.4 95.1 701.2 100.3 708.1 105.6 716.5 113.2 723.5 120.2 732.5 130.2 750.5 152.5 773.2 183.4 803 225.9 855.3 301.5 855.6 299.6 855.7 298.9 803.4 223.2 772.3 178.9 751.6 150.7 734 128.9 725.9 119.7 718.5 112 709.7 103.9 702.6 98.2 694.6 92.8 687.4 88.8 678.6 85 670.3 82.5 662.1 80.8 653.5 79.8 643.3 79.5 632.8 79.9 622.8 80.9 609.9 82.8 598.6 85 583.3 88.4 548.8 97.5 509.6 109 439.9 130.8zM418 305.7 418.2 305.7 418.6 305.7 419 305.7 419.4 305.7 419.8 305.7 452.6 295.8 477.7 288.7 498.7 283.5 515.7 280 530.3 277.8 543.6 277 555.8 277.6 566.2 279.4 571 280.8 576.3 282.8 586 287.8 595 294 604.5 302.4 614.2 312.4 625.4 325.7 638.1 342.2 653.7 363.6 654.4 363.9 655.3 364.2 656.2 364.5 657.1 364.8 657.4 364.9 641.5 342.9 628.4 325.8 617.3 312.5 607.2 301.8 597.4 293.2 588.1 286.7 578.5 281.7 568.4 278.3 557.5 276.3 545.4 275.8 532 276.6 516.5 279 498.7 282.7 477.7 288.1 451.7 295.4z" fill="#ff5000"/>
<path d="M435.3 129.4 324.6 164.8 324.8 167.5 439.9 130.8 509.6 109 548.8 97.5 583.3 88.4 598.6 85 609.9 82.8 622.8 80.9 632.8 79.9 643.3 79.5 653.5 79.8 662.1 80.8 670.3 82.5 678.6 85 687.4 88.8 694.6 92.8 702.6 98.2 709.7 103.9 718.5 112 725.9 119.7 734 128.9 751.6 150.7 772.3 178.9 803.4 223.2 855.7 298.9 856.1 296.3 803.4 220 774 178.1 750.8 146.7 733.5 125 724.3 114.8 717.2 107.6 708.8 100 701.8 94.6 693.9 89.4 687.1 85.6 678.2 81.9 670 79.4 661.3 77.7 651 76.7 642.2 76.6 631.3 77.1 620.9 78.3 607.3 80.4 595.2 82.8 578.6 86.7 545.1 95.7 496.2 110.3zM419.8 305.7 420.2 305.8 420.7 305.8 421.1 305.8 421.5 305.9 421.6 305.9 452.7 296.5 476.9 289.7 497.1 284.7 514 281.2 528.6 279.1 542 278.3 553.3 278.9 564 280.7 573.9 284 583.5 288.8 592.4 294.9 601.9 303.1 611.5 313 622.3 325.7 634.6 341.5 649.8 362.3 650.1 362.4 650.9 362.7 651.8 363 652.7 363.3 653.6 363.6 653.7 363.6 638.1 342.2 625.4 325.7 614.2 312.4 604.5 302.4 595 294 586 287.8 576.3 282.8 571 280.8 566.2 279.4 555.8 277.6 543.6 277 530.3 277.8 515.7 280 498.7 283.5 477.7 288.7 452.6 295.8z" fill="#ff4000"/>
<path d="M508.4 103.7 440.4 125 324.4 162 324.6 164.8 435.3 129.4 496.2 110.3 545.1 95.7 578.6 86.7 595.2 82.8 607.3 80.4 620.9 78.3 631.3 77.1 642.2 76.6 651 76.7 661.3 77.7 670 79.4 678.2 81.9 687.1 85.6 693.9 89.4 701.8 94.6 708.8 100 717.2 107.6 724.3 114.8 733.5 125 750.8 146.7 774 178.1 803.4 220 856.1 296.3 856.4 293.6 802.5 215.6 771.4 171.3 751.3 144 743.5 134 733.4 121.9 723.1 110.5 716 103.4 707.9 96.2 701.1 91 693.3 86 686.6 82.4 679.1 79.2 670.7 76.7 662.4 74.9 653.9 74 643.5 73.6 632.9 74.1 622.8 75.1 609.8 77.1 598.4 79.3 582.9 82.8 550.2 91.4zM421.6 305.9 421.9 305.9 422.3 305.9 422.7 306 423.1 306 423.5 306.1 453.7 297.1 477.1 290.6 496.4 285.8 513.3 282.4 528 280.5 540.4 279.8 552 280.4 562.2 282.3 572.3 285.7 581.2 290.2 590 296.1 599.3 304.1 609 314 619.5 326.3 631.4 341.5 645.8 361.1 646.5 361.3 647.4 361.6 648.3 361.9 649.2 362.1 649.8 362.3 634.6 341.5 622.3 325.7 611.5 313 601.9 303.1 592.4 294.9 583.5 288.8 573.9 284 564 280.7 553.3 278.9 542 278.3 528.6 279.1 514 281.2 497.1 284.7 476.9 289.7 452.7 296.5z" fill="#ff3000"/>
<path d="M438.5 122.8 324.2 159.2 324.4 161.9 324.4 162 440.4 125 508.4 103.7 550.2 91.4 582.9 82.8 598.4 79.3 609.8 77.1 622.8 75.1 632.9 74.1 643.5 73.6 653.9 74 662.4 74.9 670.7 76.7 679.1 79.2 686.6 82.4 693.3 86 701.1 91 707.9 96.2 716 103.4 723.1 110.5 733.4 121.9 743.5 134 751.3 144 771.4 171.3 802.5 215.6 856.4 293.6 856.5 293.6 856.8 291 803.3 213.5 774.3 172.2 751.2 140.8 734.6 120 725.2 109.5 718 102.2 709.5 94.4 702.5 88.9 694.6 83.7 687.4 79.8 678.6 76.1 670.5 73.6 661.8 71.9 653.1 71 642.4 70.8 631.4 71.3 620.9 72.5 607.1 74.7 594.7 77.2 577.7 81.2 547.4 89.4 496.7 104.5zM423.5 306.1 424 306.2 424.4 306.2 424.8 306.3 425.2 306.4 425.4 306.4 453.9 298 476.5 291.8 495.7 287.1 511.8 283.9 526.5 282 538.8 281.4 550.2 282.1 560 283.9 569.4 287 578.4 291.4 587.6 297.6 596.8 305.4 606.1 314.8 616 326.3 627.6 341 641.6 359.9 642.2 360.1 643 360.3 643.9 360.6 644.8 360.8 645.7 361.1 645.8 361.1 631.4 341.5 619.5 326.3 609 314 599.3 304.1 590 296.1 581.2 290.2 572.3 285.7 562.2 282.3 552 280.4 540.4 279.8 528 280.5 513.3 282.4 496.4 285.8 477.1 290.6 453.7 297.1z" fill="#ff2000"/>
<path d="M501.9 100 435.7 120.8 324 156.4 324.2 159.2 438.5 122.8 496.7 104.5 547.4 89.4 577.7 81.2 594.7 77.2 607.1 74.7 620.9 72.5 631.4 71.3 642.4 70.8 653.1 71 661.8 71.9 670.5 73.6 678.6 76.1 687.4 79.8 694.6 83.7 702.5 88.9 709.5 94.4 718 102.2 725.2 109.5 734.6 120 751.2 140.8 774.3 172.2 803.3 213.5 856.8 291 857.2 288.4 803.7 210.9 772.9 167.1 750.7 137 741 124.7 732.5 114.5 723.7 104.8 716.9 98 708.6 90.6 701.7 85.4 694 80.3 687.1 76.7 678.2 73 670.2 70.6 662.6 69.1 652.2 68 643.6 67.9 632.9 68.3 622.8 69.4 609.5 71.4 597.9 73.7 582.1 77.3 546.3 86.9zM425.4 306.4 425.6 306.5 426 306.6 426.4 306.6 426.8 306.7 427.3 306.8 427.5 306.9 455.1 298.8 476.8 292.9 495 288.5 510.4 285.6 524.1 283.8 536.6 283.2 547.7 283.8 557.5 285.6 566.3 288.4 575.5 292.8 584.5 298.7 593.4 306.1 602.5 315.1 612.4 326.4 623.6 340.5 637.3 358.8 637.8 358.9 638.6 359.2 639.5 359.4 640.4 359.6 641.3 359.8 641.6 359.9 627.6 341 616 326.3 606.1 314.8 596.8 305.4 587.6 297.6 578.4 291.4 569.4 287 560 283.9 550.2 282.1 538.8 281.4 526.5 282 511.8 283.9 495.7 287.1 476.5 291.8 453.9 298z" fill="#ff1000"/>
<path d="M442.5 115.8 323.9 153.7 324 155.4 324 156.4 435.7 120.8 501.9 100 546.3 86.9 582.1 77.3 597.9 73.7 609.5 71.4 622.8 69.4 632.9 68.3 643.6 67.9 652.2 68 662.6 69.1 670.2 70.6 678.2 73 687.1 76.7 694 80.3 701.7 85.4 708.6 90.6 716.9 98 723.7 104.8 732.5 114.5 741 124.7 750.7 137 772.9 167.1 803.7 210.9 857.2 288.4 857.3 287.4 857.6 285.7 803.3 207.1 775.1 167 751.5 134.9 735.6 115.1 726.2 104.4 718.9 96.9 710.2 89 703.2 83.4 695.2 78 686.8 73.5 677.8 69.9 670.5 67.8 661.9 66.1 653.2 65.2 642.5 65 631.4 65.6 620.7 66.8 606.7 69.1 594.1 71.7 576.5 75.8 547 83.8 498.1 98.4zM427.5 306.9 427.7 306.9 428.1 307 428.5 307.2 428.9 307.3 429.3 307.4 429.6 307.5 455.5 299.9 476.3 294.3 493.8 290.2 509.3 287.3 522.8 285.6 534.4 285.1 545.4 285.8 555.3 287.6 563.9 290.3 573.1 294.7 581.4 300.1 590.5 307.5 599.5 316.4 609.1 327.2 619.9 340.6 632.8 357.7 633.4 357.9 634.2 358.1 635.1 358.3 636 358.5 636.9 358.7 637.3 358.8 623.6 340.5 612.4 326.4 602.5 315.1 593.4 306.1 584.5 298.7 575.5 292.8 566.3 288.4 557.5 285.6 547.7 283.8 536.6 283.2 524.1 283.8 510.4 285.6 495 288.5 476.8 292.9 455.1 298.8z" fill="#f00"/>
<path d="M323.7 150.9 323.9 153.7 442.5 115.8 498.1 98.4 547 83.8 576.5 75.8 594.1 71.7 606.7 69.1 620.7 66.8 631.4 65.6 642.5 65 653.2 65.2 661.9 66.1 670.5 67.8 677.8 69.9 686.8 73.5 695.2 78 703.2 83.4 710.2 89 718.9 96.9 726.2 104.4 735.6 115.1 751.5 134.9 775.1 167 803.3 207.1 857.6 285.7 857.9 283.1 805.3 206.9 775 163.7 751.9 132.3 742.3 120 733.7 109.7 724.7 99.7 717.7 92.7 709.4 85.2 702.5 79.8 694.6 74.7 686.5 70.4 678.8 67.3 670.7 64.9 662.8 63.3 654 62.4 643.7 62.1 632.9 62.6 622.6 63.7 609.1 65.8 597.2 68.2 581 71.9 543.2 82.1 496.1 96.2zM429.6 307.5 429.7 307.5 430.2 307.6 430.6 307.8 431 307.9 431.4 308 431.8 308.2 456.9 301 476.8 295.7 494.4 291.7 508.8 289.1 521.7 287.6 533.2 287.3 543.3 287.9 553.1 289.8 562.2 292.8 570.4 296.7 578.8 302.1 587.3 309 595.8 317.2 605.6 328 616 340.8 628 356.8 628.1 356.8 629 356.9 629.9 357.1 630.7 357.3 631.6 357.5 632.5 357.7 632.8 357.7 619.9 340.6 609.1 327.2 599.5 316.4 590.5 307.5 581.4 300.1 573.1 294.7 563.9 290.3 555.3 287.6 545.4 285.8 534.4 285.1 522.8 285.6 509.3 287.3 493.8 290.2 476.3 294.3 455.5 299.9z" fill="#ef0000"/>
<path d="M323.5 148.2 323.6 148.7 323.7 150.9 496.1 96.2 543.2 82.1 581 71.9 597.2 68.2 609.1 65.8 622.6 63.7 632.9 62.6 643.7 62.1 654 62.4 662.8 63.3 670.7 64.9 678.8 67.3 686.5 70.4 694.6 74.7 702.5 79.8 709.4 85.2 717.7 92.7 724.7 99.7 733.7 109.7 742.3 120 751.9 132.3 775 163.7 805.3 206.9 857.9 283.1 858.2 281 858.3 280.5 805.6 204.2 774.5 159.9 753.1 130.7 735.9 109.2 727.3 99.4 719.8 91.7 711 83.6 703.9 77.9 695.9 72.5 688.9 68.6 681.1 65.2 671.7 62.2 662.1 60.3 653.3 59.4 644.9 59.2 634.3 59.6 624.3 60.6 611.4 62.6 600.1 64.7 584.7 68.2 550.2 77.3 511 88.8 440.4 110.9zM431.8 308.2 432.2 308.3 432.6 308.5 433 308.6 433.5 308.8 433.9 309 434.2 309.1 457.5 302.4 476.6 297.5 492.3 293.9 506.7 291.4 518.6 290 530.1 289.6 540.2 290.2 549.9 292 559.2 294.9 567.5 298.8 575.9 304.2 583.8 310.5 592.5 318.7 601.3 328.3 611.4 340.5 623.1 355.8 623.7 355.9 624.6 356.1 625.5 356.3 626.3 356.4 627.2 356.6 628 356.8 616 340.8 605.6 328 595.8 317.2 587.3 309 578.8 302.1 570.4 296.7 562.2 292.8 553.1 289.8 543.3 287.9 533.2 287.3 521.7 287.6 508.8 289.1 494.4 291.7 476.8 295.7 456.9 301z" fill="#df0000"/>
<path d="M437.6 109 323.4 145.4 323.5 148.2 440.4 110.9 511 88.8 550.2 77.3 584.7 68.2 600.1 64.7 611.4 62.6 624.3 60.6 634.3 59.6 644.9 59.2 653.3 59.4 662.1 60.3 671.7 62.2 681.1 65.2 688.9 68.6 695.9 72.5 703.9 77.9 711 83.6 719.8 91.7 727.3 99.4 735.9 109.2 753.1 130.7 774.5 159.9 805.6 204.2 858.3 280.5 858.6 277.9 804.8 199.8 775.3 157.9 752.2 126.4 735.1 105.1 725.8 94.7 718.7 87.5 710.2 79.8 703.2 74.3 695.3 69.1 688.5 65.4 680.7 62.1 671.4 59.2 662.7 57.5 652.4 56.5 643.7 56.3 632.7 56.9 622.3 58.1 608.6 60.2 596.4 62.7 579.5 66.6 547.4 75.3 497.6 90.2zM434.2 309.1 434.3 309.1 434.7 309.3 435.1 309.5 435.5 309.7 435.9 309.8 436.3 310 436.6 310.1 458.2 304.1 475.5 299.7 491.3 296.2 504.7 293.9 516.7 292.5 527.8 292.2 537.4 292.8 546.9 294.4 555.7 297.2 564.2 301.1 572 305.9 580 312.1 588.3 319.7 597.2 329.3 606.9 340.9 617.9 355 618.4 355.1 619.3 355.2 620.2 355.3 621.1 355.5 622 355.6 622.8 355.8 623.1 355.8 611.4 340.5 601.3 328.3 592.5 318.7 583.8 310.5 575.9 304.2 567.5 298.8 559.2 294.9 549.9 292 540.2 290.2 530.1 289.6 518.6 290 506.7 291.4 492.3 293.9 476.6 297.5 457.5 302.4z" fill="#cf0000"/>
<path d="M505.4 84.9 437.5 106.2 323.2 142.7 323.4 145.4 437.6 109 497.6 90.2 547.4 75.3 579.5 66.6 596.4 62.7 608.6 60.2 622.3 58.1 632.7 56.9 643.7 56.3 652.4 56.5 662.7 57.5 671.4 59.2 680.7 62.1 688.5 65.4 695.3 69.1 703.2 74.3 710.2 79.8 718.7 87.5 725.8 94.7 735.1 105.1 752.2 126.4 775.3 157.9 804.8 199.8 858.6 277.9 859 275.2 804.3 196 772.7 151.1 751.7 122.6 734.2 101.1 724.5 90.3 717.6 83.4 709.4 76.1 702.5 70.9 694.8 65.8 688 62.2 680.5 59 672.1 56.4 663.7 54.7 655.3 53.8 644.8 53.5 634.2 53.9 624 55 610.9 57 599.3 59.2 583.4 62.8 548.1 72.3zM436.6 310.1 436.8 310.2 437.2 310.4 437.6 310.6 438 310.8 438.4 311 438.8 311.2 439.2 311.4 459 305.9 476.4 301.6 491.2 298.5 503.9 296.4 514.9 295.3 525.5 295 535.6 295.7 544.2 297.3 552.3 299.8 560.4 303.4 568.4 308.2 576.6 314.4 584.4 321.6 592.9 330.4 602.2 341.4 612.4 354.2 613.2 354.3 614 354.5 614.9 354.6 615.8 354.7 616.7 354.8 617.6 354.9 617.9 355 606.9 340.9 597.2 329.3 588.3 319.7 580 312.1 572 305.9 564.2 301.1 555.7 297.2 546.9 294.4 537.4 292.8 527.8 292.2 516.7 292.5 504.7 293.9 491.3 296.2 475.5 299.7 458.2 304.1z" fill="#bf0000"/>
<path d="M418.8 108.9 323 139.6 323.2 141.9 323.2 142.7 437.5 106.2 505.4 84.9 548.1 72.3 583.4 62.8 599.3 59.2 610.9 57 624 55 634.2 53.9 644.8 53.5 655.3 53.8 663.7 54.7 672.1 56.4 680.5 59 688 62.2 694.8 65.8 702.5 70.9 709.4 76.1 717.6 83.4 724.5 90.3 734.2 101.1 751.7 122.6 772.7 151.1 804.3 196 859 275.2 859.1 274.5 859.4 272.3 811.7 203.2 768.4 141.6 753.4 121.5 737.6 101.6 723.8 86.3 714.1 77 706.5 70.7 697.9 64.8 689.2 59.8 680.1 56 672 53.5 663 51.7 652.4 50.7 641 50.7 628.8 51.5 617 53 600.9 55.9 587.4 59.1 586 59.2 577.8 61.4 575.9 61.6 573.2 62.6 563.2 64.9 559.6 66.2 549 69.2 545.2 69.9 539.9 71.8 514.9 78.9 504.3 82.5zM439.2 311.4 439.7 311.6 440.1 311.8 440.5 312.1 440.9 312.3 441.3 312.5 441.7 312.7 442 312.9 460.9 307.8 476.6 304 490.7 301.1 502.3 299.3 513.7 298.3 524 298.1 533.1 298.9 541.7 300.5 549.9 303.1 557.7 306.6 565.2 311.1 572.7 316.8 580 323.2 588.2 331.6 596.7 341.4 606.5 353.6 607 353.7 607.9 353.7 608.8 353.8 609.7 353.9 610.5 354 611.4 354.1 612.3 354.2 612.4 354.2 602.2 341.4 592.9 330.4 584.4 321.6 576.6 314.4 568.4 308.2 560.4 303.4 552.3 299.8 544.2 297.3 535.6 295.7 525.5 295 514.9 295.3 503.9 296.4 491.2 298.5 476.4 301.6 459 305.9z" fill="#af0000"/>
<path d="M492.9 83.2 490 83.1 487.3 83.5 476.6 86.8 418.6 105.2 322.8 136.4 323 139.6 418.8 108.9 504.3 82.5 514.9 78.9 539.9 71.8 545.2 69.9 549 69.2 559.6 66.2 563.2 64.9 573.2 62.6 575.9 61.6 577.8 61.4 586 59.2 587.4 59.1 600.9 55.9 617 53 628.8 51.5 641 50.7 652.4 50.7 663 51.7 672 53.5 680.1 56 689.2 59.8 697.9 64.8 706.5 70.7 714.1 77 723.8 86.3 737.6 101.6 753.4 121.5 768.4 141.6 811.7 203.2 859.4 272.3 859.8 269.3 814.7 203.2 786.4 162.4 781.6 155.9 779.3 154.1 773.4 145.8 767.5 136.2 762 128.4 760.1 126.1 758.8 125.9 756.4 122.7 753.4 117.3 751.3 114.3 748.9 111.4 748 111.7 746.4 109.7 743.9 104.9 741.5 102 741 101.8 740.5 102.3 739.4 101 737.6 97.5 736.2 95.6 735.2 94.6 734.6 95.3 733.5 94.1 732.2 91.1 731.2 89.9 730.7 89.3 730.1 89.2 729.8 89.8 728.9 89 727.1 85.4 726.6 84.8 725.9 84.7 725.6 85.3 724.7 84.4 723.3 81.4 722.8 80.9 721.9 81.5 719.4 77.5 718.6 78.3 718 77.8 716.5 74.8 715.8 75 715.6 75.5 713.5 72.1 712.8 73 712.1 72.2 711 70 710.2 70.8 709.6 70.1 708.5 67.9 707.8 68.8 706.5 66.4 705.5 67 704.9 66.5 704.4 65 703.6 64.8 703.3 65.4 702.8 65.1 702.3 63.5 701.5 63.5 701.3 63.9 700.7 63.4 700.1 62 699.3 62.7 697.8 60.7 697.4 61.4 696.8 61.1 696.2 59.6 695.5 60.3 694.6 58.8 693.7 59.3 692.9 58 692 58.3 691.2 57.1 690.3 57.5 689.4 56.1 688.7 56.7 687.6 55.2 687.1 55.7 685.6 55.2 684.7 54.1 684.1 54.5 682.5 53.9 681.7 52.9 681.1 53.1 680.5 52.8 679.7 52.9 676.1 51.1 672.9 50.5 667.8 49.1 666.6 48.9 665.4 49.2 663.8 49 663 48.5 662.3 48.5 661.7 47.9 660.6 48.5 658.9 48.3 658.2 47.5 657.1 48.2 655.3 47.9 654.8 47.1 653.8 47.9 653.4 47.9 652.6 47 651.6 47.8 650.4 47 649.2 47.7 648.2 46.9 647 47.7 646.1 46.8 645.1 47.7 644.7 47.7 643.9 46.6 643 47.8 642.2 47.8 641.8 46.8 639.6 47.9 638.7 46.8 637.7 47.8 636.9 48 636.7 47.5 635.6 47.1 634.7 48.2 633.9 48.3 633.6 47.4 632.6 47.3 631.6 48.4 630.7 48.5 629.5 47.4 627.6 48.9 627.3 48.9 626.5 47.6 625.6 48 624.7 49.1 623.6 49.4 622.6 48.1 621.6 48.6 620.7 49.6 619.6 49.9 618.7 48.6 617.7 48.9 615.9 50.5 615.1 50.6 614.9 50 613.9 49.4 612.9 49.7 611.1 51.3 610.2 51.5 609.1 50.2 608.1 50.4 606.3 51.9 604.6 52.5 603.4 51.3 602.5 51.5 601.5 51.9 599.7 53.5 598.2 53.8 597.8 53 596.8 52.7 595 53.1 592.3 55.1 590.8 55.5 590.4 54.7 589.4 54.4 588.5 54.6 586.7 55.1 584 57.1 582 57.6 581.2 56.5 579.3 56.8 576.6 57.6 573 59.8 571 60.4 570.2 59.5 569.3 59.4 563.9 60.9 559.4 63.5 556.4 64.3 554.8 63.3 552.1 64 546.8 65.6 539.7 69.1 534.9 70.5 532.5 69.8 526.2 71.6 517.4 74.3 504.2 79.7zM442 312.9 442.1 313 442.5 313.2 443 313.5 443.4 313.7 443.8 314 444.2 314.2 444.6 314.5 444.9 314.6 462.1 310.1 476.9 306.7 490.2 304.1 501.9 302.4 512 301.6 521.7 301.6 530.8 302.4 538.5 303.9 546.4 306.4 554.1 309.8 561.3 314.1 568.5 319.3 575.5 325.4 583.1 332.9 591.3 342 600.3 353.1 600.9 353.1 601.8 353.2 602.6 353.3 603.5 353.3 604.4 353.4 605.3 353.5 606.1 353.6 606.5 353.6 596.7 341.4 588.2 331.6 580 323.2 572.7 316.8 565.2 311.1 557.7 306.6 549.9 303.1 541.7 300.5 533.1 298.9 524 298.1 513.7 298.3 502.3 299.3 490.7 301.1 476.6 304 460.9 307.8z" fill="#9f0000"/>
<path d="M689.5 16 688.6 16.3 687.7 16.6 686.9 16.8 686 17.1 685.1 17.4 684.2 17.7 683.4 18 682.5 18.3 681.6 18.5 680.7 18.8 679.8 19.1 679 19.4 678.1 19.7 677.2 19.9 676.3 20.2 675.4 20.5 674.6 20.8 673.7 21.1 672.8 21.3 671.9 21.6 671.1 21.9 670.2 22.2 669.3 22.5 668.4 22.8 667.5 23 666.7 23.3 665.8 23.6 664.9 23.9 664 24.2 663.2 24.4 662.3 24.7 661.4 25 660.5 25.3 659.6 25.6 658.8 25.8 657.9 26.1 657 26.4 656.1 26.7 655.2 27 654.4 27.3 653.5 27.5 652.6 27.8 651.7 28.1 650.9 28.4 650 28.7 649.1 28.9 648.2 29.2 647.3 29.5 646.5 29.8 645.6 30.1 644.7 30.4 643.8 30.6 643 30.9 642.1 31.2 641.2 31.5 640.3 31.8 639.4 32 638.6 32.3 637.7 32.6 636.8 32.9 635.9 33.2 635 33.4 634.2 33.7 633.3 34 632.4 34.3 631.5 34.6 630.7 34.9 629.8 35.1 628.9 35.4 628 35.7 627.1 36 626.3 36.3 625.4 36.5 624.5 36.8 623.6 37.1 622.8 37.4 621.9 37.7 621 37.9 620.1 38.2 619.2 38.5 618.4 38.8 617.5 39.1 616.6 39.4 615.7 39.6 614.8 39.9 614 40.2 613.1 40.5 612.2 40.8 611.3 41 610.5 41.3 609.6 41.6 608.7 41.9 607.8 42.2 606.9 42.5 606.1 42.7 605.2 43 604.3 43.3 603.4 43.6 602.6 43.9 601.7 44.1 600.8 44.4 599.9 44.7 599 45 598.2 45.3 597.3 45.5 596.4 45.8 595.5 46.1 594.6 46.4 593.8 46.7 592.9 47 592 47.2 591.1 47.5 590.3 47.8 589.4 48.1 588.5 48.4 587.6 48.6 586.7 48.9 585.9 49.2 585 49.5 584.1 49.8 583.2 50 582.3 50.3 581.5 50.6 580.6 50.9 579.7 51.2 578.8 51.5 578 51.7 577.1 52 576.2 52.3 575.3 52.6 574.4 52.9 573.6 53.1 572.7 53.4 571.8 53.7 570.9 54 570.1 54.3 569.2 54.5 568.3 54.8 567.4 55.1 566.5 55.4 565.7 55.7 564.8 56 563.9 56.2 563 56.5 562.1 56.8 561.3 57.1 560.4 57.4 559.5 57.6 558.6 57.9 557.8 58.2 556.9 58.5 556 58.8 555.1 59.1 554.2 59.3 553.4 59.6 552.5 59.9 551.6 60.2 550.7 60.5 549.9 60.7 549 61 548.1 61.3 547.2 61.6 546.3 61.9 545.5 62.1 544.6 62.4 543.7 62.7 542.8 63 541.9 63.3 541.1 63.6 540.2 63.8 539.3 64.1 538.4 64.4 537.6 64.7 536.7 65 535.8 65.2 534.9 65.5 534 65.8 533.2 66.1 532.3 66.4 531.4 66.6 530.5 66.9 529.7 67.2 528.8 67.5 527.9 67.8 527 68.1 526.1 68.3 525.3 68.6 524.4 68.9 523.5 69.2 522.6 69.5 521.7 69.7 520.9 70 520 70.3 519.1 70.6 518.2 70.9 517.4 71.2 516.5 71.4 515.6 71.7 514.7 72 513.8 72.3 513 72.6 512.1 72.8 511.2 73.1 510.3 73.4 509.5 73.7 508.6 74 507.7 74.2 506.8 74.5 505.9 74.8 505.1 75.1 504.2 75.4 503.3 75.7 502.4 75.9 501.5 76.2 500.7 76.5 499.8 76.8 498.9 77.1 498 77.3 497.2 77.6 496.3 77.9 495.4 78.2 494.5 78.5 493.6 78.7 492.8 79 491.9 79.3 491 79.6 490.1 79.9 489.3 80.2 488.4 80.4 487.5 80.7 486.6 81 485.7 81.3 484.9 81.6 484 81.8 483.1 82.1 482.2 82.4 481.3 82.7 480.5 83 479.6 83.3 478.7 83.5 477.8 83.8 477 84.1 476.1 84.4 475.2 84.7 474.3 84.9 473.4 85.2 472.6 85.5 471.7 85.8 470.8 86.1 469.9 86.3 469.1 86.6 468.2 86.9 467.3 87.2 466.4 87.5 465.5 87.8 464.7 88 463.8 88.3 462.9 88.6 462 88.9 461.1 89.2 460.3 89.4 459.4 89.7 458.5 90 457.6 90.3 456.8 90.6 455.9 90.8 455 91.1 454.1 91.4 453.2 91.7 452.4 92 451.5 92.3 450.6 92.5 449.7 92.8 448.9 93.1 448 93.4 447.1 93.7 446.2 93.9 445.3 94.2 444.5 94.5 443.6 94.8 442.7 95.1 441.8 95.4 440.9 95.6 440.1 95.9 439.2 96.2 438.3 96.5 437.4 96.8 436.6 97 435.7 97.3 434.8 97.6 433.9 97.9 433 98.2 432.2 98.4 431.3 98.7 430.4 99 429.5 99.3 428.7 99.6 427.8 99.9 426.9 100.1 426 100.4 425.1 100.7 424.3 101 423.4 101.3 422.5 101.5 421.6 101.8 420.7 102.1 419.9 102.4 419 102.7 418.1 102.9 417.2 103.2 416.4 103.5 415.5 103.8 414.6 104.1 413.7 104.4 412.8 104.6 412 104.9 411.1 105.2 410.2 105.5 409.3 105.8 408.4 106 407.6 106.3 406.7 106.6 405.8 106.9 404.9 107.2 404.1 107.4 403.2 107.7 402.3 108 401.4 108.3 400.5 108.6 399.7 108.9 398.8 109.1 397.9 109.4 397 109.7 396.2 110 395.3 110.3 394.4 110.5 393.5 110.8 392.6 111.1 391.8 111.4 390.9 111.7 390 112 389.1 112.2 388.2 112.5 387.4 112.8 386.5 113.1 385.6 113.4 384.7 113.6 383.9 113.9 383 114.2 382.1 114.5 381.2 114.8 380.3 115 379.5 115.3 378.6 115.6 377.7 115.9 376.8 116.2 376 116.5 375.1 116.7 374.2 117 373.3 117.3 372.4 117.6 371.6 117.9 370.7 118.1 369.8 118.4 368.9 118.7 368 119 367.2 119.3 366.3 119.5 365.4 119.8 364.5 120.1 363.7 120.4 362.8 120.7 361.9 121 361 121.2 360.1 121.5 359.3 121.8 358.4 122.1 357.5 122.4 356.6 122.6 355.8 122.9 354.9 123.2 354 123.5 353.1 123.8 352.2 124.1 351.4 124.3 350.5 124.6 349.6 124.9 348.7 125.2 347.8 125.5 347 125.7 346.1 126 345.2 126.3 344.3 126.6 343.5 126.9 342.6 127.1 341.7 127.4 340.8 127.7 339.9 128 339.1 128.3 338.2 128.6 337.3 128.8 336.4 129.1 335.6 129.4 334.7 129.7 333.8 130 332.9 130.2 332 130.5 331.2 130.8 330.3 131.1 329.4 131.4 328.5 131.6 327.6 131.9 326.8 132.2 325.9 132.5 325 132.8 324.1 133.1 323.3 133.3 322.4 133.6 321.5 133.9 321.9 134.5 322.3 135.1 322.7 135.7 322.8 136.4 418.6 105.2 476.6 86.8 487.3 83.5 490 83.1 492.9 83.2 504.2 79.7 517.4 74.3 526.2 71.6 532.5 69.8 534.9 70.5 539.7 69.1 546.8 65.6 552.1 64 554.8 63.3 556.4 64.3 559.4 63.5 563.9 60.9 569.3 59.4 570.2 59.5 571 60.4 573 59.8 576.6 57.6 579.3 56.8 581.2 56.5 582 57.6 584 57.1 586.7 55.1 588.5 54.6 589.4 54.4 590.4 54.7 590.8 55.5 592.3 55.1 595 53.1 596.8 52.7 597.8 53 598.2 53.8 599.7 53.5 601.5 51.9 602.5 51.5 603.4 51.3 604.6 52.5 606.3 51.9 608.1 50.4 609.1 50.2 610.2 51.5 611.1 51.3 612.9 49.7 613.9 49.4 614.9 50 615.1 50.6 615.9 50.5 617.7 48.9 618.7 48.6 619.6 49.9 620.7 49.6 621.6 48.6 622.6 48.1 623.6 49.4 624.7 49.1 625.6 48 626.5 47.6 627.3 48.9 627.6 48.9 629.5 47.4 630.7 48.5 631.6 48.4 632.6 47.3 633.6 47.4 633.9 48.3 634.7 48.2 635.6 47.1 636.7 47.5 636.9 48 637.7 47.8 638.7 46.8 639.6 47.9 641.8 46.8 642.2 47.8 643 47.8 643.9 46.6 644.7 47.7 645.1 47.7 646.1 46.8 647 47.7 648.2 46.9 649.2 47.7 650.4 47 651.6 47.8 652.6 47 653.4 47.9 653.8 47.9 654.8 47.1 655.3 47.9 657.1 48.2 658.2 47.5 658.9 48.3 660.6 48.5 661.7 47.9 662.3 48.5 663 48.5 663.8 49 665.4 49.2 666.6 48.9 667.8 49.1 672.9 50.5 676.1 51.1 679.7 52.9 680.5 52.8 681.1 53.1 681.7 52.9 682.5 53.9 684.1 54.5 684.7 54.1 685.6 55.2 687.1 55.7 687.6 55.2 688.7 56.7 689.4 56.1 690.3 57.5 691.2 57.1 692 58.3 692.9 58 693.7 59.3 694.6 58.8 695.5 60.3 696.2 59.6 696.8 61.1 697.4 61.4 697.8 60.7 699.3 62.7 700.1 62 700.7 63.4 701.3 63.9 701.5 63.5 702.3 63.5 702.8 65.1 703.3 65.4 703.6 64.8 704.4 65 704.9 66.5 705.5 67 706.5 66.4 707.8 68.8 708.5 67.9 709.6 70.1 710.2 70.8 711 70 712.1 72.2 712.8 73 713.5 72.1 715.6 75.5 715.8 75 716.5 74.8 718 77.8 718.6 78.3 719.4 77.5 721.9 81.5 722.8 80.9 723.3 81.4 724.7 84.4 725.6 85.3 725.9 84.7 726.6 84.8 727.1 85.4 728.9 89 729.8 89.8 730.1 89.2 730.7 89.3 731.2 89.9 732.2 91.1 733.5 94.1 734.6 95.3 735.2 94.6 736.2 95.6 737.6 97.5 739.4 101 740.5 102.3 741 101.8 741.5 102 743.9 104.9 746.4 109.7 748 111.7 748.9 111.4 751.3 114.3 753.4 117.3 756.4 122.7 758.8 125.9 760.1 126.1 762 128.4 767.5 136.2 773.4 145.8 779.3 154.1 781.6 155.9 786.4 162.4 814.7 203.2 859.8 269.3 860 268.6 860.8 268.4 861.7 268.1 862.6 267.8 862.2 267.2 861.8 266.6 861.4 266 860.9 265.4 860.5 264.8 860.1 264.2 859.7 263.6 859.3 263 858.9 262.4 858.5 261.8 858.1 261.2 857.6 260.6 857.2 260 856.8 259.4 856.4 258.8 856 258.2 855.6 257.6 855.2 257 854.8 256.4 854.3 255.8 853.9 255.2 853.5 254.6 853.1 254 852.7 253.4 852.3 252.8 851.9 252.2 851.4 251.6 851 251 850.6 250.4 850.2 249.8 849.8 249.2 849.4 248.6 849 248 848.6 247.4 848.1 246.8 847.7 246.2 847.3 245.6 846.9 245 846.5 244.4 846.1 243.8 845.7 243.2 845.2 242.6 844.8 242 844.4 241.4 844 240.8 843.6 240.2 843.2 239.6 842.8 239 842.4 238.4 841.9 237.8 841.5 237.2 841.1 236.6 840.7 235.9 840.3 235.3 839.9 234.7 839.5 234.1 839.1 233.5 838.6 232.9 838.2 232.3 837.8 231.7 837.4 231.1 837 230.5 836.6 229.9 836.2 229.3 835.7 228.7 835.3 228.1 834.9 227.5 834.5 226.9 834.1 226.3 833.7 225.7 833.3 225.1 832.9 224.5 832.4 223.9 832 223.3 831.6 222.7 831.2 222.1 830.8 221.5 830.4 220.9 830 220.3 829.5 219.7 829.1 219.1 828.7 218.5 828.3 217.9 827.9 217.3 827.5 216.7 827.1 216.1 826.7 215.5 826.2 214.9 825.8 214.3 825.4 213.7 825 213.1 824.6 212.5 824.2 211.9 823.8 211.3 823.4 210.7 822.9 210.1 822.5 209.5 822.1 208.9 821.7 208.3 821.3 207.7 820.9 207.1 820.5 206.5 820 205.9 819.6 205.3 819.2 204.7 818.8 204.1 818.4 203.5 818 202.9 817.6 202.3 817.2 201.7 816.7 201.1 816.3 200.5 815.9 199.9 815.5 199.3 815.1 198.7 814.7 198.1 814.3 197.5 813.9 196.9 813.4 196.3 813 195.7 812.6 195.1 812.2 194.5 811.8 193.9 811.4 193.3 811 192.7 810.5 192.1 810.1 191.5 809.7 190.9 809.3 190.3 808.9 189.7 808.5 189.1 808.1 188.5 807.7 187.9 807.2 187.3 806.8 186.7 806.4 186.1 806 185.5 805.6 184.9 805.2 184.3 804.8 183.7 804.3 183.1 803.9 182.5 803.5 181.9 803.1 181.3 802.7 180.7 802.3 180.1 801.9 179.5 801.5 178.9 801 178.3 800.6 177.7 800.2 177.1 799.8 176.5 799.4 175.9 799 175.3 798.6 174.7 798.2 174.1 797.7 173.5 797.3 172.8 796.9 172.2 796.5 171.6 796.1 171 795.7 170.4 795.3 169.8 794.8 169.2 794.4 168.6 794 168 793.6 167.4 793.2 166.8 792.8 166.2 792.4 165.6 792 165 791.5 164.4 791.1 163.8 790.7 163.2 790.3 162.6 789.9 162 789.5 161.4 789.1 160.8 788.7 160.2 788.2 159.6 787.8 159 787.4 158.4 787 157.8 786.6 157.2 786.2 156.6 785.8 156 785.3 155.4 784.9 154.8 784.5 154.2 784.1 153.6 783.7 153 783.3 152.4 782.9 151.8 782.5 151.2 782 150.6 781.6 150 781.2 149.4 780.8 148.8 780.4 148.2 780 147.6 779.6 147 779.1 146.4 778.7 145.8 778.3 145.2 777.9 144.6 777.5 144 777.1 143.4 776.7 142.8 776.3 142.2 775.8 141.6 775.4 141 775 140.4 774.6 139.8 774.2 139.2 773.8 138.6 773.4 138 773 137.4 772.5 136.8 772.1 136.2 771.7 135.6 771.3 135 770.9 134.4 770.5 133.8 770.1 133.2 769.6 132.6 769.2 132 768.8 131.4 768.4 130.8 768 130.2 767.6 129.6 767.2 129 766.8 128.4 766.3 127.8 765.9 127.2 765.5 126.6 765.1 126 764.7 125.4 764.3 124.8 763.9 124.2 763.4 123.6 763 123 762.6 122.4 762.2 121.8 761.8 121.2 761.4 120.6 761 120 760.6 119.4 760.1 118.8 759.7 118.2 759.3 117.6 758.9 117 758.5 116.4 758.1 115.8 757.7 115.2 757.3 114.6 756.8 114 756.4 113.4 756 112.8 755.6 112.2 755.2 111.6 754.8 111 754.4 110.3 753.9 109.7 753.5 109.1 753.1 108.5 752.7 107.9 752.3 107.3 751.9 106.7 751.5 106.1 751.1 105.5 750.6 104.9 750.2 104.3 749.8 103.7 749.4 103.1 749 102.5 748.6 101.9 748.2 101.3 747.8 100.7 747.3 100.1 746.9 99.5 746.5 98.9 746.1 98.3 745.7 97.7 745.3 97.1 744.9 96.5 744.4 95.9 744 95.3 743.6 94.7 743.2 94.1 742.8 93.5 742.4 92.9 742 92.3 741.6 91.7 741.1 91.1 740.7 90.5 740.3 89.9 739.9 89.3 739.5 88.7 739.1 88.1 738.7 87.5 738.2 86.9 737.8 86.3 737.4 85.7 737 85.1 736.6 84.5 736.2 83.9 735.8 83.3 735.4 82.7 734.9 82.1 734.5 81.5 734.1 80.9 733.7 80.3 733.3 79.7 732.9 79.1 732.5 78.5 732.1 77.9 731.6 77.3 731.2 76.7 730.8 76.1 730.4 75.5 730 74.9 729.6 74.3 729.2 73.7 728.7 73.1 728.3 72.5 727.9 71.9 727.5 71.3 727.1 70.7 726.7 70.1 726.3 69.5 725.9 68.9 725.4 68.3 725 67.7 724.6 67.1 724.2 66.5 723.8 65.9 723.4 65.3 723 64.7 722.6 64.1 722.1 63.5 721.7 62.9 721.3 62.3 720.9 61.7 720.5 61.1 720.1 60.5 719.7 59.9 719.2 59.3 718.8 58.7 718.4 58.1 718 57.5 717.6 56.9 717.2 56.3 716.8 55.7 716.4 55.1 715.9 54.5 715.5 53.9 715.1 53.3 714.7 52.7 714.3 52.1 713.9 51.5 713.5 50.9 713 50.3 712.6 49.7 712.2 49.1 711.8 48.5 711.4 47.9 711 47.2 710.6 46.6 710.2 46 709.7 45.4 709.3 44.8 708.9 44.2 708.5 43.6 708.1 43 707.7 42.4 707.3 41.8 706.9 41.2 706.4 40.6 706 40 705.6 39.4 705.2 38.8 704.8 38.2 704.4 37.6 704 37 703.5 36.4 703.1 35.8 702.7 35.2 702.3 34.6 701.9 34 701.5 33.4 701.1 32.8 700.7 32.2 700.2 31.6 699.8 31 699.4 30.4 699 29.8 698.6 29.2 698.2 28.6 697.8 28 697.3 27.4 696.9 26.8 696.5 26.2 696.1 25.6 695.7 25 695.3 24.4 694.9 23.8 694.5 23.2 694 22.6 693.6 22 693.2 21.4 692.8 20.8 692.4 20.2 692 19.6 691.6 19 691.2 18.4 690.7 17.8 690.3 17.2 689.9 16.6zM444.9 314.6 445 314.7 445.4 315 445.9 315.2 446.3 315.5 446.7 316 447.1 316.6 447.5 317.2 447.9 317.8 448.3 318.4 448.7 319 449.2 319.6 449.6 320.2 450 320.8 450.4 321.4 450.8 322 451.2 322.6 451.6 323.2 452 323.8 452.5 324.4 452.9 325 453.3 325.6 453.7 326.2 454.1 326.8 454.5 327.4 454.9 328 455.4 328.6 455.8 329.2 456.2 329.8 456.6 330.4 457 331 457.4 331.6 457.8 332.2 458.2 332.8 458.7 333.4 459.1 334 459.5 334.6 459.9 335.2 460.3 335.8 460.7 336.4 461.1 337 461.5 337.6 462 338.2 462.4 338.8 462.8 339.4 463.2 340 463.6 340.6 464 341.2 464.4 341.8 464.9 342.4 465.3 343 465.7 343.6 466.1 344.2 466.5 344.8 466.9 345.4 467.3 346 467.7 346.6 468.2 347.2 468.6 347.8 469 348.4 469.4 349 469.8 349.6 470.2 350.2 470.6 350.8 471.1 351.4 471.5 352 471.9 352.6 472.3 353.2 472.7 353.8 473.1 354.5 473.5 355.1 473.9 355.7 474.4 356.3 474.8 356.9 475.2 357.5 475.6 358.1 476 358.7 476.4 359.3 476.8 359.9 477.2 360.5 477.7 361.1 478.1 361.7 478.5 362.3 478.9 362.9 479.3 363.5 479.7 364.1 480.1 364.7 480.6 365.3 481 365.9 481.4 366.5 481.8 367.1 482.2 367.7 482.6 368.3 483 368.9 483.4 369.5 483.9 370.1 484.3 370.7 484.7 371.3 485.1 371.9 485.5 372.5 485.9 373.1 486.3 373.7 486.8 374.3 487.2 374.9 487.6 375.5 488 376.1 488.4 376.7 488.8 377.3 489.2 377.9 489.6 378.5 490.1 379.1 490.5 379.7 490.9 380.3 491.3 380.9 491.7 381.5 492.1 382.1 492.5 382.7 492.9 383.3 493.4 383.9 493.8 384.5 494.2 385.1 494.6 385.7 495.5 385.4 496.4 385.1 497.2 384.9 498.1 384.6 499 384.3 499.9 384 500.7 383.7 501.6 383.4 502.5 383.2 503.4 382.9 504.3 382.6 505.1 382.3 506 382 506.9 381.8 507.8 381.5 508.7 381.2 509.5 380.9 510.4 380.6 511.3 380.4 512.2 380.1 513 379.8 513.9 379.5 514.8 379.2 515.7 378.9 516.6 378.7 517.4 378.4 518.3 378.1 519.2 377.8 520.1 377.5 520.9 377.3 521.8 377 522.7 376.7 523.6 376.4 524.5 376.1 525.3 375.9 526.2 375.6 527.1 375.3 528 375 528.9 374.7 529.7 374.4 530.6 374.2 531.5 373.9 532.4 373.6 533.2 373.3 534.1 373 535 372.8 535.9 372.5 536.8 372.2 537.6 371.9 538.5 371.6 539.4 371.3 540.3 371.1 541.1 370.8 542 370.5 542.9 370.2 543.8 369.9 544.7 369.7 545.5 369.4 546.4 369.1 547.3 368.8 548.2 368.5 549.1 368.3 549.9 368 550.8 367.7 551.7 367.4 552.6 367.1 553.4 366.8 554.3 366.6 555.2 366.3 556.1 366 557 365.7 557.8 365.4 558.7 365.2 559.6 364.9 560.5 364.6 561.3 364.3 562.2 364 563.1 363.8 564 363.5 564.9 363.2 565.7 362.9 566.6 362.6 567.5 362.3 568.4 362.1 569.3 361.8 570.1 361.5 571 361.2 571.9 360.9 572.8 360.7 573.6 360.4 574.5 360.1 575.4 359.8 576.3 359.5 577.2 359.2 578 359 578.9 358.7 579.8 358.4 580.7 358.1 581.5 357.8 582.4 357.6 583.3 357.3 584.2 357 585.1 356.7 585.9 356.4 586.8 356.2 587.7 355.9 588.6 355.6 589.5 355.3 590.3 355 591.2 354.7 592.1 354.5 593 354.2 593.8 353.9 594.7 353.6 595.6 353.3 596.5 353.1 597.4 352.9 598.2 352.9 599.1 353 600 353.1 600.3 353.1 591.3 342 583.1 332.9 575.5 325.4 568.5 319.3 561.3 314.1 554.1 309.8 546.4 306.4 538.5 303.9 530.8 302.4 521.7 301.6 512 301.6 501.9 302.4 490.2 304.1 476.9 306.7 462.1 310.1z" fill="#8f0000"/>
</g>
<polyline points="643.9,254.0 647.0,255.6 650.5,256.8 654.0,258.0 657.5,259.4 660.8,260.9 664.1,262.5 667.3,264.2 670.3,266.1 673.2,268.1 676.0,270.2 678.6,272.4 681.1,274.6 683.5,277.0 685.9,279.3 688.1,281.7 690.3,284.2 692.4,286.6 694.5,289.1 696.5,291.5 698.5,294.0 700.4,296.5 702.4,299.0 704.3,301.5 706.1,303.9 708.0,306.4 709.8,308.9 711.6,311.4 713.4,313.9 715.2,316.3 717.0,318.8 718.8,321.3 720.5,323.8 722.2,326.2 724.0,328.7 725.7,331.1 727.4,333.6 729.1,336.1 730.8,338.5 732.5,341.0 734.2,343.4 735.9,345.8 737.6,348.3 739.3,350.7 741.0,353.2 742.7,355.6 744.3,358.0" fill="none" stroke="#000" stroke-width="4.5"/>
<polyline points="743.3,358.8 746.3,358.6 745.1,361.4 748.1,361.2 746.9,364.0 750.0,363.9 748.7,366.7 751.8,366.5 750.5,369.3 753.6,369.2 752.3,371.9 755.4,371.8 754.2,374.6 757.2,374.4 756.0,377.2 759.0,377.1 757.8,379.9 760.8,379.7 759.6,382.5 762.6,382.3 761.4,385.1 764.5,385.0 763.2,387.8 766.3,387.6 765.0,390.4 768.1,390.3 766.8,393.0 769.9,392.9 768.7,395.7 771.7,395.5 770.5,398.3 773.5,398.2 772.3,401.0 775.3,400.8 774.1,403.6 777.1,403.4 775.9,406.2 778.9,406.1 777.7,408.9 780.8,408.7 779.5,411.5 782.6,411.4 781.3,414.2 784.4,414.0" fill="none" stroke="#000" stroke-width="1.5" stroke-linejoin="miter"/>
<polyline points="744.3,358.0 746.0,360.5 747.7,362.9 749.4,365.3 751.0,367.7 752.7,370.2 754.4,372.6 756.0,375.0 757.7,377.4 759.4,379.9 761.0,382.3 762.7,384.7 764.3,387.1 766.0,389.5 767.7,391.9 769.3,394.3 771.0,396.8 772.6,399.2 774.3,401.6 775.9,404.0 777.6,406.4 779.2,408.8 780.9,411.2 782.5,413.6 784.2,416.0" fill="none" stroke="#000" stroke-width="3.2" stroke-dasharray="4 2.5 2.5 3 5 2 3 3.5"/>
<g stroke="#262626" stroke-width="1"><line x1="321.5" y1="303.6" x2="494.6" y2="555.4"/><line x1="494.6" y1="555.4" x2="862.6" y2="437.5"/><line x1="321.5" y1="303.6" x2="321.5" y2="133.9"/><line x1="845.1" y1="443.1" x2="850.2" y2="450.5"/><line x1="329.7" y1="315.6" x2="321.2" y2="318.3"/><line x1="757.5" y1="471.2" x2="762.6" y2="478.6"/><line x1="371.0" y1="375.5" x2="362.4" y2="378.3"/><line x1="669.8" y1="499.3" x2="674.9" y2="506.7"/><line x1="412.2" y1="435.5" x2="403.6" y2="438.2"/><line x1="582.2" y1="527.3" x2="587.3" y2="534.7"/><line x1="453.4" y1="495.4" x2="444.8" y2="498.2"/><line x1="494.6" y1="555.4" x2="499.7" y2="562.8"/><line x1="494.6" y1="555.4" x2="486.0" y2="558.1"/><line x1="321.5" y1="284.7" x2="316.0" y2="275.7"/><line x1="321.5" y1="247.0" x2="316.0" y2="238.0"/><line x1="321.5" y1="209.3" x2="316.0" y2="200.3"/><line x1="321.5" y1="171.6" x2="316.0" y2="162.6"/><line x1="321.5" y1="133.9" x2="316.0" y2="124.9"/></g>
<g font-family="Liberation Sans, sans-serif" font-size="13.3" fill="#262626">
<text x="863" y="469" text-anchor="middle">0.5</text>
<text x="769.5" y="497.5" text-anchor="middle">1</text>
<text x="687.3" y="525.8" text-anchor="middle">1.5</text>
<text x="594.5" y="553.8" text-anchor="middle">2</text>
<text x="511.9" y="581.6" text-anchor="middle">2.5</text>
<text x="314.3" y="333.6" text-anchor="end">0.5</text>
<text x="354.5" y="393.4" text-anchor="end">1</text>
<text x="396.3" y="453.2" text-anchor="end">1.5</text>
<text x="437.8" y="513.4" text-anchor="end">2</text>
<text x="478.7" y="575" text-anchor="end">2.5</text>
<text x="313" y="128" text-anchor="end">-20</text>
<text x="313" y="165.4" text-anchor="end">-40</text>
<text x="313" y="203" text-anchor="end">-60</text>
<text x="313" y="240.6" text-anchor="end">-80</text>
<text x="313" y="278" text-anchor="end">-100</text>
</g>
<g font-family="Liberation Serif, serif" font-size="15.9" fill="#484848">
<text x="679" y="593.8" text-anchor="middle">A-B bond distance (Å)</text>
<text transform="translate(272.3,220.3) rotate(-90)" text-anchor="middle" letter-spacing="0.22">Potential Energy (Kcal/mol)</text>
<text x="481.5" y="610.3" text-anchor="end">B-C bond distance (Å)</text>
</g>
</svg>
</body></html>
